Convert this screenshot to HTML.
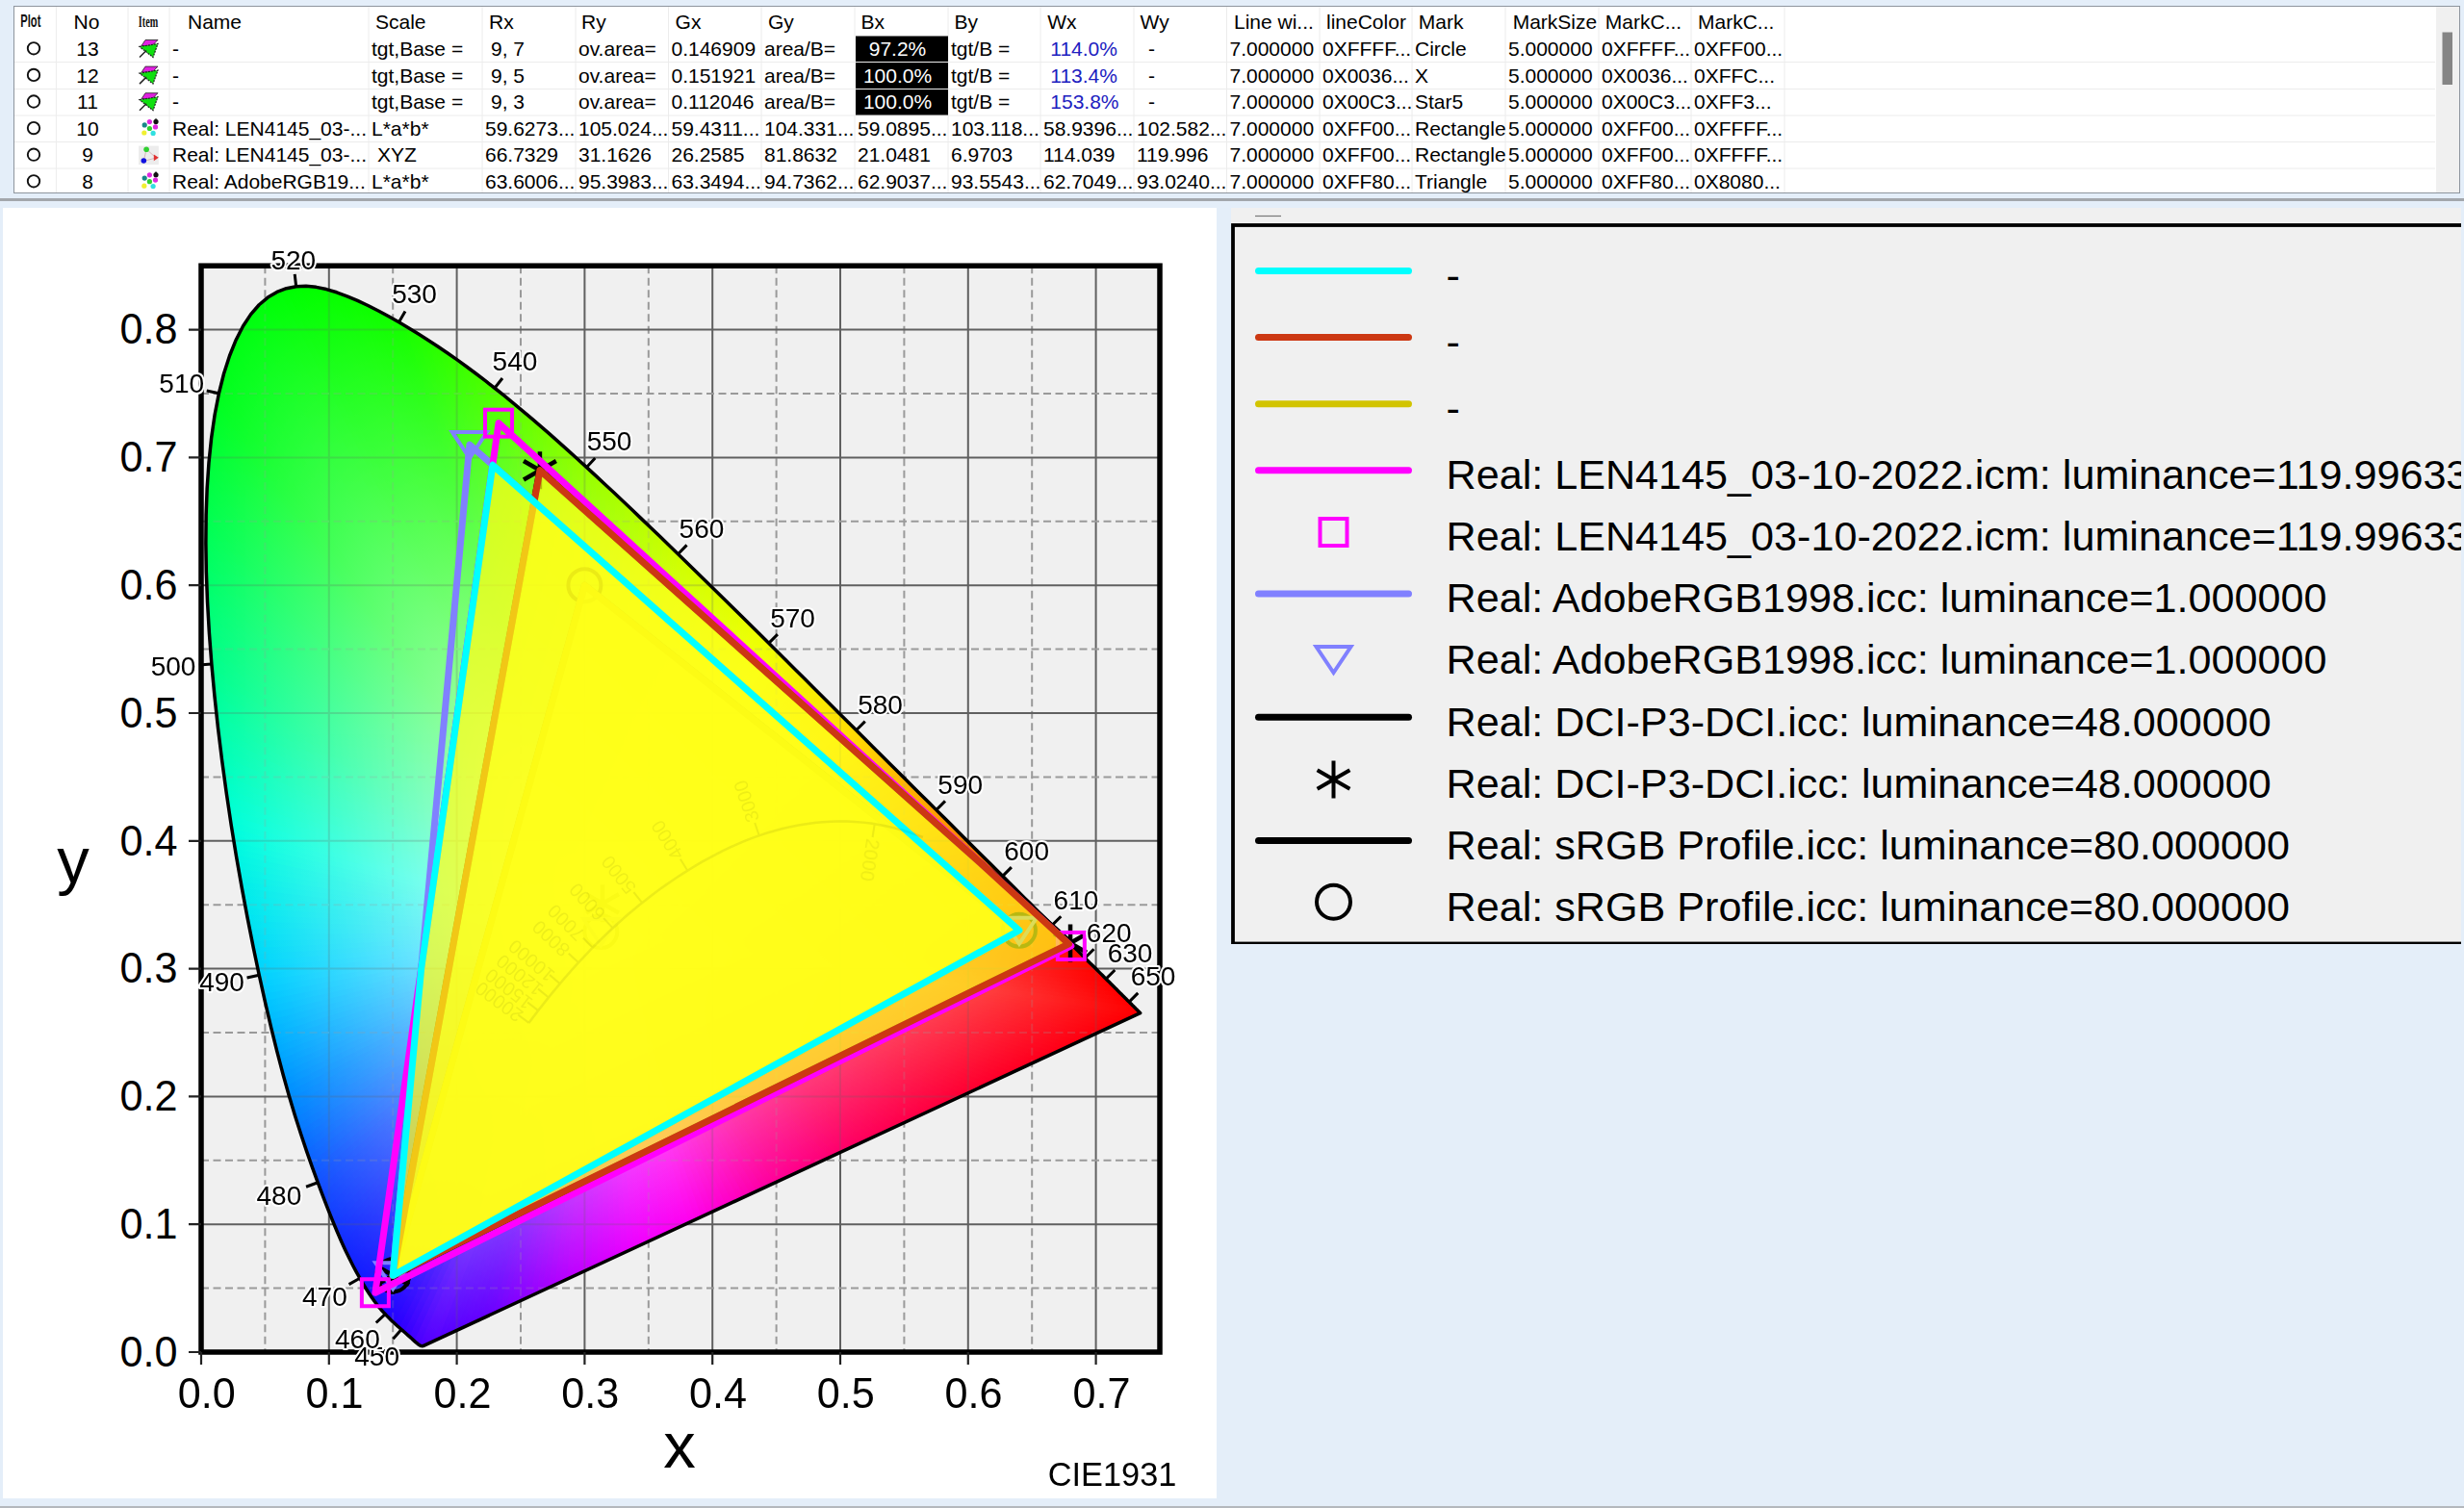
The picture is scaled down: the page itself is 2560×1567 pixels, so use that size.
<!DOCTYPE html>
<html><head><meta charset="utf-8"><style>
html,body{margin:0;padding:0;width:2560px;height:1567px;overflow:hidden;background:#e4eef9;}
svg{display:block;font-family:"Liberation Sans", sans-serif;}
</style></head><body>
<svg width="2560" height="1567" viewBox="0 0 2560 1567">
<rect x="0" y="0" width="2560" height="1567" fill="#e4eef9"/>
<rect x="14.5" y="6.5" width="2541" height="194" fill="#ffffff" stroke="#8e959e" stroke-width="1"/>
<rect x="0" y="206" width="2560" height="3" fill="#a3a7ac"/>
<rect x="3" y="216" width="1261" height="1341" fill="#ffffff"/>
<rect x="1279" y="216" width="1278" height="765" fill="#f0f0f0"/>
<rect x="0" y="1565" width="2560" height="2" fill="#b4b8bd"/>
<line x1="58.4" y1="7" x2="58.4" y2="200" stroke="#ececec" stroke-width="1"/>
<line x1="133" y1="7" x2="133" y2="200" stroke="#ececec" stroke-width="1"/>
<line x1="176" y1="7" x2="176" y2="200" stroke="#ececec" stroke-width="1"/>
<line x1="383" y1="7" x2="383" y2="200" stroke="#ececec" stroke-width="1"/>
<line x1="501" y1="7" x2="501" y2="200" stroke="#ececec" stroke-width="1"/>
<line x1="598" y1="7" x2="598" y2="200" stroke="#ececec" stroke-width="1"/>
<line x1="694.5" y1="7" x2="694.5" y2="200" stroke="#ececec" stroke-width="1"/>
<line x1="791" y1="7" x2="791" y2="200" stroke="#ececec" stroke-width="1"/>
<line x1="888" y1="7" x2="888" y2="200" stroke="#ececec" stroke-width="1"/>
<line x1="985" y1="7" x2="985" y2="200" stroke="#ececec" stroke-width="1"/>
<line x1="1081" y1="7" x2="1081" y2="200" stroke="#ececec" stroke-width="1"/>
<line x1="1178" y1="7" x2="1178" y2="200" stroke="#ececec" stroke-width="1"/>
<line x1="1274.5" y1="7" x2="1274.5" y2="200" stroke="#ececec" stroke-width="1"/>
<line x1="1371" y1="7" x2="1371" y2="200" stroke="#ececec" stroke-width="1"/>
<line x1="1467" y1="7" x2="1467" y2="200" stroke="#ececec" stroke-width="1"/>
<line x1="1564" y1="7" x2="1564" y2="200" stroke="#ececec" stroke-width="1"/>
<line x1="1661" y1="7" x2="1661" y2="200" stroke="#ececec" stroke-width="1"/>
<line x1="1757" y1="7" x2="1757" y2="200" stroke="#ececec" stroke-width="1"/>
<line x1="1854" y1="7" x2="1854" y2="200" stroke="#ececec" stroke-width="1"/>
<line x1="15" y1="64.5" x2="2530" y2="64.5" stroke="#ececec" stroke-width="1"/>
<line x1="15" y1="92.5" x2="2530" y2="92.5" stroke="#ececec" stroke-width="1"/>
<line x1="15" y1="120" x2="2530" y2="120" stroke="#ececec" stroke-width="1"/>
<line x1="15" y1="147.5" x2="2530" y2="147.5" stroke="#ececec" stroke-width="1"/>
<line x1="15" y1="175" x2="2530" y2="175" stroke="#ececec" stroke-width="1"/>
<rect x="2531" y="7" width="24" height="193" fill="#f0f0f0"/>
<rect x="2537.5" y="33.5" width="10.5" height="54.5" fill="#858585"/>
<rect x="889" y="37.5" width="96" height="26.5" fill="#000"/>
<rect x="889" y="65.0" width="96" height="27.0" fill="#000"/>
<rect x="889" y="93.0" width="96" height="26.5" fill="#000"/>
<text x="195" y="29.6" font-size="21" fill="#000">Name</text>
<text x="390" y="29.6" font-size="21" fill="#000">Scale</text>
<text x="508" y="29.6" font-size="21" fill="#000">Rx</text>
<text x="604" y="29.6" font-size="21" fill="#000">Ry</text>
<text x="701.6" y="29.6" font-size="21" fill="#000">Gx</text>
<text x="798" y="29.6" font-size="21" fill="#000">Gy</text>
<text x="894.4" y="29.6" font-size="21" fill="#000">Bx</text>
<text x="991.4" y="29.6" font-size="21" fill="#000">By</text>
<text x="1088.3" y="29.6" font-size="21" fill="#000">Wx</text>
<text x="1184.6" y="29.6" font-size="21" fill="#000">Wy</text>
<text x="1282" y="29.6" font-size="21" fill="#000">Line wi...</text>
<text x="1378" y="29.6" font-size="21" fill="#000">lineColor</text>
<text x="1473.8" y="29.6" font-size="21" fill="#000">Mark</text>
<text x="1571.7" y="29.6" font-size="21" fill="#000">MarkSize</text>
<text x="1667.8" y="29.6" font-size="21" fill="#000">MarkC...</text>
<text x="1764" y="29.6" font-size="21" fill="#000">MarkC...</text>
<text x="90" y="29.6" font-size="21" fill="#000" text-anchor="middle">No</text>
<text x="0" y="28.4" font-size="18" font-weight="bold" transform="translate(21.3 0) scale(0.62 1)" fill="#111">Plot</text>
<text x="0" y="28" font-size="17" font-weight="bold" font-family="Liberation Serif, serif" transform="translate(143.8 0) scale(0.6 1)" fill="#111">Item</text>
<circle cx="35" cy="50.3" r="6.2" fill="none" stroke="#111" stroke-width="1.9"/>
<text x="91" y="58" font-size="21" fill="#000" text-anchor="middle">13</text>
<text x="179" y="58" font-size="21" fill="#000">-</text>
<text x="386" y="58" font-size="21" fill="#000">tgt,Base =</text>
<text x="510" y="58" font-size="21" fill="#000">9, 7</text>
<text x="601" y="58" font-size="21" fill="#000">ov.area=</text>
<text x="697.5" y="58" font-size="21" fill="#000">0.146909</text>
<text x="794" y="58" font-size="21" fill="#000">area/B=</text>
<text x="932.5" y="58" font-size="21" fill="#fff" text-anchor="middle">97.2%</text>
<text x="988" y="58" font-size="21" fill="#000">tgt/B =</text>
<text x="1091.3" y="58" font-size="21" fill="#2020c0">114.0%</text>
<text x="1193" y="58" font-size="21" fill="#000">-</text>
<text x="1277.5" y="58" font-size="21" fill="#000">7.000000</text>
<text x="1374" y="58" font-size="21" fill="#000">0XFFFF...</text>
<text x="1470" y="58" font-size="21" fill="#000">Circle</text>
<text x="1567" y="58" font-size="21" fill="#000">5.000000</text>
<text x="1664" y="58" font-size="21" fill="#000">0XFFFF...</text>
<text x="1760" y="58" font-size="21" fill="#000">0XFF00...</text>
<circle cx="35" cy="77.9" r="6.2" fill="none" stroke="#111" stroke-width="1.9"/>
<text x="91" y="85.6" font-size="21" fill="#000" text-anchor="middle">12</text>
<text x="179" y="85.6" font-size="21" fill="#000">-</text>
<text x="386" y="85.6" font-size="21" fill="#000">tgt,Base =</text>
<text x="510" y="85.6" font-size="21" fill="#000">9, 5</text>
<text x="601" y="85.6" font-size="21" fill="#000">ov.area=</text>
<text x="697.5" y="85.6" font-size="21" fill="#000">0.151921</text>
<text x="794" y="85.6" font-size="21" fill="#000">area/B=</text>
<text x="932.5" y="85.6" font-size="21" fill="#fff" text-anchor="middle">100.0%</text>
<text x="988" y="85.6" font-size="21" fill="#000">tgt/B =</text>
<text x="1091.3" y="85.6" font-size="21" fill="#2020c0">113.4%</text>
<text x="1193" y="85.6" font-size="21" fill="#000">-</text>
<text x="1277.5" y="85.6" font-size="21" fill="#000">7.000000</text>
<text x="1374" y="85.6" font-size="21" fill="#000">0X0036...</text>
<text x="1470" y="85.6" font-size="21" fill="#000">X</text>
<text x="1567" y="85.6" font-size="21" fill="#000">5.000000</text>
<text x="1664" y="85.6" font-size="21" fill="#000">0X0036...</text>
<text x="1760" y="85.6" font-size="21" fill="#000">0XFFC...</text>
<circle cx="35" cy="105.5" r="6.2" fill="none" stroke="#111" stroke-width="1.9"/>
<text x="91" y="113.2" font-size="21" fill="#000" text-anchor="middle">11</text>
<text x="179" y="113.2" font-size="21" fill="#000">-</text>
<text x="386" y="113.2" font-size="21" fill="#000">tgt,Base =</text>
<text x="510" y="113.2" font-size="21" fill="#000">9, 3</text>
<text x="601" y="113.2" font-size="21" fill="#000">ov.area=</text>
<text x="697.5" y="113.2" font-size="21" fill="#000">0.112046</text>
<text x="794" y="113.2" font-size="21" fill="#000">area/B=</text>
<text x="932.5" y="113.2" font-size="21" fill="#fff" text-anchor="middle">100.0%</text>
<text x="988" y="113.2" font-size="21" fill="#000">tgt/B =</text>
<text x="1091.3" y="113.2" font-size="21" fill="#2020c0">153.8%</text>
<text x="1193" y="113.2" font-size="21" fill="#000">-</text>
<text x="1277.5" y="113.2" font-size="21" fill="#000">7.000000</text>
<text x="1374" y="113.2" font-size="21" fill="#000">0X00C3...</text>
<text x="1470" y="113.2" font-size="21" fill="#000">Star5</text>
<text x="1567" y="113.2" font-size="21" fill="#000">5.000000</text>
<text x="1664" y="113.2" font-size="21" fill="#000">0X00C3...</text>
<text x="1760" y="113.2" font-size="21" fill="#000">0XFF3...</text>
<circle cx="35" cy="133.1" r="6.2" fill="none" stroke="#111" stroke-width="1.9"/>
<text x="91" y="140.8" font-size="21" fill="#000" text-anchor="middle">10</text>
<text x="179" y="140.8" font-size="21" fill="#000">Real: LEN4145_03-...</text>
<text x="386" y="140.8" font-size="21" fill="#000">L*a*b*</text>
<text x="504" y="140.8" font-size="21" fill="#000">59.6273...</text>
<text x="601" y="140.8" font-size="21" fill="#000">105.024...</text>
<text x="697.5" y="140.8" font-size="21" fill="#000">59.4311...</text>
<text x="794" y="140.8" font-size="21" fill="#000">104.331...</text>
<text x="891" y="140.8" font-size="21" fill="#000">59.0895...</text>
<text x="988" y="140.8" font-size="21" fill="#000">103.118...</text>
<text x="1084" y="140.8" font-size="21" fill="#000">58.9396...</text>
<text x="1181" y="140.8" font-size="21" fill="#000">102.582...</text>
<text x="1277.5" y="140.8" font-size="21" fill="#000">7.000000</text>
<text x="1374" y="140.8" font-size="21" fill="#000">0XFF00...</text>
<text x="1470" y="140.8" font-size="21" fill="#000">Rectangle</text>
<text x="1567" y="140.8" font-size="21" fill="#000">5.000000</text>
<text x="1664" y="140.8" font-size="21" fill="#000">0XFF00...</text>
<text x="1760" y="140.8" font-size="21" fill="#000">0XFFFF...</text>
<circle cx="35" cy="160.7" r="6.2" fill="none" stroke="#111" stroke-width="1.9"/>
<text x="91" y="168.4" font-size="21" fill="#000" text-anchor="middle">9</text>
<text x="179" y="168.4" font-size="21" fill="#000">Real: LEN4145_03-...</text>
<text x="392" y="168.4" font-size="21" fill="#000">XYZ</text>
<text x="504" y="168.4" font-size="21" fill="#000">66.7329</text>
<text x="601" y="168.4" font-size="21" fill="#000">31.1626</text>
<text x="697.5" y="168.4" font-size="21" fill="#000">26.2585</text>
<text x="794" y="168.4" font-size="21" fill="#000">81.8632</text>
<text x="891" y="168.4" font-size="21" fill="#000">21.0481</text>
<text x="988" y="168.4" font-size="21" fill="#000">6.9703</text>
<text x="1084" y="168.4" font-size="21" fill="#000">114.039</text>
<text x="1181" y="168.4" font-size="21" fill="#000">119.996</text>
<text x="1277.5" y="168.4" font-size="21" fill="#000">7.000000</text>
<text x="1374" y="168.4" font-size="21" fill="#000">0XFF00...</text>
<text x="1470" y="168.4" font-size="21" fill="#000">Rectangle</text>
<text x="1567" y="168.4" font-size="21" fill="#000">5.000000</text>
<text x="1664" y="168.4" font-size="21" fill="#000">0XFF00...</text>
<text x="1760" y="168.4" font-size="21" fill="#000">0XFFFF...</text>
<circle cx="35" cy="188.3" r="6.2" fill="none" stroke="#111" stroke-width="1.9"/>
<text x="91" y="196" font-size="21" fill="#000" text-anchor="middle">8</text>
<text x="179" y="196" font-size="21" fill="#000">Real: AdobeRGB19...</text>
<text x="386" y="196" font-size="21" fill="#000">L*a*b*</text>
<text x="504" y="196" font-size="21" fill="#000">63.6006...</text>
<text x="601" y="196" font-size="21" fill="#000">95.3983...</text>
<text x="697.5" y="196" font-size="21" fill="#000">63.3494...</text>
<text x="794" y="196" font-size="21" fill="#000">94.7362...</text>
<text x="891" y="196" font-size="21" fill="#000">62.9037...</text>
<text x="988" y="196" font-size="21" fill="#000">93.5543...</text>
<text x="1084" y="196" font-size="21" fill="#000">62.7049...</text>
<text x="1181" y="196" font-size="21" fill="#000">93.0240...</text>
<text x="1277.5" y="196" font-size="21" fill="#000">7.000000</text>
<text x="1374" y="196" font-size="21" fill="#000">0XFF80...</text>
<text x="1470" y="196" font-size="21" fill="#000">Triangle</text>
<text x="1567" y="196" font-size="21" fill="#000">5.000000</text>
<text x="1664" y="196" font-size="21" fill="#000">0XFF80...</text>
<text x="1760" y="196" font-size="21" fill="#000">0X8080...</text>
<g transform="translate(154 50.5)"><path d="M-3,-9 L10,-9 L4,-3 L-7,-3 Z" fill="#e020e0" stroke="#222" stroke-width="0.8"/><path d="M-9,-2 L10,-5 L5,9 Z" fill="#10e010" stroke="#222" stroke-width="1.2" stroke-dasharray="2 1"/><path d="M-9,9 L-2,2" stroke="#222" stroke-width="1.5"/></g>
<g transform="translate(154 78.1)"><path d="M-3,-9 L10,-9 L4,-3 L-7,-3 Z" fill="#e020e0" stroke="#222" stroke-width="0.8"/><path d="M-9,-2 L10,-5 L5,9 Z" fill="#10e010" stroke="#222" stroke-width="1.2" stroke-dasharray="2 1"/><path d="M-9,9 L-2,2" stroke="#222" stroke-width="1.5"/></g>
<g transform="translate(154 105.7)"><path d="M-3,-9 L10,-9 L4,-3 L-7,-3 Z" fill="#e020e0" stroke="#222" stroke-width="0.8"/><path d="M-9,-2 L10,-5 L5,9 Z" fill="#10e010" stroke="#222" stroke-width="1.2" stroke-dasharray="2 1"/><path d="M-9,9 L-2,2" stroke="#222" stroke-width="1.5"/></g>
<g transform="translate(154.8 131.2)"><circle cx="-4.6" cy="-1.3" r="2.6" fill="#188888"/><circle cx="0.6" cy="-4.6" r="2.6" fill="#e028e0"/><circle cx="7.2" cy="-4.6" r="2.6" fill="#111"/><circle cx="6.7" cy="0.7" r="2.6" fill="#e028e0"/><circle cx="0.6" cy="2.3" r="2.6" fill="#30d030"/><circle cx="-5" cy="6.8" r="2.6" fill="#f0f030"/><circle cx="4.3" cy="7.2" r="2.6" fill="#30e0e0"/><path d="M7.2,-8.5 L9.5,-5.5 L7.2,-2.5 L4.9,-5.5Z" fill="#111"/></g>
<g transform="translate(154.3 161.2)"><rect x="-10.3" y="-9.6" width="20.8" height="19.5" fill="#ececec"/><path d="M-2.2,-6 L8,2.8 L-5,6.2 Z" fill="none" stroke="#d8b8b8" stroke-width="1"/><circle cx="-2.2" cy="-6" r="2.8" fill="#30d030"/><circle cx="-5" cy="5.8" r="2.8" fill="#1010e0"/><path d="M5.5,-0.8 L10.5,2.6 L5.5,6Z" fill="#e03030"/></g>
<g transform="translate(154.8 186.39999999999998)"><circle cx="-4.6" cy="-1.3" r="2.6" fill="#188888"/><circle cx="0.6" cy="-4.6" r="2.6" fill="#e028e0"/><circle cx="7.2" cy="-4.6" r="2.6" fill="#111"/><circle cx="6.7" cy="0.7" r="2.6" fill="#e028e0"/><circle cx="0.6" cy="2.3" r="2.6" fill="#30d030"/><circle cx="-5" cy="6.8" r="2.6" fill="#f0f030"/><circle cx="4.3" cy="7.2" r="2.6" fill="#30e0e0"/><path d="M7.2,-8.5 L9.5,-5.5 L7.2,-2.5 L4.9,-5.5Z" fill="#111"/></g>
<line x1="1304" y1="224.5" x2="1331" y2="224.5" stroke="#777" stroke-width="1.2"/>
<clipPath id="legclip"><rect x="1279" y="216" width="1278" height="765"/></clipPath>
<g clip-path="url(#legclip)">
<rect x="1281" y="234" width="1290" height="746.5" fill="none" stroke="#000" stroke-width="3.8"/>
<text x="1502.5" y="300.7" font-size="43.15" fill="#000">-</text>
<text x="1502.5" y="369.9" font-size="43.15" fill="#000">-</text>
<text x="1502.5" y="439.1" font-size="43.15" fill="#000">-</text>
<text x="1502.5" y="507.9" font-size="43.15" fill="#000">Real: LEN4145_03-10-2022.icm: luminance=119.996338</text>
<text x="1502.5" y="572.2" font-size="43.15" fill="#000">Real: LEN4145_03-10-2022.icm: luminance=119.996338</text>
<text x="1502.5" y="636.3" font-size="43.15" fill="#000">Real: AdobeRGB1998.icc: luminance=1.000000</text>
<text x="1502.5" y="700.4" font-size="43.15" fill="#000">Real: AdobeRGB1998.icc: luminance=1.000000</text>
<text x="1502.5" y="764.5" font-size="43.15" fill="#000">Real: DCI-P3-DCI.icc: luminance=48.000000</text>
<text x="1502.5" y="828.6" font-size="43.15" fill="#000">Real: DCI-P3-DCI.icc: luminance=48.000000</text>
<text x="1502.5" y="892.7" font-size="43.15" fill="#000">Real: sRGB Profile.icc: luminance=80.000000</text>
<text x="1502.5" y="956.8" font-size="43.15" fill="#000">Real: sRGB Profile.icc: luminance=80.000000</text>
</g>
<line x1="1307.5" y1="281.6" x2="1463.5" y2="281.6" stroke="#00ffff" stroke-width="7" stroke-linecap="round"/>
<line x1="1307.5" y1="350.6" x2="1463.5" y2="350.6" stroke="#cc3812" stroke-width="7" stroke-linecap="round"/>
<line x1="1307.5" y1="419.8" x2="1463.5" y2="419.8" stroke="#d2c400" stroke-width="7" stroke-linecap="round"/>
<line x1="1307.5" y1="488.7" x2="1463.5" y2="488.7" stroke="#ff00ff" stroke-width="7" stroke-linecap="round"/>
<line x1="1307.5" y1="617" x2="1463.5" y2="617" stroke="#8080ff" stroke-width="7" stroke-linecap="round"/>
<line x1="1307.5" y1="745.3" x2="1463.5" y2="745.3" stroke="#000" stroke-width="7" stroke-linecap="round"/>
<line x1="1307.5" y1="873.4" x2="1463.5" y2="873.4" stroke="#000" stroke-width="7" stroke-linecap="round"/>
<rect x="1371.5" y="539" width="28" height="28" fill="none" stroke="#ff00ff" stroke-width="4"/>
<path d="M1367.5,672 L1403.5,672 L1385.5,699 Z" fill="none" stroke="#8080ff" stroke-width="4" stroke-linejoin="miter"/>
<path d="M1385.5,790.5L1385.5,829.5M1402.4,800.2L1368.6,819.8M1402.4,819.8L1368.6,800.2" stroke="#000" stroke-width="4" fill="none"/>
<circle cx="1385.5" cy="937.3" r="17.5" fill="none" stroke="#000" stroke-width="4"/>
<rect x="209.0" y="276.2" width="996" height="1128.8" fill="#f0f0f0"/>
<line x1="275.4" y1="276.2" x2="275.4" y2="1405.0" stroke="#9a9a9a" stroke-width="2" stroke-dasharray="8 4.5"/><line x1="341.8" y1="276.2" x2="341.8" y2="1405.0" stroke="#606060" stroke-width="2"/><line x1="408.2" y1="276.2" x2="408.2" y2="1405.0" stroke="#9a9a9a" stroke-width="2" stroke-dasharray="8 4.5"/><line x1="474.6" y1="276.2" x2="474.6" y2="1405.0" stroke="#606060" stroke-width="2"/><line x1="541" y1="276.2" x2="541" y2="1405.0" stroke="#9a9a9a" stroke-width="2" stroke-dasharray="8 4.5"/><line x1="607.4" y1="276.2" x2="607.4" y2="1405.0" stroke="#606060" stroke-width="2"/><line x1="673.8" y1="276.2" x2="673.8" y2="1405.0" stroke="#9a9a9a" stroke-width="2" stroke-dasharray="8 4.5"/><line x1="740.2" y1="276.2" x2="740.2" y2="1405.0" stroke="#606060" stroke-width="2"/><line x1="806.6" y1="276.2" x2="806.6" y2="1405.0" stroke="#9a9a9a" stroke-width="2" stroke-dasharray="8 4.5"/><line x1="873" y1="276.2" x2="873" y2="1405.0" stroke="#606060" stroke-width="2"/><line x1="939.4" y1="276.2" x2="939.4" y2="1405.0" stroke="#9a9a9a" stroke-width="2" stroke-dasharray="8 4.5"/><line x1="1005.8" y1="276.2" x2="1005.8" y2="1405.0" stroke="#606060" stroke-width="2"/><line x1="1072.2" y1="276.2" x2="1072.2" y2="1405.0" stroke="#9a9a9a" stroke-width="2" stroke-dasharray="8 4.5"/><line x1="1138.6" y1="276.2" x2="1138.6" y2="1405.0" stroke="#606060" stroke-width="2"/><line x1="209.0" y1="1338.6" x2="1205" y2="1338.6" stroke="#9a9a9a" stroke-width="2" stroke-dasharray="8 4.5"/><line x1="209.0" y1="1272.2" x2="1205" y2="1272.2" stroke="#606060" stroke-width="2"/><line x1="209.0" y1="1205.8" x2="1205" y2="1205.8" stroke="#9a9a9a" stroke-width="2" stroke-dasharray="8 4.5"/><line x1="209.0" y1="1139.4" x2="1205" y2="1139.4" stroke="#606060" stroke-width="2"/><line x1="209.0" y1="1073" x2="1205" y2="1073" stroke="#9a9a9a" stroke-width="2" stroke-dasharray="8 4.5"/><line x1="209.0" y1="1006.6" x2="1205" y2="1006.6" stroke="#606060" stroke-width="2"/><line x1="209.0" y1="940.2" x2="1205" y2="940.2" stroke="#9a9a9a" stroke-width="2" stroke-dasharray="8 4.5"/><line x1="209.0" y1="873.8" x2="1205" y2="873.8" stroke="#606060" stroke-width="2"/><line x1="209.0" y1="807.4" x2="1205" y2="807.4" stroke="#9a9a9a" stroke-width="2" stroke-dasharray="8 4.5"/><line x1="209.0" y1="741" x2="1205" y2="741" stroke="#606060" stroke-width="2"/><line x1="209.0" y1="674.6" x2="1205" y2="674.6" stroke="#9a9a9a" stroke-width="2" stroke-dasharray="8 4.5"/><line x1="209.0" y1="608.2" x2="1205" y2="608.2" stroke="#606060" stroke-width="2"/><line x1="209.0" y1="541.8" x2="1205" y2="541.8" stroke="#9a9a9a" stroke-width="2" stroke-dasharray="8 4.5"/><line x1="209.0" y1="475.4" x2="1205" y2="475.4" stroke="#606060" stroke-width="2"/><line x1="209.0" y1="409" x2="1205" y2="409" stroke="#9a9a9a" stroke-width="2" stroke-dasharray="8 4.5"/><line x1="209.0" y1="342.6" x2="1205" y2="342.6" stroke="#606060" stroke-width="2"/>
<clipPath id="lc"><path d="M440.22,1398.41 L440.21,1398.38 L440.19,1398.37 L440.16,1398.37 L440.13,1398.37 L440.09,1398.39 L440.04,1398.41 L439.99,1398.42 L439.93,1398.44 L439.87,1398.46 L439.81,1398.47 L439.74,1398.47 L439.68,1398.46 L439.61,1398.46 L439.55,1398.46 L439.49,1398.47 L439.43,1398.49 L439.37,1398.52 L439.32,1398.56 L439.26,1398.6 L439.2,1398.63 L439.13,1398.65 L439.05,1398.66 L438.96,1398.66 L438.87,1398.66 L438.77,1398.65 L438.66,1398.65 L438.55,1398.64 L438.43,1398.63 L438.31,1398.63 L438.19,1398.63 L438.06,1398.63 L437.94,1398.62 L437.81,1398.62 L437.67,1398.61 L437.54,1398.59 L437.39,1398.55 L437.23,1398.5 L437.05,1398.43 L436.86,1398.34 L436.63,1398.23 L436.38,1398.09 L436.1,1397.93 L435.8,1397.74 L435.49,1397.54 L435.16,1397.31 L434.82,1397.06 L434.47,1396.79 L434.1,1396.5 L433.7,1396.18 L433.27,1395.84 L432.81,1395.46 L432.31,1395.05 L431.78,1394.62 L431.22,1394.14 L430.64,1393.63 L430.04,1393.09 L429.41,1392.51 L428.76,1391.89 L428.07,1391.25 L427.34,1390.58 L426.56,1389.88 L425.74,1389.15 L424.87,1388.38 L423.93,1387.56 L422.94,1386.69 L421.88,1385.76 L420.76,1384.77 L419.57,1383.72 L418.32,1382.62 L417.02,1381.48 L415.65,1380.29 L414.23,1379.04 L412.73,1377.72 L411.16,1376.31 L409.51,1374.8 L407.79,1373.18 L405.98,1371.45 L404.11,1369.6 L402.17,1367.64 L400.18,1365.56 L398.13,1363.35 L396.01,1360.97 L393.79,1358.33 L391.45,1355.38 L388.94,1352.04 L386.27,1348.26 L383.41,1344.01 L380.38,1339.27 L377.19,1334.02 L373.83,1328.24 L370.31,1321.91 L366.63,1314.96 L362.77,1307.32 L358.75,1298.92 L354.54,1289.68 L350.14,1279.53 L345.53,1268.42 L340.69,1256.29 L335.6,1243.09 L330.23,1228.77 L324.58,1213.28 L318.7,1196.55 L312.64,1178.54 L306.47,1159.19 L300.25,1138.44 L294.03,1116.26 L287.82,1092.65 L281.63,1067.6 L275.45,1041.14 L269.28,1013.27 L263.13,984.03 L257.08,953.58 L251.18,922.12 L245.51,889.84 L240.15,856.93 L235.17,823.6 L230.61,790.03 L226.5,756.44 L222.91,723.02 L219.85,689.98 L217.38,657.5 L215.53,625.71 L214.35,594.7 L213.87,564.56 L214.13,535.4 L215.16,507.32 L217,480.47 L219.64,454.99 L223.11,431.03 L227.42,408.75 L232.57,388.27 L238.52,369.72 L245.21,353.2 L252.59,338.8 L260.59,326.64 L269.17,316.76 L278.24,309.08 L287.73,303.44 L297.56,299.7 L307.67,297.71 L317.98,297.33 L328.46,298.35 L339.07,300.57 L349.8,303.79 L360.6,307.79 L371.46,312.4 L382.33,317.5 L393.15,323 L403.88,328.8 L414.47,334.82 L424.88,340.97 L435.13,347.25 L445.23,353.67 L455.23,360.25 L465.14,367 L474.99,373.92 L484.79,381.01 L494.54,388.27 L504.26,395.68 L513.94,403.25 L523.59,410.96 L533.21,418.81 L542.82,426.79 L552.4,434.89 L561.96,443.1 L571.49,451.42 L581.02,459.83 L590.53,468.34 L600.03,476.94 L609.52,485.61 L619.02,494.37 L628.52,503.19 L638.02,512.08 L647.52,521.04 L657.01,530.05 L666.51,539.11 L676.01,548.21 L685.5,557.35 L694.99,566.53 L704.48,575.73 L713.96,584.95 L723.44,594.2 L732.91,603.45 L742.36,612.72 L751.81,622 L761.23,631.28 L770.64,640.56 L780.02,649.83 L789.38,659.1 L798.71,668.35 L808.01,677.57 L817.27,686.78 L826.5,695.95 L835.68,705.08 L844.81,714.17 L853.88,723.22 L862.91,732.21 L871.87,741.14 L880.76,750.01 L889.59,758.81 L898.34,767.53 L907.01,776.17 L915.6,784.72 L924.09,793.17 L932.48,801.52 L940.77,809.76 L948.95,817.89 L957.01,825.91 L964.97,833.82 L972.8,841.62 L980.51,849.31 L988.07,856.86 L995.48,864.26 L1002.69,871.46 L1009.69,878.45 L1016.47,885.21 L1023.04,891.75 L1029.42,898.1 L1035.63,904.29 L1041.71,910.33 L1047.66,916.26 L1053.47,922.05 L1059.12,927.67 L1064.58,933.12 L1069.85,938.35 L1074.9,943.37 L1079.74,948.17 L1084.38,952.77 L1088.84,957.18 L1093.13,961.43 L1097.25,965.53 L1101.22,969.47 L1105.02,973.26 L1108.66,976.9 L1112.15,980.37 L1115.47,983.69 L1118.64,986.86 L1121.66,989.88 L1124.55,992.77 L1127.31,995.52 L1129.95,998.15 L1132.48,1000.66 L1134.9,1003.06 L1137.21,1005.34 L1139.41,1007.53 L1141.52,1009.62 L1143.53,1011.62 L1145.46,1013.54 L1147.32,1015.39 L1149.12,1017.18 L1150.86,1018.92 L1152.54,1020.6 L1154.16,1022.22 L1155.73,1023.78 L1157.23,1025.28 L1158.67,1026.73 L1160.06,1028.11 L1161.38,1029.44 L1162.65,1030.71 L1163.87,1031.92 L1165.04,1033.09 L1166.16,1034.21 L1167.23,1035.27 L1168.24,1036.27 L1169.18,1037.21 L1170.07,1038.09 L1170.9,1038.91 L1171.68,1039.69 L1172.42,1040.42 L1173.11,1041.11 L1173.78,1041.78 L1174.42,1042.41 L1175.02,1043.02 L1175.6,1043.6 L1176.14,1044.14 L1176.66,1044.66 L1177.14,1045.15 L1177.6,1045.6 L1178.02,1046.02 L1178.4,1046.4 L1178.75,1046.75 L1179.06,1047.06 L1179.35,1047.35 L1179.63,1047.63 L1179.89,1047.89 L1180.14,1048.14 L1180.39,1048.39 L1180.63,1048.63 L1180.86,1048.86 L1181.08,1049.08 L1181.29,1049.29 L1181.49,1049.49 L1181.68,1049.68 L1181.87,1049.87 L1182.05,1050.05 L1182.24,1050.24 L1182.42,1050.42 L1182.61,1050.61 L1182.8,1050.8 L1182.98,1050.98 L1183.17,1051.17 L1183.35,1051.35 L1183.52,1051.52 L1183.68,1051.68 L1183.82,1051.82 L1183.94,1051.94 L1184.04,1052.04 L1184.13,1052.13 L1184.2,1052.2 L1184.27,1052.27 L1184.33,1052.33 L1184.39,1052.39 L1184.44,1052.44 L1184.49,1052.49 L1184.54,1052.54 L1184.57,1052.57 L1184.61,1052.61 L1184.63,1052.63 L1184.65,1052.65 L1184.67,1052.67 Z"/></clipPath>
<defs><radialGradient id="w0" gradientUnits="userSpaceOnUse" cx="624.27" cy="968.09" r="468.34"><stop offset="0" stop-color="#fff"/><stop offset="0.35" stop-color="#b896ff"/><stop offset="0.7" stop-color="#7f43ff"/><stop offset="1" stop-color="#5100ff"/></radialGradient><radialGradient id="w1" gradientUnits="userSpaceOnUse" cx="624.27" cy="968.09" r="467.67"><stop offset="0" stop-color="#fff"/><stop offset="0.35" stop-color="#b596ff"/><stop offset="0.7" stop-color="#7a43ff"/><stop offset="1" stop-color="#4b00ff"/></radialGradient><radialGradient id="w2" gradientUnits="userSpaceOnUse" cx="624.27" cy="968.09" r="465.66"><stop offset="0" stop-color="#fff"/><stop offset="0.35" stop-color="#b196ff"/><stop offset="0.7" stop-color="#7343ff"/><stop offset="1" stop-color="#4100ff"/></radialGradient><radialGradient id="w3" gradientUnits="userSpaceOnUse" cx="624.27" cy="968.09" r="463.73"><stop offset="0" stop-color="#fff"/><stop offset="0.35" stop-color="#ae96ff"/><stop offset="0.7" stop-color="#6d43ff"/><stop offset="1" stop-color="#3900ff"/></radialGradient><radialGradient id="w4" gradientUnits="userSpaceOnUse" cx="624.27" cy="968.09" r="461.93"><stop offset="0" stop-color="#fff"/><stop offset="0.35" stop-color="#aa97ff"/><stop offset="0.7" stop-color="#6743ff"/><stop offset="1" stop-color="#3100ff"/></radialGradient><radialGradient id="w5" gradientUnits="userSpaceOnUse" cx="624.27" cy="968.09" r="460.17"><stop offset="0" stop-color="#fff"/><stop offset="0.35" stop-color="#a897ff"/><stop offset="0.7" stop-color="#6244ff"/><stop offset="1" stop-color="#2a01ff"/></radialGradient><radialGradient id="w6" gradientUnits="userSpaceOnUse" cx="624.27" cy="968.09" r="458.3"><stop offset="0" stop-color="#fff"/><stop offset="0.35" stop-color="#a698ff"/><stop offset="0.7" stop-color="#5e45ff"/><stop offset="1" stop-color="#2503ff"/></radialGradient><radialGradient id="w7" gradientUnits="userSpaceOnUse" cx="624.27" cy="968.09" r="456.3"><stop offset="0" stop-color="#fff"/><stop offset="0.35" stop-color="#a498ff"/><stop offset="0.7" stop-color="#5b46ff"/><stop offset="1" stop-color="#2105ff"/></radialGradient><radialGradient id="w8" gradientUnits="userSpaceOnUse" cx="624.27" cy="968.09" r="454.11"><stop offset="0" stop-color="#fff"/><stop offset="0.35" stop-color="#a399ff"/><stop offset="0.7" stop-color="#5948ff"/><stop offset="1" stop-color="#1d07ff"/></radialGradient><radialGradient id="w9" gradientUnits="userSpaceOnUse" cx="624.27" cy="968.09" r="451.67"><stop offset="0" stop-color="#fff"/><stop offset="0.35" stop-color="#a19aff"/><stop offset="0.7" stop-color="#574aff"/><stop offset="1" stop-color="#1b0aff"/></radialGradient><radialGradient id="w10" gradientUnits="userSpaceOnUse" cx="624.27" cy="968.09" r="449.02"><stop offset="0" stop-color="#fff"/><stop offset="0.35" stop-color="#a19cff"/><stop offset="0.7" stop-color="#554cff"/><stop offset="1" stop-color="#190dff"/></radialGradient><radialGradient id="w11" gradientUnits="userSpaceOnUse" cx="624.27" cy="968.09" r="446.2"><stop offset="0" stop-color="#fff"/><stop offset="0.35" stop-color="#a09dff"/><stop offset="0.7" stop-color="#544fff"/><stop offset="1" stop-color="#1710ff"/></radialGradient><radialGradient id="w12" gradientUnits="userSpaceOnUse" cx="624.27" cy="968.09" r="443.29"><stop offset="0" stop-color="#fff"/><stop offset="0.35" stop-color="#9f9fff"/><stop offset="0.7" stop-color="#5351ff"/><stop offset="1" stop-color="#1614ff"/></radialGradient><radialGradient id="w13" gradientUnits="userSpaceOnUse" cx="624.27" cy="968.09" r="440.31"><stop offset="0" stop-color="#fff"/><stop offset="0.35" stop-color="#9fa0ff"/><stop offset="0.7" stop-color="#5254ff"/><stop offset="1" stop-color="#1517ff"/></radialGradient><radialGradient id="w14" gradientUnits="userSpaceOnUse" cx="624.27" cy="968.09" r="437.29"><stop offset="0" stop-color="#fff"/><stop offset="0.35" stop-color="#9fa1ff"/><stop offset="0.7" stop-color="#5257ff"/><stop offset="1" stop-color="#141bff"/></radialGradient><radialGradient id="w15" gradientUnits="userSpaceOnUse" cx="624.27" cy="968.09" r="434.23"><stop offset="0" stop-color="#fff"/><stop offset="0.35" stop-color="#9fa3ff"/><stop offset="0.7" stop-color="#5259ff"/><stop offset="1" stop-color="#141eff"/></radialGradient><radialGradient id="w16" gradientUnits="userSpaceOnUse" cx="624.27" cy="968.09" r="431.16"><stop offset="0" stop-color="#fff"/><stop offset="0.35" stop-color="#9fa4ff"/><stop offset="0.7" stop-color="#525cff"/><stop offset="1" stop-color="#1422ff"/></radialGradient><radialGradient id="w17" gradientUnits="userSpaceOnUse" cx="624.27" cy="968.09" r="428.07"><stop offset="0" stop-color="#fff"/><stop offset="0.35" stop-color="#9fa6ff"/><stop offset="0.7" stop-color="#525eff"/><stop offset="1" stop-color="#1425ff"/></radialGradient><radialGradient id="w18" gradientUnits="userSpaceOnUse" cx="624.27" cy="968.09" r="424.97"><stop offset="0" stop-color="#fff"/><stop offset="0.35" stop-color="#9fa7ff"/><stop offset="0.7" stop-color="#5260ff"/><stop offset="1" stop-color="#1428ff"/></radialGradient><radialGradient id="w19" gradientUnits="userSpaceOnUse" cx="624.27" cy="968.09" r="421.88"><stop offset="0" stop-color="#fff"/><stop offset="0.35" stop-color="#9fa8ff"/><stop offset="0.7" stop-color="#5263ff"/><stop offset="1" stop-color="#142bff"/></radialGradient><radialGradient id="w20" gradientUnits="userSpaceOnUse" cx="624.27" cy="968.09" r="418.8"><stop offset="0" stop-color="#fff"/><stop offset="0.35" stop-color="#9faaff"/><stop offset="0.7" stop-color="#5265ff"/><stop offset="1" stop-color="#142fff"/></radialGradient><radialGradient id="w21" gradientUnits="userSpaceOnUse" cx="624.27" cy="968.09" r="415.74"><stop offset="0" stop-color="#fff"/><stop offset="0.35" stop-color="#9fabff"/><stop offset="0.7" stop-color="#5268ff"/><stop offset="1" stop-color="#1433ff"/></radialGradient><radialGradient id="w22" gradientUnits="userSpaceOnUse" cx="624.27" cy="968.09" r="412.7"><stop offset="0" stop-color="#fff"/><stop offset="0.35" stop-color="#9fadff"/><stop offset="0.7" stop-color="#526bff"/><stop offset="1" stop-color="#1437ff"/></radialGradient><radialGradient id="w23" gradientUnits="userSpaceOnUse" cx="624.27" cy="968.09" r="409.71"><stop offset="0" stop-color="#fff"/><stop offset="0.35" stop-color="#9fafff"/><stop offset="0.7" stop-color="#526eff"/><stop offset="1" stop-color="#143bff"/></radialGradient><radialGradient id="w24" gradientUnits="userSpaceOnUse" cx="624.27" cy="968.09" r="406.78"><stop offset="0" stop-color="#fff"/><stop offset="0.35" stop-color="#9fb0ff"/><stop offset="0.7" stop-color="#5271ff"/><stop offset="1" stop-color="#143fff"/></radialGradient><radialGradient id="w25" gradientUnits="userSpaceOnUse" cx="624.27" cy="968.09" r="403.9"><stop offset="0" stop-color="#fff"/><stop offset="0.35" stop-color="#9fb2ff"/><stop offset="0.7" stop-color="#5274ff"/><stop offset="1" stop-color="#1442ff"/></radialGradient><radialGradient id="w26" gradientUnits="userSpaceOnUse" cx="624.27" cy="968.09" r="401.08"><stop offset="0" stop-color="#fff"/><stop offset="0.35" stop-color="#9fb3ff"/><stop offset="0.7" stop-color="#5276ff"/><stop offset="1" stop-color="#1446ff"/></radialGradient><radialGradient id="w27" gradientUnits="userSpaceOnUse" cx="624.27" cy="968.09" r="398.34"><stop offset="0" stop-color="#fff"/><stop offset="0.35" stop-color="#9fb5ff"/><stop offset="0.7" stop-color="#5279ff"/><stop offset="1" stop-color="#1449ff"/></radialGradient><radialGradient id="w28" gradientUnits="userSpaceOnUse" cx="624.27" cy="968.09" r="395.67"><stop offset="0" stop-color="#fff"/><stop offset="0.35" stop-color="#9fb6ff"/><stop offset="0.7" stop-color="#517bff"/><stop offset="1" stop-color="#144dff"/></radialGradient><radialGradient id="w29" gradientUnits="userSpaceOnUse" cx="624.27" cy="968.09" r="393.08"><stop offset="0" stop-color="#fff"/><stop offset="0.35" stop-color="#9eb8ff"/><stop offset="0.7" stop-color="#517eff"/><stop offset="1" stop-color="#1351ff"/></radialGradient><radialGradient id="w30" gradientUnits="userSpaceOnUse" cx="624.27" cy="968.09" r="390.57"><stop offset="0" stop-color="#fff"/><stop offset="0.35" stop-color="#9eb9ff"/><stop offset="0.7" stop-color="#5082ff"/><stop offset="1" stop-color="#1255ff"/></radialGradient><radialGradient id="w31" gradientUnits="userSpaceOnUse" cx="624.27" cy="968.09" r="388.15"><stop offset="0" stop-color="#fff"/><stop offset="0.35" stop-color="#9dbbff"/><stop offset="0.7" stop-color="#4f85ff"/><stop offset="1" stop-color="#115aff"/></radialGradient><radialGradient id="w32" gradientUnits="userSpaceOnUse" cx="624.27" cy="968.09" r="385.81"><stop offset="0" stop-color="#fff"/><stop offset="0.35" stop-color="#9dbdff"/><stop offset="0.7" stop-color="#4e89ff"/><stop offset="1" stop-color="#0f5fff"/></radialGradient><radialGradient id="w33" gradientUnits="userSpaceOnUse" cx="624.27" cy="968.09" r="383.55"><stop offset="0" stop-color="#fff"/><stop offset="0.35" stop-color="#9cbfff"/><stop offset="0.7" stop-color="#4d8cff"/><stop offset="1" stop-color="#0d64ff"/></radialGradient><radialGradient id="w34" gradientUnits="userSpaceOnUse" cx="624.27" cy="968.09" r="381.37"><stop offset="0" stop-color="#fff"/><stop offset="0.35" stop-color="#9bc1ff"/><stop offset="0.7" stop-color="#4c90ff"/><stop offset="1" stop-color="#0c68ff"/></radialGradient><radialGradient id="w35" gradientUnits="userSpaceOnUse" cx="624.27" cy="968.09" r="379.28"><stop offset="0" stop-color="#fff"/><stop offset="0.35" stop-color="#9bc3ff"/><stop offset="0.7" stop-color="#4a93ff"/><stop offset="1" stop-color="#0a6dff"/></radialGradient><radialGradient id="w36" gradientUnits="userSpaceOnUse" cx="624.27" cy="968.09" r="377.27"><stop offset="0" stop-color="#fff"/><stop offset="0.35" stop-color="#9ac5ff"/><stop offset="0.7" stop-color="#4996ff"/><stop offset="1" stop-color="#0971ff"/></radialGradient><radialGradient id="w37" gradientUnits="userSpaceOnUse" cx="624.27" cy="968.09" r="375.34"><stop offset="0" stop-color="#fff"/><stop offset="0.35" stop-color="#9ac7ff"/><stop offset="0.7" stop-color="#4899ff"/><stop offset="1" stop-color="#0875ff"/></radialGradient><radialGradient id="w38" gradientUnits="userSpaceOnUse" cx="624.27" cy="968.09" r="373.49"><stop offset="0" stop-color="#fff"/><stop offset="0.35" stop-color="#99c8ff"/><stop offset="0.7" stop-color="#479dff"/><stop offset="1" stop-color="#067aff"/></radialGradient><radialGradient id="w39" gradientUnits="userSpaceOnUse" cx="624.27" cy="968.09" r="371.73"><stop offset="0" stop-color="#fff"/><stop offset="0.35" stop-color="#98caff"/><stop offset="0.7" stop-color="#46a0ff"/><stop offset="1" stop-color="#057eff"/></radialGradient><radialGradient id="w40" gradientUnits="userSpaceOnUse" cx="624.27" cy="968.09" r="370.05"><stop offset="0" stop-color="#fff"/><stop offset="0.35" stop-color="#98ccff"/><stop offset="0.7" stop-color="#45a3ff"/><stop offset="1" stop-color="#0382ff"/></radialGradient><radialGradient id="w41" gradientUnits="userSpaceOnUse" cx="624.27" cy="968.09" r="368.46"><stop offset="0" stop-color="#fff"/><stop offset="0.35" stop-color="#97cdff"/><stop offset="0.7" stop-color="#44a6ff"/><stop offset="1" stop-color="#0286ff"/></radialGradient><radialGradient id="w42" gradientUnits="userSpaceOnUse" cx="624.27" cy="968.09" r="366.95"><stop offset="0" stop-color="#fff"/><stop offset="0.35" stop-color="#97cfff"/><stop offset="0.7" stop-color="#44a8ff"/><stop offset="1" stop-color="#018aff"/></radialGradient><radialGradient id="w43" gradientUnits="userSpaceOnUse" cx="624.27" cy="968.09" r="365.54"><stop offset="0" stop-color="#fff"/><stop offset="0.35" stop-color="#97d1ff"/><stop offset="0.7" stop-color="#43abff"/><stop offset="1" stop-color="#008eff"/></radialGradient><radialGradient id="w44" gradientUnits="userSpaceOnUse" cx="624.27" cy="968.09" r="364.21"><stop offset="0" stop-color="#fff"/><stop offset="0.35" stop-color="#96d2ff"/><stop offset="0.7" stop-color="#43aeff"/><stop offset="1" stop-color="#0092ff"/></radialGradient><radialGradient id="w45" gradientUnits="userSpaceOnUse" cx="624.27" cy="968.09" r="362.98"><stop offset="0" stop-color="#fff"/><stop offset="0.35" stop-color="#96d4ff"/><stop offset="0.7" stop-color="#43b2ff"/><stop offset="1" stop-color="#0096ff"/></radialGradient><radialGradient id="w46" gradientUnits="userSpaceOnUse" cx="624.27" cy="968.09" r="361.84"><stop offset="0" stop-color="#fff"/><stop offset="0.35" stop-color="#96d6ff"/><stop offset="0.7" stop-color="#43b5ff"/><stop offset="1" stop-color="#009aff"/></radialGradient><radialGradient id="w47" gradientUnits="userSpaceOnUse" cx="624.27" cy="968.09" r="360.81"><stop offset="0" stop-color="#fff"/><stop offset="0.35" stop-color="#96d7ff"/><stop offset="0.7" stop-color="#43b8ff"/><stop offset="1" stop-color="#009eff"/></radialGradient><radialGradient id="w48" gradientUnits="userSpaceOnUse" cx="624.27" cy="968.09" r="359.87"><stop offset="0" stop-color="#fff"/><stop offset="0.35" stop-color="#96d9ff"/><stop offset="0.7" stop-color="#43bbff"/><stop offset="1" stop-color="#00a2ff"/></radialGradient><radialGradient id="w49" gradientUnits="userSpaceOnUse" cx="624.27" cy="968.09" r="359.04"><stop offset="0" stop-color="#fff"/><stop offset="0.35" stop-color="#96dbff"/><stop offset="0.7" stop-color="#43beff"/><stop offset="1" stop-color="#00a6ff"/></radialGradient><radialGradient id="w50" gradientUnits="userSpaceOnUse" cx="624.27" cy="968.09" r="358.32"><stop offset="0" stop-color="#fff"/><stop offset="0.35" stop-color="#96dcff"/><stop offset="0.7" stop-color="#43c1ff"/><stop offset="1" stop-color="#00aaff"/></radialGradient><radialGradient id="w51" gradientUnits="userSpaceOnUse" cx="624.27" cy="968.09" r="357.7"><stop offset="0" stop-color="#fff"/><stop offset="0.35" stop-color="#96deff"/><stop offset="0.7" stop-color="#43c3ff"/><stop offset="1" stop-color="#00aeff"/></radialGradient><radialGradient id="w52" gradientUnits="userSpaceOnUse" cx="624.27" cy="968.09" r="357.2"><stop offset="0" stop-color="#fff"/><stop offset="0.35" stop-color="#96dfff"/><stop offset="0.7" stop-color="#43c6ff"/><stop offset="1" stop-color="#00b2ff"/></radialGradient><radialGradient id="w53" gradientUnits="userSpaceOnUse" cx="624.27" cy="968.09" r="356.81"><stop offset="0" stop-color="#fff"/><stop offset="0.35" stop-color="#96e1ff"/><stop offset="0.7" stop-color="#43c9ff"/><stop offset="1" stop-color="#00b6ff"/></radialGradient><radialGradient id="w54" gradientUnits="userSpaceOnUse" cx="624.27" cy="968.09" r="356.53"><stop offset="0" stop-color="#fff"/><stop offset="0.35" stop-color="#96e2ff"/><stop offset="0.7" stop-color="#43ccff"/><stop offset="1" stop-color="#00b9ff"/></radialGradient><radialGradient id="w55" gradientUnits="userSpaceOnUse" cx="624.27" cy="968.09" r="356.36"><stop offset="0" stop-color="#fff"/><stop offset="0.35" stop-color="#96e4ff"/><stop offset="0.7" stop-color="#43ceff"/><stop offset="1" stop-color="#00bdff"/></radialGradient><radialGradient id="w56" gradientUnits="userSpaceOnUse" cx="624.27" cy="968.09" r="356.32"><stop offset="0" stop-color="#fff"/><stop offset="0.35" stop-color="#96e5ff"/><stop offset="0.7" stop-color="#43d1ff"/><stop offset="1" stop-color="#00c1ff"/></radialGradient><radialGradient id="w57" gradientUnits="userSpaceOnUse" cx="624.27" cy="968.09" r="356.38"><stop offset="0" stop-color="#fff"/><stop offset="0.35" stop-color="#96e7ff"/><stop offset="0.7" stop-color="#43d4ff"/><stop offset="1" stop-color="#00c4ff"/></radialGradient><radialGradient id="w58" gradientUnits="userSpaceOnUse" cx="624.27" cy="968.09" r="356.57"><stop offset="0" stop-color="#fff"/><stop offset="0.35" stop-color="#96e8ff"/><stop offset="0.7" stop-color="#43d6ff"/><stop offset="1" stop-color="#00c8ff"/></radialGradient><radialGradient id="w59" gradientUnits="userSpaceOnUse" cx="624.27" cy="968.09" r="356.87"><stop offset="0" stop-color="#fff"/><stop offset="0.35" stop-color="#96eaff"/><stop offset="0.7" stop-color="#43d9ff"/><stop offset="1" stop-color="#00cbff"/></radialGradient><radialGradient id="w60" gradientUnits="userSpaceOnUse" cx="624.27" cy="968.09" r="357.29"><stop offset="0" stop-color="#fff"/><stop offset="0.35" stop-color="#96ebff"/><stop offset="0.7" stop-color="#43dbff"/><stop offset="1" stop-color="#00ceff"/></radialGradient><radialGradient id="w61" gradientUnits="userSpaceOnUse" cx="624.27" cy="968.09" r="357.83"><stop offset="0" stop-color="#fff"/><stop offset="0.35" stop-color="#96ecff"/><stop offset="0.7" stop-color="#43ddfe"/><stop offset="1" stop-color="#00d1fe"/></radialGradient><radialGradient id="w62" gradientUnits="userSpaceOnUse" cx="624.27" cy="968.09" r="358.49"><stop offset="0" stop-color="#fff"/><stop offset="0.35" stop-color="#96edfe"/><stop offset="0.7" stop-color="#43dffe"/><stop offset="1" stop-color="#00d4fd"/></radialGradient><radialGradient id="w63" gradientUnits="userSpaceOnUse" cx="624.27" cy="968.09" r="359.27"><stop offset="0" stop-color="#fff"/><stop offset="0.35" stop-color="#96eefe"/><stop offset="0.7" stop-color="#43e1fd"/><stop offset="1" stop-color="#00d6fc"/></radialGradient><radialGradient id="w64" gradientUnits="userSpaceOnUse" cx="624.27" cy="968.09" r="360.17"><stop offset="0" stop-color="#fff"/><stop offset="0.35" stop-color="#96effd"/><stop offset="0.7" stop-color="#43e2fb"/><stop offset="1" stop-color="#00d8fa"/></radialGradient><radialGradient id="w65" gradientUnits="userSpaceOnUse" cx="624.27" cy="968.09" r="361.18"><stop offset="0" stop-color="#fff"/><stop offset="0.35" stop-color="#96f0fc"/><stop offset="0.7" stop-color="#43e4fa"/><stop offset="1" stop-color="#00daf8"/></radialGradient><radialGradient id="w66" gradientUnits="userSpaceOnUse" cx="624.27" cy="968.09" r="362.31"><stop offset="0" stop-color="#fff"/><stop offset="0.35" stop-color="#96f1fc"/><stop offset="0.7" stop-color="#43e6f9"/><stop offset="1" stop-color="#00dcf7"/></radialGradient><radialGradient id="w67" gradientUnits="userSpaceOnUse" cx="624.27" cy="968.09" r="363.55"><stop offset="0" stop-color="#fff"/><stop offset="0.35" stop-color="#96f2fb"/><stop offset="0.7" stop-color="#43e7f8"/><stop offset="1" stop-color="#00dff5"/></radialGradient><radialGradient id="w68" gradientUnits="userSpaceOnUse" cx="624.27" cy="968.09" r="364.91"><stop offset="0" stop-color="#fff"/><stop offset="0.35" stop-color="#96f3fa"/><stop offset="0.7" stop-color="#43e9f7"/><stop offset="1" stop-color="#00e1f4"/></radialGradient><radialGradient id="w69" gradientUnits="userSpaceOnUse" cx="624.27" cy="968.09" r="366.38"><stop offset="0" stop-color="#fff"/><stop offset="0.35" stop-color="#96f3fa"/><stop offset="0.7" stop-color="#43eaf5"/><stop offset="1" stop-color="#00e3f2"/></radialGradient><radialGradient id="w70" gradientUnits="userSpaceOnUse" cx="624.27" cy="968.09" r="367.96"><stop offset="0" stop-color="#fff"/><stop offset="0.35" stop-color="#96f4f9"/><stop offset="0.7" stop-color="#43ecf4"/><stop offset="1" stop-color="#00e5f1"/></radialGradient><radialGradient id="w71" gradientUnits="userSpaceOnUse" cx="624.27" cy="968.09" r="369.64"><stop offset="0" stop-color="#fff"/><stop offset="0.35" stop-color="#96f5f8"/><stop offset="0.7" stop-color="#43edf3"/><stop offset="1" stop-color="#00e7ef"/></radialGradient><radialGradient id="w72" gradientUnits="userSpaceOnUse" cx="624.27" cy="968.09" r="371.44"><stop offset="0" stop-color="#fff"/><stop offset="0.35" stop-color="#96f6f8"/><stop offset="0.7" stop-color="#43eef2"/><stop offset="1" stop-color="#00e9ed"/></radialGradient><radialGradient id="w73" gradientUnits="userSpaceOnUse" cx="624.27" cy="968.09" r="373.35"><stop offset="0" stop-color="#fff"/><stop offset="0.35" stop-color="#96f7f7"/><stop offset="0.7" stop-color="#43f0f1"/><stop offset="1" stop-color="#00ebec"/></radialGradient><radialGradient id="w74" gradientUnits="userSpaceOnUse" cx="624.27" cy="968.09" r="375.36"><stop offset="0" stop-color="#fff"/><stop offset="0.35" stop-color="#96f7f7"/><stop offset="0.7" stop-color="#43f1f0"/><stop offset="1" stop-color="#00ecea"/></radialGradient><radialGradient id="w75" gradientUnits="userSpaceOnUse" cx="624.27" cy="968.09" r="377.47"><stop offset="0" stop-color="#fff"/><stop offset="0.35" stop-color="#96f8f6"/><stop offset="0.7" stop-color="#43f3ef"/><stop offset="1" stop-color="#00eee9"/></radialGradient><radialGradient id="w76" gradientUnits="userSpaceOnUse" cx="624.27" cy="968.09" r="379.68"><stop offset="0" stop-color="#fff"/><stop offset="0.35" stop-color="#96f9f5"/><stop offset="0.7" stop-color="#43f4ee"/><stop offset="1" stop-color="#00f0e7"/></radialGradient><radialGradient id="w77" gradientUnits="userSpaceOnUse" cx="624.27" cy="968.09" r="382"><stop offset="0" stop-color="#fff"/><stop offset="0.35" stop-color="#96faf5"/><stop offset="0.7" stop-color="#43f6ec"/><stop offset="1" stop-color="#00f2e6"/></radialGradient><radialGradient id="w78" gradientUnits="userSpaceOnUse" cx="624.27" cy="968.09" r="384.4"><stop offset="0" stop-color="#fff"/><stop offset="0.35" stop-color="#96fbf4"/><stop offset="0.7" stop-color="#43f7eb"/><stop offset="1" stop-color="#00f4e4"/></radialGradient><radialGradient id="w79" gradientUnits="userSpaceOnUse" cx="624.27" cy="968.09" r="386.91"><stop offset="0" stop-color="#fff"/><stop offset="0.35" stop-color="#96fbf3"/><stop offset="0.7" stop-color="#43f8ea"/><stop offset="1" stop-color="#00f6e3"/></radialGradient><radialGradient id="w80" gradientUnits="userSpaceOnUse" cx="624.27" cy="968.09" r="389.51"><stop offset="0" stop-color="#fff"/><stop offset="0.35" stop-color="#96fcf3"/><stop offset="0.7" stop-color="#43fae9"/><stop offset="1" stop-color="#00f8e1"/></radialGradient><radialGradient id="w81" gradientUnits="userSpaceOnUse" cx="624.27" cy="968.09" r="392.2"><stop offset="0" stop-color="#fff"/><stop offset="0.35" stop-color="#96fdf2"/><stop offset="0.7" stop-color="#43fbe8"/><stop offset="1" stop-color="#00fae0"/></radialGradient><radialGradient id="w82" gradientUnits="userSpaceOnUse" cx="624.27" cy="968.09" r="394.98"><stop offset="0" stop-color="#fff"/><stop offset="0.35" stop-color="#96fef2"/><stop offset="0.7" stop-color="#43fde7"/><stop offset="1" stop-color="#00fcde"/></radialGradient><radialGradient id="w83" gradientUnits="userSpaceOnUse" cx="624.27" cy="968.09" r="397.84"><stop offset="0" stop-color="#fff"/><stop offset="0.35" stop-color="#96fef1"/><stop offset="0.7" stop-color="#43fee6"/><stop offset="1" stop-color="#00fddd"/></radialGradient><radialGradient id="w84" gradientUnits="userSpaceOnUse" cx="624.27" cy="968.09" r="400.79"><stop offset="0" stop-color="#fff"/><stop offset="0.35" stop-color="#96fff0"/><stop offset="0.7" stop-color="#43ffe4"/><stop offset="1" stop-color="#00feda"/></radialGradient><radialGradient id="w85" gradientUnits="userSpaceOnUse" cx="624.27" cy="968.09" r="403.83"><stop offset="0" stop-color="#fff"/><stop offset="0.35" stop-color="#96ffef"/><stop offset="0.7" stop-color="#43ffe2"/><stop offset="1" stop-color="#00ffd8"/></radialGradient><radialGradient id="w86" gradientUnits="userSpaceOnUse" cx="624.27" cy="968.09" r="406.94"><stop offset="0" stop-color="#fff"/><stop offset="0.35" stop-color="#96ffed"/><stop offset="0.7" stop-color="#43ffdf"/><stop offset="1" stop-color="#00ffd4"/></radialGradient><radialGradient id="w87" gradientUnits="userSpaceOnUse" cx="624.27" cy="968.09" r="410.14"><stop offset="0" stop-color="#fff"/><stop offset="0.35" stop-color="#96ffec"/><stop offset="0.7" stop-color="#43ffdd"/><stop offset="1" stop-color="#00ffd1"/></radialGradient><radialGradient id="w88" gradientUnits="userSpaceOnUse" cx="624.27" cy="968.09" r="413.41"><stop offset="0" stop-color="#fff"/><stop offset="0.35" stop-color="#96ffeb"/><stop offset="0.7" stop-color="#43ffdb"/><stop offset="1" stop-color="#00ffce"/></radialGradient><radialGradient id="w89" gradientUnits="userSpaceOnUse" cx="624.27" cy="968.09" r="416.76"><stop offset="0" stop-color="#fff"/><stop offset="0.35" stop-color="#96ffe9"/><stop offset="0.7" stop-color="#43ffd8"/><stop offset="1" stop-color="#00ffca"/></radialGradient><radialGradient id="w90" gradientUnits="userSpaceOnUse" cx="624.27" cy="968.09" r="420.17"><stop offset="0" stop-color="#fff"/><stop offset="0.35" stop-color="#96ffe8"/><stop offset="0.7" stop-color="#43ffd6"/><stop offset="1" stop-color="#00ffc7"/></radialGradient><radialGradient id="w91" gradientUnits="userSpaceOnUse" cx="624.27" cy="968.09" r="423.67"><stop offset="0" stop-color="#fff"/><stop offset="0.35" stop-color="#96ffe7"/><stop offset="0.7" stop-color="#43ffd3"/><stop offset="1" stop-color="#00ffc4"/></radialGradient><radialGradient id="w92" gradientUnits="userSpaceOnUse" cx="624.27" cy="968.09" r="427.23"><stop offset="0" stop-color="#fff"/><stop offset="0.35" stop-color="#96ffe5"/><stop offset="0.7" stop-color="#43ffd1"/><stop offset="1" stop-color="#00ffc0"/></radialGradient><radialGradient id="w93" gradientUnits="userSpaceOnUse" cx="624.27" cy="968.09" r="430.86"><stop offset="0" stop-color="#fff"/><stop offset="0.35" stop-color="#96ffe4"/><stop offset="0.7" stop-color="#43ffce"/><stop offset="1" stop-color="#00ffbd"/></radialGradient><radialGradient id="w94" gradientUnits="userSpaceOnUse" cx="624.27" cy="968.09" r="434.56"><stop offset="0" stop-color="#fff"/><stop offset="0.35" stop-color="#96ffe3"/><stop offset="0.7" stop-color="#43ffcc"/><stop offset="1" stop-color="#00ffba"/></radialGradient><radialGradient id="w95" gradientUnits="userSpaceOnUse" cx="624.27" cy="968.09" r="438.32"><stop offset="0" stop-color="#fff"/><stop offset="0.35" stop-color="#96ffe1"/><stop offset="0.7" stop-color="#43ffc9"/><stop offset="1" stop-color="#00ffb6"/></radialGradient><radialGradient id="w96" gradientUnits="userSpaceOnUse" cx="624.27" cy="968.09" r="442.14"><stop offset="0" stop-color="#fff"/><stop offset="0.35" stop-color="#96ffe0"/><stop offset="0.7" stop-color="#43ffc7"/><stop offset="1" stop-color="#00ffb3"/></radialGradient><radialGradient id="w97" gradientUnits="userSpaceOnUse" cx="624.27" cy="968.09" r="446.03"><stop offset="0" stop-color="#fff"/><stop offset="0.35" stop-color="#96ffdf"/><stop offset="0.7" stop-color="#43ffc5"/><stop offset="1" stop-color="#00ffb0"/></radialGradient><radialGradient id="w98" gradientUnits="userSpaceOnUse" cx="624.27" cy="968.09" r="449.97"><stop offset="0" stop-color="#fff"/><stop offset="0.35" stop-color="#96ffdd"/><stop offset="0.7" stop-color="#43ffc2"/><stop offset="1" stop-color="#00ffac"/></radialGradient><radialGradient id="w99" gradientUnits="userSpaceOnUse" cx="624.27" cy="968.09" r="453.97"><stop offset="0" stop-color="#fff"/><stop offset="0.35" stop-color="#96ffdc"/><stop offset="0.7" stop-color="#43ffc0"/><stop offset="1" stop-color="#00ffa9"/></radialGradient><radialGradient id="w100" gradientUnits="userSpaceOnUse" cx="624.27" cy="968.09" r="458.03"><stop offset="0" stop-color="#fff"/><stop offset="0.35" stop-color="#96ffda"/><stop offset="0.7" stop-color="#43ffbd"/><stop offset="1" stop-color="#00ffa6"/></radialGradient><radialGradient id="w101" gradientUnits="userSpaceOnUse" cx="624.27" cy="968.09" r="462.14"><stop offset="0" stop-color="#fff"/><stop offset="0.35" stop-color="#96ffd9"/><stop offset="0.7" stop-color="#43ffbb"/><stop offset="1" stop-color="#00ffa2"/></radialGradient><radialGradient id="w102" gradientUnits="userSpaceOnUse" cx="624.27" cy="968.09" r="466.3"><stop offset="0" stop-color="#fff"/><stop offset="0.35" stop-color="#96ffd8"/><stop offset="0.7" stop-color="#43ffb8"/><stop offset="1" stop-color="#00ff9f"/></radialGradient><radialGradient id="w103" gradientUnits="userSpaceOnUse" cx="624.27" cy="968.09" r="470.51"><stop offset="0" stop-color="#fff"/><stop offset="0.35" stop-color="#96ffd6"/><stop offset="0.7" stop-color="#43ffb6"/><stop offset="1" stop-color="#00ff9c"/></radialGradient><radialGradient id="w104" gradientUnits="userSpaceOnUse" cx="624.27" cy="968.09" r="474.77"><stop offset="0" stop-color="#fff"/><stop offset="0.35" stop-color="#96ffd5"/><stop offset="0.7" stop-color="#43ffb3"/><stop offset="1" stop-color="#00ff98"/></radialGradient><radialGradient id="w105" gradientUnits="userSpaceOnUse" cx="624.27" cy="968.09" r="479.08"><stop offset="0" stop-color="#fff"/><stop offset="0.35" stop-color="#96ffd4"/><stop offset="0.7" stop-color="#43ffb1"/><stop offset="1" stop-color="#00ff95"/></radialGradient><radialGradient id="w106" gradientUnits="userSpaceOnUse" cx="624.27" cy="968.09" r="483.44"><stop offset="0" stop-color="#fff"/><stop offset="0.35" stop-color="#96ffd2"/><stop offset="0.7" stop-color="#43ffae"/><stop offset="1" stop-color="#00ff92"/></radialGradient><radialGradient id="w107" gradientUnits="userSpaceOnUse" cx="624.27" cy="968.09" r="487.83"><stop offset="0" stop-color="#fff"/><stop offset="0.35" stop-color="#96ffd1"/><stop offset="0.7" stop-color="#43ffac"/><stop offset="1" stop-color="#00ff8e"/></radialGradient><radialGradient id="w108" gradientUnits="userSpaceOnUse" cx="624.27" cy="968.09" r="492.27"><stop offset="0" stop-color="#fff"/><stop offset="0.35" stop-color="#96ffd0"/><stop offset="0.7" stop-color="#43ffaa"/><stop offset="1" stop-color="#00ff8b"/></radialGradient><radialGradient id="w109" gradientUnits="userSpaceOnUse" cx="624.27" cy="968.09" r="496.75"><stop offset="0" stop-color="#fff"/><stop offset="0.35" stop-color="#96ffce"/><stop offset="0.7" stop-color="#43ffa8"/><stop offset="1" stop-color="#00ff89"/></radialGradient><radialGradient id="w110" gradientUnits="userSpaceOnUse" cx="624.27" cy="968.09" r="501.27"><stop offset="0" stop-color="#fff"/><stop offset="0.35" stop-color="#96ffcd"/><stop offset="0.7" stop-color="#43ffa6"/><stop offset="1" stop-color="#00ff86"/></radialGradient><radialGradient id="w111" gradientUnits="userSpaceOnUse" cx="624.27" cy="968.09" r="505.83"><stop offset="0" stop-color="#fff"/><stop offset="0.35" stop-color="#96ffcc"/><stop offset="0.7" stop-color="#43ffa4"/><stop offset="1" stop-color="#00ff83"/></radialGradient><radialGradient id="w112" gradientUnits="userSpaceOnUse" cx="624.27" cy="968.09" r="510.42"><stop offset="0" stop-color="#fff"/><stop offset="0.35" stop-color="#96ffcb"/><stop offset="0.7" stop-color="#43ffa2"/><stop offset="1" stop-color="#00ff81"/></radialGradient><radialGradient id="w113" gradientUnits="userSpaceOnUse" cx="624.27" cy="968.09" r="515.05"><stop offset="0" stop-color="#fff"/><stop offset="0.35" stop-color="#96ffca"/><stop offset="0.7" stop-color="#43ffa0"/><stop offset="1" stop-color="#00ff7e"/></radialGradient><radialGradient id="w114" gradientUnits="userSpaceOnUse" cx="624.27" cy="968.09" r="519.71"><stop offset="0" stop-color="#fff"/><stop offset="0.35" stop-color="#96ffc9"/><stop offset="0.7" stop-color="#43ff9e"/><stop offset="1" stop-color="#00ff7c"/></radialGradient><radialGradient id="w115" gradientUnits="userSpaceOnUse" cx="624.27" cy="968.09" r="524.4"><stop offset="0" stop-color="#fff"/><stop offset="0.35" stop-color="#96ffc8"/><stop offset="0.7" stop-color="#43ff9c"/><stop offset="1" stop-color="#00ff79"/></radialGradient><radialGradient id="w116" gradientUnits="userSpaceOnUse" cx="624.27" cy="968.09" r="529.12"><stop offset="0" stop-color="#fff"/><stop offset="0.35" stop-color="#96ffc7"/><stop offset="0.7" stop-color="#43ff9a"/><stop offset="1" stop-color="#00ff76"/></radialGradient><radialGradient id="w117" gradientUnits="userSpaceOnUse" cx="624.27" cy="968.09" r="533.87"><stop offset="0" stop-color="#fff"/><stop offset="0.35" stop-color="#96ffc6"/><stop offset="0.7" stop-color="#43ff98"/><stop offset="1" stop-color="#00ff74"/></radialGradient><radialGradient id="w118" gradientUnits="userSpaceOnUse" cx="624.27" cy="968.09" r="538.64"><stop offset="0" stop-color="#fff"/><stop offset="0.35" stop-color="#96ffc5"/><stop offset="0.7" stop-color="#43ff96"/><stop offset="1" stop-color="#00ff71"/></radialGradient><radialGradient id="w119" gradientUnits="userSpaceOnUse" cx="624.27" cy="968.09" r="543.45"><stop offset="0" stop-color="#fff"/><stop offset="0.35" stop-color="#96ffc4"/><stop offset="0.7" stop-color="#43ff94"/><stop offset="1" stop-color="#00ff6e"/></radialGradient><radialGradient id="w120" gradientUnits="userSpaceOnUse" cx="624.27" cy="968.09" r="548.27"><stop offset="0" stop-color="#fff"/><stop offset="0.35" stop-color="#96ffc3"/><stop offset="0.7" stop-color="#43ff92"/><stop offset="1" stop-color="#00ff6b"/></radialGradient><radialGradient id="w121" gradientUnits="userSpaceOnUse" cx="624.27" cy="968.09" r="553.12"><stop offset="0" stop-color="#fff"/><stop offset="0.35" stop-color="#96ffc1"/><stop offset="0.7" stop-color="#43ff90"/><stop offset="1" stop-color="#00ff69"/></radialGradient><radialGradient id="w122" gradientUnits="userSpaceOnUse" cx="624.27" cy="968.09" r="557.99"><stop offset="0" stop-color="#fff"/><stop offset="0.35" stop-color="#96ffc0"/><stop offset="0.7" stop-color="#43ff8e"/><stop offset="1" stop-color="#00ff66"/></radialGradient><radialGradient id="w123" gradientUnits="userSpaceOnUse" cx="624.27" cy="968.09" r="562.88"><stop offset="0" stop-color="#fff"/><stop offset="0.35" stop-color="#96ffbf"/><stop offset="0.7" stop-color="#43ff8c"/><stop offset="1" stop-color="#00ff63"/></radialGradient><radialGradient id="w124" gradientUnits="userSpaceOnUse" cx="624.27" cy="968.09" r="567.78"><stop offset="0" stop-color="#fff"/><stop offset="0.35" stop-color="#96ffbe"/><stop offset="0.7" stop-color="#43ff8a"/><stop offset="1" stop-color="#00ff60"/></radialGradient><radialGradient id="w125" gradientUnits="userSpaceOnUse" cx="624.27" cy="968.09" r="572.7"><stop offset="0" stop-color="#fff"/><stop offset="0.35" stop-color="#96ffbd"/><stop offset="0.7" stop-color="#43ff88"/><stop offset="1" stop-color="#00ff5e"/></radialGradient><radialGradient id="w126" gradientUnits="userSpaceOnUse" cx="624.27" cy="968.09" r="577.64"><stop offset="0" stop-color="#fff"/><stop offset="0.35" stop-color="#96ffbc"/><stop offset="0.7" stop-color="#43ff86"/><stop offset="1" stop-color="#00ff5b"/></radialGradient><radialGradient id="w127" gradientUnits="userSpaceOnUse" cx="624.27" cy="968.09" r="582.59"><stop offset="0" stop-color="#fff"/><stop offset="0.35" stop-color="#96ffba"/><stop offset="0.7" stop-color="#43ff84"/><stop offset="1" stop-color="#00ff58"/></radialGradient><radialGradient id="w128" gradientUnits="userSpaceOnUse" cx="624.27" cy="968.09" r="587.55"><stop offset="0" stop-color="#fff"/><stop offset="0.35" stop-color="#96ffb9"/><stop offset="0.7" stop-color="#43ff82"/><stop offset="1" stop-color="#00ff55"/></radialGradient><radialGradient id="w129" gradientUnits="userSpaceOnUse" cx="624.27" cy="968.09" r="592.52"><stop offset="0" stop-color="#fff"/><stop offset="0.35" stop-color="#96ffb8"/><stop offset="0.7" stop-color="#43ff7f"/><stop offset="1" stop-color="#00ff52"/></radialGradient><radialGradient id="w130" gradientUnits="userSpaceOnUse" cx="624.27" cy="968.09" r="597.49"><stop offset="0" stop-color="#fff"/><stop offset="0.35" stop-color="#96ffb7"/><stop offset="0.7" stop-color="#43ff7d"/><stop offset="1" stop-color="#00ff4f"/></radialGradient><radialGradient id="w131" gradientUnits="userSpaceOnUse" cx="624.27" cy="968.09" r="602.48"><stop offset="0" stop-color="#fff"/><stop offset="0.35" stop-color="#96ffb6"/><stop offset="0.7" stop-color="#43ff7c"/><stop offset="1" stop-color="#00ff4d"/></radialGradient><radialGradient id="w132" gradientUnits="userSpaceOnUse" cx="624.27" cy="968.09" r="607.47"><stop offset="0" stop-color="#fff"/><stop offset="0.35" stop-color="#96ffb5"/><stop offset="0.7" stop-color="#43ff7a"/><stop offset="1" stop-color="#00ff4a"/></radialGradient><radialGradient id="w133" gradientUnits="userSpaceOnUse" cx="624.27" cy="968.09" r="612.46"><stop offset="0" stop-color="#fff"/><stop offset="0.35" stop-color="#96ffb4"/><stop offset="0.7" stop-color="#43ff78"/><stop offset="1" stop-color="#00ff48"/></radialGradient><radialGradient id="w134" gradientUnits="userSpaceOnUse" cx="624.27" cy="968.09" r="617.46"><stop offset="0" stop-color="#fff"/><stop offset="0.35" stop-color="#96ffb3"/><stop offset="0.7" stop-color="#43ff76"/><stop offset="1" stop-color="#00ff45"/></radialGradient><radialGradient id="w135" gradientUnits="userSpaceOnUse" cx="624.27" cy="968.09" r="622.45"><stop offset="0" stop-color="#fff"/><stop offset="0.35" stop-color="#96ffb2"/><stop offset="0.7" stop-color="#43ff74"/><stop offset="1" stop-color="#00ff43"/></radialGradient><radialGradient id="w136" gradientUnits="userSpaceOnUse" cx="624.27" cy="968.09" r="627.45"><stop offset="0" stop-color="#fff"/><stop offset="0.35" stop-color="#96ffb1"/><stop offset="0.7" stop-color="#43ff72"/><stop offset="1" stop-color="#00ff40"/></radialGradient><radialGradient id="w137" gradientUnits="userSpaceOnUse" cx="624.27" cy="968.09" r="632.44"><stop offset="0" stop-color="#fff"/><stop offset="0.35" stop-color="#96ffb0"/><stop offset="0.7" stop-color="#43ff70"/><stop offset="1" stop-color="#00ff3e"/></radialGradient><radialGradient id="w138" gradientUnits="userSpaceOnUse" cx="624.27" cy="968.09" r="637.42"><stop offset="0" stop-color="#fff"/><stop offset="0.35" stop-color="#96ffaf"/><stop offset="0.7" stop-color="#43ff6e"/><stop offset="1" stop-color="#00ff3b"/></radialGradient><radialGradient id="w139" gradientUnits="userSpaceOnUse" cx="624.27" cy="968.09" r="642.39"><stop offset="0" stop-color="#fff"/><stop offset="0.35" stop-color="#96ffad"/><stop offset="0.7" stop-color="#43ff6c"/><stop offset="1" stop-color="#00ff38"/></radialGradient><radialGradient id="w140" gradientUnits="userSpaceOnUse" cx="624.27" cy="968.09" r="647.35"><stop offset="0" stop-color="#fff"/><stop offset="0.35" stop-color="#96ffac"/><stop offset="0.7" stop-color="#43ff6a"/><stop offset="1" stop-color="#00ff35"/></radialGradient><radialGradient id="w141" gradientUnits="userSpaceOnUse" cx="624.27" cy="968.09" r="652.29"><stop offset="0" stop-color="#fff"/><stop offset="0.35" stop-color="#96ffab"/><stop offset="0.7" stop-color="#43ff68"/><stop offset="1" stop-color="#00ff33"/></radialGradient><radialGradient id="w142" gradientUnits="userSpaceOnUse" cx="624.27" cy="968.09" r="657.22"><stop offset="0" stop-color="#fff"/><stop offset="0.35" stop-color="#96ffaa"/><stop offset="0.7" stop-color="#43ff66"/><stop offset="1" stop-color="#00ff30"/></radialGradient><radialGradient id="w143" gradientUnits="userSpaceOnUse" cx="624.27" cy="968.09" r="662.12"><stop offset="0" stop-color="#fff"/><stop offset="0.35" stop-color="#96ffa9"/><stop offset="0.7" stop-color="#43ff64"/><stop offset="1" stop-color="#00ff2d"/></radialGradient><radialGradient id="w144" gradientUnits="userSpaceOnUse" cx="624.27" cy="968.09" r="667.01"><stop offset="0" stop-color="#fff"/><stop offset="0.35" stop-color="#96ffa8"/><stop offset="0.7" stop-color="#43ff62"/><stop offset="1" stop-color="#00ff2a"/></radialGradient><radialGradient id="w145" gradientUnits="userSpaceOnUse" cx="624.27" cy="968.09" r="671.86"><stop offset="0" stop-color="#fff"/><stop offset="0.35" stop-color="#96ffa6"/><stop offset="0.7" stop-color="#43ff60"/><stop offset="1" stop-color="#00ff27"/></radialGradient><radialGradient id="w146" gradientUnits="userSpaceOnUse" cx="624.27" cy="968.09" r="676.68"><stop offset="0" stop-color="#fff"/><stop offset="0.35" stop-color="#96ffa5"/><stop offset="0.7" stop-color="#43ff5d"/><stop offset="1" stop-color="#00ff24"/></radialGradient><radialGradient id="w147" gradientUnits="userSpaceOnUse" cx="624.27" cy="968.09" r="681.45"><stop offset="0" stop-color="#fff"/><stop offset="0.35" stop-color="#96ffa4"/><stop offset="0.7" stop-color="#43ff5b"/><stop offset="1" stop-color="#00ff21"/></radialGradient><radialGradient id="w148" gradientUnits="userSpaceOnUse" cx="624.27" cy="968.09" r="686.18"><stop offset="0" stop-color="#fff"/><stop offset="0.35" stop-color="#96ffa3"/><stop offset="0.7" stop-color="#43ff5a"/><stop offset="1" stop-color="#00ff1f"/></radialGradient><radialGradient id="w149" gradientUnits="userSpaceOnUse" cx="624.27" cy="968.09" r="690.86"><stop offset="0" stop-color="#fff"/><stop offset="0.35" stop-color="#96ffa2"/><stop offset="0.7" stop-color="#43ff58"/><stop offset="1" stop-color="#00ff1d"/></radialGradient><radialGradient id="w150" gradientUnits="userSpaceOnUse" cx="624.27" cy="968.09" r="695.48"><stop offset="0" stop-color="#fff"/><stop offset="0.35" stop-color="#96ffa2"/><stop offset="0.7" stop-color="#43ff57"/><stop offset="1" stop-color="#00ff1c"/></radialGradient><radialGradient id="w151" gradientUnits="userSpaceOnUse" cx="624.27" cy="968.09" r="700.01"><stop offset="0" stop-color="#fff"/><stop offset="0.35" stop-color="#96ffa1"/><stop offset="0.7" stop-color="#43ff57"/><stop offset="1" stop-color="#00ff1b"/></radialGradient><radialGradient id="w152" gradientUnits="userSpaceOnUse" cx="624.27" cy="968.09" r="704.48"><stop offset="0" stop-color="#fff"/><stop offset="0.35" stop-color="#96ffa1"/><stop offset="0.7" stop-color="#43ff56"/><stop offset="1" stop-color="#00ff1a"/></radialGradient><radialGradient id="w153" gradientUnits="userSpaceOnUse" cx="624.27" cy="968.09" r="708.87"><stop offset="0" stop-color="#fff"/><stop offset="0.35" stop-color="#96ffa1"/><stop offset="0.7" stop-color="#43ff55"/><stop offset="1" stop-color="#00ff19"/></radialGradient><radialGradient id="w154" gradientUnits="userSpaceOnUse" cx="624.27" cy="968.09" r="713.13"><stop offset="0" stop-color="#fff"/><stop offset="0.35" stop-color="#96ffa0"/><stop offset="0.7" stop-color="#43ff54"/><stop offset="1" stop-color="#00ff18"/></radialGradient><radialGradient id="w155" gradientUnits="userSpaceOnUse" cx="624.27" cy="968.09" r="717.28"><stop offset="0" stop-color="#fff"/><stop offset="0.35" stop-color="#96ffa0"/><stop offset="0.7" stop-color="#43ff53"/><stop offset="1" stop-color="#00ff16"/></radialGradient><radialGradient id="w156" gradientUnits="userSpaceOnUse" cx="624.27" cy="968.09" r="721.31"><stop offset="0" stop-color="#fff"/><stop offset="0.35" stop-color="#96ff9f"/><stop offset="0.7" stop-color="#43ff53"/><stop offset="1" stop-color="#00ff15"/></radialGradient><radialGradient id="w157" gradientUnits="userSpaceOnUse" cx="624.27" cy="968.09" r="725.18"><stop offset="0" stop-color="#fff"/><stop offset="0.35" stop-color="#96ff9f"/><stop offset="0.7" stop-color="#43ff52"/><stop offset="1" stop-color="#00ff14"/></radialGradient><radialGradient id="w158" gradientUnits="userSpaceOnUse" cx="624.27" cy="968.09" r="728.87"><stop offset="0" stop-color="#fff"/><stop offset="0.35" stop-color="#96ff9e"/><stop offset="0.7" stop-color="#43ff51"/><stop offset="1" stop-color="#00ff13"/></radialGradient><radialGradient id="w159" gradientUnits="userSpaceOnUse" cx="624.27" cy="968.09" r="732.31"><stop offset="0" stop-color="#fff"/><stop offset="0.35" stop-color="#96ff9e"/><stop offset="0.7" stop-color="#43ff50"/><stop offset="1" stop-color="#00ff11"/></radialGradient><radialGradient id="w160" gradientUnits="userSpaceOnUse" cx="624.27" cy="968.09" r="735.47"><stop offset="0" stop-color="#fff"/><stop offset="0.35" stop-color="#96ff9d"/><stop offset="0.7" stop-color="#43ff4f"/><stop offset="1" stop-color="#00ff10"/></radialGradient><radialGradient id="w161" gradientUnits="userSpaceOnUse" cx="624.27" cy="968.09" r="738.3"><stop offset="0" stop-color="#fff"/><stop offset="0.35" stop-color="#96ff9c"/><stop offset="0.7" stop-color="#43ff4d"/><stop offset="1" stop-color="#00ff0e"/></radialGradient><radialGradient id="w162" gradientUnits="userSpaceOnUse" cx="624.27" cy="968.09" r="740.73"><stop offset="0" stop-color="#fff"/><stop offset="0.35" stop-color="#96ff9c"/><stop offset="0.7" stop-color="#43ff4c"/><stop offset="1" stop-color="#00ff0d"/></radialGradient><radialGradient id="w163" gradientUnits="userSpaceOnUse" cx="624.27" cy="968.09" r="742.65"><stop offset="0" stop-color="#fff"/><stop offset="0.35" stop-color="#96ff9b"/><stop offset="0.7" stop-color="#43ff4b"/><stop offset="1" stop-color="#00ff0b"/></radialGradient><radialGradient id="w164" gradientUnits="userSpaceOnUse" cx="624.27" cy="968.09" r="744"><stop offset="0" stop-color="#fff"/><stop offset="0.35" stop-color="#96ff9a"/><stop offset="0.7" stop-color="#43ff4a"/><stop offset="1" stop-color="#00ff09"/></radialGradient><radialGradient id="w165" gradientUnits="userSpaceOnUse" cx="624.27" cy="968.09" r="744.74"><stop offset="0" stop-color="#fff"/><stop offset="0.35" stop-color="#96ff9a"/><stop offset="0.7" stop-color="#43ff48"/><stop offset="1" stop-color="#00ff07"/></radialGradient><radialGradient id="w166" gradientUnits="userSpaceOnUse" cx="624.27" cy="968.09" r="744.81"><stop offset="0" stop-color="#fff"/><stop offset="0.35" stop-color="#96ff99"/><stop offset="0.7" stop-color="#43ff47"/><stop offset="1" stop-color="#00ff06"/></radialGradient><radialGradient id="w167" gradientUnits="userSpaceOnUse" cx="624.27" cy="968.09" r="744.14"><stop offset="0" stop-color="#fff"/><stop offset="0.35" stop-color="#96ff98"/><stop offset="0.7" stop-color="#43ff45"/><stop offset="1" stop-color="#00ff04"/></radialGradient><radialGradient id="w168" gradientUnits="userSpaceOnUse" cx="624.27" cy="968.09" r="742.72"><stop offset="0" stop-color="#fff"/><stop offset="0.35" stop-color="#97ff97"/><stop offset="0.7" stop-color="#43ff44"/><stop offset="1" stop-color="#00ff02"/></radialGradient><radialGradient id="w169" gradientUnits="userSpaceOnUse" cx="624.27" cy="968.09" r="740.65"><stop offset="0" stop-color="#fff"/><stop offset="0.35" stop-color="#97ff97"/><stop offset="0.7" stop-color="#43ff43"/><stop offset="1" stop-color="#01ff01"/></radialGradient><radialGradient id="w170" gradientUnits="userSpaceOnUse" cx="624.27" cy="968.09" r="737.93"><stop offset="0" stop-color="#fff"/><stop offset="0.35" stop-color="#97ff96"/><stop offset="0.7" stop-color="#44ff43"/><stop offset="1" stop-color="#02ff00"/></radialGradient><radialGradient id="w171" gradientUnits="userSpaceOnUse" cx="624.27" cy="968.09" r="734.67"><stop offset="0" stop-color="#fff"/><stop offset="0.35" stop-color="#98ff96"/><stop offset="0.7" stop-color="#45ff43"/><stop offset="1" stop-color="#03ff00"/></radialGradient><radialGradient id="w172" gradientUnits="userSpaceOnUse" cx="624.27" cy="968.09" r="730.99"><stop offset="0" stop-color="#fff"/><stop offset="0.35" stop-color="#98ff96"/><stop offset="0.7" stop-color="#46ff43"/><stop offset="1" stop-color="#04ff00"/></radialGradient><radialGradient id="w173" gradientUnits="userSpaceOnUse" cx="624.27" cy="968.09" r="726.94"><stop offset="0" stop-color="#fff"/><stop offset="0.35" stop-color="#99ff96"/><stop offset="0.7" stop-color="#47ff43"/><stop offset="1" stop-color="#06ff00"/></radialGradient><radialGradient id="w174" gradientUnits="userSpaceOnUse" cx="624.27" cy="968.09" r="722.6"><stop offset="0" stop-color="#fff"/><stop offset="0.35" stop-color="#99ff96"/><stop offset="0.7" stop-color="#48ff43"/><stop offset="1" stop-color="#07ff00"/></radialGradient><radialGradient id="w175" gradientUnits="userSpaceOnUse" cx="624.27" cy="968.09" r="718.06"><stop offset="0" stop-color="#fff"/><stop offset="0.35" stop-color="#9aff96"/><stop offset="0.7" stop-color="#49ff43"/><stop offset="1" stop-color="#08ff00"/></radialGradient><radialGradient id="w176" gradientUnits="userSpaceOnUse" cx="624.27" cy="968.09" r="713.37"><stop offset="0" stop-color="#fff"/><stop offset="0.35" stop-color="#9aff96"/><stop offset="0.7" stop-color="#4aff43"/><stop offset="1" stop-color="#09ff00"/></radialGradient><radialGradient id="w177" gradientUnits="userSpaceOnUse" cx="624.27" cy="968.09" r="708.54"><stop offset="0" stop-color="#fff"/><stop offset="0.35" stop-color="#9bff96"/><stop offset="0.7" stop-color="#4bff43"/><stop offset="1" stop-color="#0bff00"/></radialGradient><radialGradient id="w178" gradientUnits="userSpaceOnUse" cx="624.27" cy="968.09" r="703.61"><stop offset="0" stop-color="#fff"/><stop offset="0.35" stop-color="#9bff96"/><stop offset="0.7" stop-color="#4cff43"/><stop offset="1" stop-color="#0cff00"/></radialGradient><radialGradient id="w179" gradientUnits="userSpaceOnUse" cx="624.27" cy="968.09" r="698.61"><stop offset="0" stop-color="#fff"/><stop offset="0.35" stop-color="#9cff96"/><stop offset="0.7" stop-color="#4cff43"/><stop offset="1" stop-color="#0dff00"/></radialGradient><radialGradient id="w180" gradientUnits="userSpaceOnUse" cx="624.27" cy="968.09" r="693.55"><stop offset="0" stop-color="#fff"/><stop offset="0.35" stop-color="#9cff96"/><stop offset="0.7" stop-color="#4dff43"/><stop offset="1" stop-color="#0eff00"/></radialGradient><radialGradient id="w181" gradientUnits="userSpaceOnUse" cx="624.27" cy="968.09" r="688.44"><stop offset="0" stop-color="#fff"/><stop offset="0.35" stop-color="#9dff96"/><stop offset="0.7" stop-color="#4eff43"/><stop offset="1" stop-color="#0fff00"/></radialGradient><radialGradient id="w182" gradientUnits="userSpaceOnUse" cx="624.27" cy="968.09" r="683.28"><stop offset="0" stop-color="#fff"/><stop offset="0.35" stop-color="#9dff96"/><stop offset="0.7" stop-color="#4fff43"/><stop offset="1" stop-color="#10ff00"/></radialGradient><radialGradient id="w183" gradientUnits="userSpaceOnUse" cx="624.27" cy="968.09" r="678.09"><stop offset="0" stop-color="#fff"/><stop offset="0.35" stop-color="#9eff96"/><stop offset="0.7" stop-color="#50ff43"/><stop offset="1" stop-color="#12ff00"/></radialGradient><radialGradient id="w184" gradientUnits="userSpaceOnUse" cx="624.27" cy="968.09" r="672.87"><stop offset="0" stop-color="#fff"/><stop offset="0.35" stop-color="#9eff96"/><stop offset="0.7" stop-color="#51ff43"/><stop offset="1" stop-color="#13ff00"/></radialGradient><radialGradient id="w185" gradientUnits="userSpaceOnUse" cx="624.27" cy="968.09" r="667.63"><stop offset="0" stop-color="#fff"/><stop offset="0.35" stop-color="#9fff96"/><stop offset="0.7" stop-color="#52ff43"/><stop offset="1" stop-color="#15ff00"/></radialGradient><radialGradient id="w186" gradientUnits="userSpaceOnUse" cx="624.27" cy="968.09" r="662.37"><stop offset="0" stop-color="#fff"/><stop offset="0.35" stop-color="#a0ff96"/><stop offset="0.7" stop-color="#54ff43"/><stop offset="1" stop-color="#17ff00"/></radialGradient><radialGradient id="w187" gradientUnits="userSpaceOnUse" cx="624.27" cy="968.09" r="657.11"><stop offset="0" stop-color="#fff"/><stop offset="0.35" stop-color="#a1ff96"/><stop offset="0.7" stop-color="#56ff43"/><stop offset="1" stop-color="#1bff00"/></radialGradient><radialGradient id="w188" gradientUnits="userSpaceOnUse" cx="624.27" cy="968.09" r="651.84"><stop offset="0" stop-color="#fff"/><stop offset="0.35" stop-color="#a3ff96"/><stop offset="0.7" stop-color="#59ff43"/><stop offset="1" stop-color="#1eff00"/></radialGradient><radialGradient id="w189" gradientUnits="userSpaceOnUse" cx="624.27" cy="968.09" r="646.55"><stop offset="0" stop-color="#fff"/><stop offset="0.35" stop-color="#a4ff96"/><stop offset="0.7" stop-color="#5cff43"/><stop offset="1" stop-color="#22ff00"/></radialGradient><radialGradient id="w190" gradientUnits="userSpaceOnUse" cx="624.27" cy="968.09" r="641.25"><stop offset="0" stop-color="#fff"/><stop offset="0.35" stop-color="#a6ff96"/><stop offset="0.7" stop-color="#5eff43"/><stop offset="1" stop-color="#25ff00"/></radialGradient><radialGradient id="w191" gradientUnits="userSpaceOnUse" cx="624.27" cy="968.09" r="635.94"><stop offset="0" stop-color="#fff"/><stop offset="0.35" stop-color="#a7ff96"/><stop offset="0.7" stop-color="#61ff43"/><stop offset="1" stop-color="#29ff00"/></radialGradient><radialGradient id="w192" gradientUnits="userSpaceOnUse" cx="624.27" cy="968.09" r="630.63"><stop offset="0" stop-color="#fff"/><stop offset="0.35" stop-color="#a9ff96"/><stop offset="0.7" stop-color="#63ff43"/><stop offset="1" stop-color="#2cff00"/></radialGradient><radialGradient id="w193" gradientUnits="userSpaceOnUse" cx="624.27" cy="968.09" r="625.3"><stop offset="0" stop-color="#fff"/><stop offset="0.35" stop-color="#aaff96"/><stop offset="0.7" stop-color="#66ff43"/><stop offset="1" stop-color="#30ff00"/></radialGradient><radialGradient id="w194" gradientUnits="userSpaceOnUse" cx="624.27" cy="968.09" r="619.97"><stop offset="0" stop-color="#fff"/><stop offset="0.35" stop-color="#abff96"/><stop offset="0.7" stop-color="#69ff43"/><stop offset="1" stop-color="#33ff00"/></radialGradient><radialGradient id="w195" gradientUnits="userSpaceOnUse" cx="624.27" cy="968.09" r="614.64"><stop offset="0" stop-color="#fff"/><stop offset="0.35" stop-color="#adff96"/><stop offset="0.7" stop-color="#6bff43"/><stop offset="1" stop-color="#37ff00"/></radialGradient><radialGradient id="w196" gradientUnits="userSpaceOnUse" cx="624.27" cy="968.09" r="609.29"><stop offset="0" stop-color="#fff"/><stop offset="0.35" stop-color="#aeff96"/><stop offset="0.7" stop-color="#6eff43"/><stop offset="1" stop-color="#3aff00"/></radialGradient><radialGradient id="w197" gradientUnits="userSpaceOnUse" cx="624.27" cy="968.09" r="603.95"><stop offset="0" stop-color="#fff"/><stop offset="0.35" stop-color="#b0ff96"/><stop offset="0.7" stop-color="#70ff43"/><stop offset="1" stop-color="#3eff00"/></radialGradient><radialGradient id="w198" gradientUnits="userSpaceOnUse" cx="624.27" cy="968.09" r="598.6"><stop offset="0" stop-color="#fff"/><stop offset="0.35" stop-color="#b1ff96"/><stop offset="0.7" stop-color="#73ff43"/><stop offset="1" stop-color="#41ff00"/></radialGradient><radialGradient id="w199" gradientUnits="userSpaceOnUse" cx="624.27" cy="968.09" r="593.26"><stop offset="0" stop-color="#fff"/><stop offset="0.35" stop-color="#b3ff96"/><stop offset="0.7" stop-color="#75ff43"/><stop offset="1" stop-color="#45ff00"/></radialGradient><radialGradient id="w200" gradientUnits="userSpaceOnUse" cx="624.27" cy="968.09" r="587.92"><stop offset="0" stop-color="#fff"/><stop offset="0.35" stop-color="#b4ff96"/><stop offset="0.7" stop-color="#78ff43"/><stop offset="1" stop-color="#48ff00"/></radialGradient><radialGradient id="w201" gradientUnits="userSpaceOnUse" cx="624.27" cy="968.09" r="582.58"><stop offset="0" stop-color="#fff"/><stop offset="0.35" stop-color="#b5ff96"/><stop offset="0.7" stop-color="#7bff43"/><stop offset="1" stop-color="#4bff00"/></radialGradient><radialGradient id="w202" gradientUnits="userSpaceOnUse" cx="624.27" cy="968.09" r="577.25"><stop offset="0" stop-color="#fff"/><stop offset="0.35" stop-color="#b7ff96"/><stop offset="0.7" stop-color="#7dff43"/><stop offset="1" stop-color="#4fff00"/></radialGradient><radialGradient id="w203" gradientUnits="userSpaceOnUse" cx="624.27" cy="968.09" r="571.93"><stop offset="0" stop-color="#fff"/><stop offset="0.35" stop-color="#b8ff96"/><stop offset="0.7" stop-color="#80ff43"/><stop offset="1" stop-color="#53ff00"/></radialGradient><radialGradient id="w204" gradientUnits="userSpaceOnUse" cx="624.27" cy="968.09" r="566.61"><stop offset="0" stop-color="#fff"/><stop offset="0.35" stop-color="#baff96"/><stop offset="0.7" stop-color="#83ff43"/><stop offset="1" stop-color="#57ff00"/></radialGradient><radialGradient id="w205" gradientUnits="userSpaceOnUse" cx="624.27" cy="968.09" r="561.31"><stop offset="0" stop-color="#fff"/><stop offset="0.35" stop-color="#bcff96"/><stop offset="0.7" stop-color="#86ff43"/><stop offset="1" stop-color="#5bff00"/></radialGradient><radialGradient id="w206" gradientUnits="userSpaceOnUse" cx="624.27" cy="968.09" r="556.02"><stop offset="0" stop-color="#fff"/><stop offset="0.35" stop-color="#bdff96"/><stop offset="0.7" stop-color="#89ff43"/><stop offset="1" stop-color="#5fff00"/></radialGradient><radialGradient id="w207" gradientUnits="userSpaceOnUse" cx="624.27" cy="968.09" r="550.75"><stop offset="0" stop-color="#fff"/><stop offset="0.35" stop-color="#bfff96"/><stop offset="0.7" stop-color="#8bff43"/><stop offset="1" stop-color="#62ff00"/></radialGradient><radialGradient id="w208" gradientUnits="userSpaceOnUse" cx="624.27" cy="968.09" r="545.49"><stop offset="0" stop-color="#fff"/><stop offset="0.35" stop-color="#c0ff96"/><stop offset="0.7" stop-color="#8eff43"/><stop offset="1" stop-color="#66ff00"/></radialGradient><radialGradient id="w209" gradientUnits="userSpaceOnUse" cx="624.27" cy="968.09" r="540.25"><stop offset="0" stop-color="#fff"/><stop offset="0.35" stop-color="#c2ff96"/><stop offset="0.7" stop-color="#91ff43"/><stop offset="1" stop-color="#6aff00"/></radialGradient><radialGradient id="w210" gradientUnits="userSpaceOnUse" cx="624.27" cy="968.09" r="535.03"><stop offset="0" stop-color="#fff"/><stop offset="0.35" stop-color="#c4ff96"/><stop offset="0.7" stop-color="#94ff43"/><stop offset="1" stop-color="#6eff00"/></radialGradient><radialGradient id="w211" gradientUnits="userSpaceOnUse" cx="624.27" cy="968.09" r="529.83"><stop offset="0" stop-color="#fff"/><stop offset="0.35" stop-color="#c5ff96"/><stop offset="0.7" stop-color="#97ff43"/><stop offset="1" stop-color="#72ff00"/></radialGradient><radialGradient id="w212" gradientUnits="userSpaceOnUse" cx="624.27" cy="968.09" r="524.65"><stop offset="0" stop-color="#fff"/><stop offset="0.35" stop-color="#c7ff96"/><stop offset="0.7" stop-color="#9aff43"/><stop offset="1" stop-color="#76ff00"/></radialGradient><radialGradient id="w213" gradientUnits="userSpaceOnUse" cx="624.27" cy="968.09" r="519.5"><stop offset="0" stop-color="#fff"/><stop offset="0.35" stop-color="#c8ff96"/><stop offset="0.7" stop-color="#9dff43"/><stop offset="1" stop-color="#7aff00"/></radialGradient><radialGradient id="w214" gradientUnits="userSpaceOnUse" cx="624.27" cy="968.09" r="514.37"><stop offset="0" stop-color="#fff"/><stop offset="0.35" stop-color="#caff96"/><stop offset="0.7" stop-color="#a0ff43"/><stop offset="1" stop-color="#7eff00"/></radialGradient><radialGradient id="w215" gradientUnits="userSpaceOnUse" cx="624.27" cy="968.09" r="509.28"><stop offset="0" stop-color="#fff"/><stop offset="0.35" stop-color="#ccff96"/><stop offset="0.7" stop-color="#a2ff43"/><stop offset="1" stop-color="#82ff00"/></radialGradient><radialGradient id="w216" gradientUnits="userSpaceOnUse" cx="624.27" cy="968.09" r="504.21"><stop offset="0" stop-color="#fff"/><stop offset="0.35" stop-color="#cdff96"/><stop offset="0.7" stop-color="#a5ff43"/><stop offset="1" stop-color="#85ff00"/></radialGradient><radialGradient id="w217" gradientUnits="userSpaceOnUse" cx="624.27" cy="968.09" r="499.17"><stop offset="0" stop-color="#fff"/><stop offset="0.35" stop-color="#cfff96"/><stop offset="0.7" stop-color="#a8ff43"/><stop offset="1" stop-color="#89ff00"/></radialGradient><radialGradient id="w218" gradientUnits="userSpaceOnUse" cx="624.27" cy="968.09" r="494.17"><stop offset="0" stop-color="#fff"/><stop offset="0.35" stop-color="#d0ff96"/><stop offset="0.7" stop-color="#abff43"/><stop offset="1" stop-color="#8dff00"/></radialGradient><radialGradient id="w219" gradientUnits="userSpaceOnUse" cx="624.27" cy="968.09" r="489.2"><stop offset="0" stop-color="#fff"/><stop offset="0.35" stop-color="#d2ff96"/><stop offset="0.7" stop-color="#aeff43"/><stop offset="1" stop-color="#91ff00"/></radialGradient><radialGradient id="w220" gradientUnits="userSpaceOnUse" cx="624.27" cy="968.09" r="484.27"><stop offset="0" stop-color="#fff"/><stop offset="0.35" stop-color="#d3ff96"/><stop offset="0.7" stop-color="#b0ff43"/><stop offset="1" stop-color="#95ff00"/></radialGradient><radialGradient id="w221" gradientUnits="userSpaceOnUse" cx="624.27" cy="968.09" r="479.38"><stop offset="0" stop-color="#fff"/><stop offset="0.35" stop-color="#d5ff96"/><stop offset="0.7" stop-color="#b3ff43"/><stop offset="1" stop-color="#98ff00"/></radialGradient><radialGradient id="w222" gradientUnits="userSpaceOnUse" cx="624.27" cy="968.09" r="474.53"><stop offset="0" stop-color="#fff"/><stop offset="0.35" stop-color="#d6ff96"/><stop offset="0.7" stop-color="#b5ff43"/><stop offset="1" stop-color="#9bff00"/></radialGradient><radialGradient id="w223" gradientUnits="userSpaceOnUse" cx="624.27" cy="968.09" r="469.72"><stop offset="0" stop-color="#fff"/><stop offset="0.35" stop-color="#d7ff96"/><stop offset="0.7" stop-color="#b7ff43"/><stop offset="1" stop-color="#9eff00"/></radialGradient><radialGradient id="w224" gradientUnits="userSpaceOnUse" cx="624.27" cy="968.09" r="464.96"><stop offset="0" stop-color="#fff"/><stop offset="0.35" stop-color="#d8ff96"/><stop offset="0.7" stop-color="#baff43"/><stop offset="1" stop-color="#a1ff00"/></radialGradient><radialGradient id="w225" gradientUnits="userSpaceOnUse" cx="624.27" cy="968.09" r="460.25"><stop offset="0" stop-color="#fff"/><stop offset="0.35" stop-color="#daff96"/><stop offset="0.7" stop-color="#bcff43"/><stop offset="1" stop-color="#a4ff00"/></radialGradient><radialGradient id="w226" gradientUnits="userSpaceOnUse" cx="624.27" cy="968.09" r="455.58"><stop offset="0" stop-color="#fff"/><stop offset="0.35" stop-color="#dbff96"/><stop offset="0.7" stop-color="#beff43"/><stop offset="1" stop-color="#a7ff00"/></radialGradient><radialGradient id="w227" gradientUnits="userSpaceOnUse" cx="624.27" cy="968.09" r="450.97"><stop offset="0" stop-color="#fff"/><stop offset="0.35" stop-color="#dcff96"/><stop offset="0.7" stop-color="#c0ff43"/><stop offset="1" stop-color="#aaff00"/></radialGradient><radialGradient id="w228" gradientUnits="userSpaceOnUse" cx="624.27" cy="968.09" r="446.41"><stop offset="0" stop-color="#fff"/><stop offset="0.35" stop-color="#ddff96"/><stop offset="0.7" stop-color="#c2ff43"/><stop offset="1" stop-color="#adff00"/></radialGradient><radialGradient id="w229" gradientUnits="userSpaceOnUse" cx="624.27" cy="968.09" r="441.9"><stop offset="0" stop-color="#fff"/><stop offset="0.35" stop-color="#dfff96"/><stop offset="0.7" stop-color="#c5ff43"/><stop offset="1" stop-color="#b0ff00"/></radialGradient><radialGradient id="w230" gradientUnits="userSpaceOnUse" cx="624.27" cy="968.09" r="437.46"><stop offset="0" stop-color="#fff"/><stop offset="0.35" stop-color="#e0ff96"/><stop offset="0.7" stop-color="#c7ff43"/><stop offset="1" stop-color="#b3ff00"/></radialGradient><radialGradient id="w231" gradientUnits="userSpaceOnUse" cx="624.27" cy="968.09" r="433.07"><stop offset="0" stop-color="#fff"/><stop offset="0.35" stop-color="#e1ff96"/><stop offset="0.7" stop-color="#c9ff43"/><stop offset="1" stop-color="#b6ff00"/></radialGradient><radialGradient id="w232" gradientUnits="userSpaceOnUse" cx="624.27" cy="968.09" r="428.74"><stop offset="0" stop-color="#fff"/><stop offset="0.35" stop-color="#e2ff96"/><stop offset="0.7" stop-color="#cbff43"/><stop offset="1" stop-color="#b9ff00"/></radialGradient><radialGradient id="w233" gradientUnits="userSpaceOnUse" cx="624.27" cy="968.09" r="424.48"><stop offset="0" stop-color="#fff"/><stop offset="0.35" stop-color="#e3ff96"/><stop offset="0.7" stop-color="#cdff43"/><stop offset="1" stop-color="#bcff00"/></radialGradient><radialGradient id="w234" gradientUnits="userSpaceOnUse" cx="624.27" cy="968.09" r="420.29"><stop offset="0" stop-color="#fff"/><stop offset="0.35" stop-color="#e5ff96"/><stop offset="0.7" stop-color="#cfff43"/><stop offset="1" stop-color="#beff00"/></radialGradient><radialGradient id="w235" gradientUnits="userSpaceOnUse" cx="624.27" cy="968.09" r="416.16"><stop offset="0" stop-color="#fff"/><stop offset="0.35" stop-color="#e6ff96"/><stop offset="0.7" stop-color="#d2ff43"/><stop offset="1" stop-color="#c1ff00"/></radialGradient><radialGradient id="w236" gradientUnits="userSpaceOnUse" cx="624.27" cy="968.09" r="412.11"><stop offset="0" stop-color="#fff"/><stop offset="0.35" stop-color="#e7ff96"/><stop offset="0.7" stop-color="#d4ff43"/><stop offset="1" stop-color="#c4ff00"/></radialGradient><radialGradient id="w237" gradientUnits="userSpaceOnUse" cx="624.27" cy="968.09" r="408.13"><stop offset="0" stop-color="#fff"/><stop offset="0.35" stop-color="#e8ff96"/><stop offset="0.7" stop-color="#d6ff43"/><stop offset="1" stop-color="#c7ff00"/></radialGradient><radialGradient id="w238" gradientUnits="userSpaceOnUse" cx="624.27" cy="968.09" r="404.23"><stop offset="0" stop-color="#fff"/><stop offset="0.35" stop-color="#e9ff96"/><stop offset="0.7" stop-color="#d8ff43"/><stop offset="1" stop-color="#caff00"/></radialGradient><radialGradient id="w239" gradientUnits="userSpaceOnUse" cx="624.27" cy="968.09" r="400.41"><stop offset="0" stop-color="#fff"/><stop offset="0.35" stop-color="#eaff96"/><stop offset="0.7" stop-color="#daff43"/><stop offset="1" stop-color="#cdff00"/></radialGradient><radialGradient id="w240" gradientUnits="userSpaceOnUse" cx="624.27" cy="968.09" r="396.68"><stop offset="0" stop-color="#fff"/><stop offset="0.35" stop-color="#ebff96"/><stop offset="0.7" stop-color="#dbff43"/><stop offset="1" stop-color="#cfff00"/></radialGradient><radialGradient id="w241" gradientUnits="userSpaceOnUse" cx="624.27" cy="968.09" r="393.02"><stop offset="0" stop-color="#fff"/><stop offset="0.35" stop-color="#ecff96"/><stop offset="0.7" stop-color="#ddff43"/><stop offset="1" stop-color="#d1ff00"/></radialGradient><radialGradient id="w242" gradientUnits="userSpaceOnUse" cx="624.27" cy="968.09" r="389.46"><stop offset="0" stop-color="#fff"/><stop offset="0.35" stop-color="#edff96"/><stop offset="0.7" stop-color="#deff43"/><stop offset="1" stop-color="#d3ff00"/></radialGradient><radialGradient id="w243" gradientUnits="userSpaceOnUse" cx="624.27" cy="968.09" r="385.99"><stop offset="0" stop-color="#fff"/><stop offset="0.35" stop-color="#eeff96"/><stop offset="0.7" stop-color="#e0ff43"/><stop offset="1" stop-color="#d4ff00"/></radialGradient><radialGradient id="w244" gradientUnits="userSpaceOnUse" cx="624.27" cy="968.09" r="382.61"><stop offset="0" stop-color="#fff"/><stop offset="0.35" stop-color="#eeff96"/><stop offset="0.7" stop-color="#e1ff43"/><stop offset="1" stop-color="#d6ff00"/></radialGradient><radialGradient id="w245" gradientUnits="userSpaceOnUse" cx="624.27" cy="968.09" r="379.32"><stop offset="0" stop-color="#fff"/><stop offset="0.35" stop-color="#efff96"/><stop offset="0.7" stop-color="#e2ff43"/><stop offset="1" stop-color="#d8ff00"/></radialGradient><radialGradient id="w246" gradientUnits="userSpaceOnUse" cx="624.27" cy="968.09" r="376.14"><stop offset="0" stop-color="#fff"/><stop offset="0.35" stop-color="#f0ff96"/><stop offset="0.7" stop-color="#e4ff43"/><stop offset="1" stop-color="#daff00"/></radialGradient><radialGradient id="w247" gradientUnits="userSpaceOnUse" cx="624.27" cy="968.09" r="373.05"><stop offset="0" stop-color="#fff"/><stop offset="0.35" stop-color="#f1ff96"/><stop offset="0.7" stop-color="#e5ff43"/><stop offset="1" stop-color="#dcff00"/></radialGradient><radialGradient id="w248" gradientUnits="userSpaceOnUse" cx="624.27" cy="968.09" r="370.07"><stop offset="0" stop-color="#fff"/><stop offset="0.35" stop-color="#f1ff96"/><stop offset="0.7" stop-color="#e6ff43"/><stop offset="1" stop-color="#deff00"/></radialGradient><radialGradient id="w249" gradientUnits="userSpaceOnUse" cx="624.27" cy="968.09" r="367.19"><stop offset="0" stop-color="#fff"/><stop offset="0.35" stop-color="#f2ff96"/><stop offset="0.7" stop-color="#e8ff43"/><stop offset="1" stop-color="#e0ff00"/></radialGradient><radialGradient id="w250" gradientUnits="userSpaceOnUse" cx="624.27" cy="968.09" r="364.42"><stop offset="0" stop-color="#fff"/><stop offset="0.35" stop-color="#f3ff96"/><stop offset="0.7" stop-color="#e9ff43"/><stop offset="1" stop-color="#e1ff00"/></radialGradient><radialGradient id="w251" gradientUnits="userSpaceOnUse" cx="624.27" cy="968.09" r="361.76"><stop offset="0" stop-color="#fff"/><stop offset="0.35" stop-color="#f4ff96"/><stop offset="0.7" stop-color="#ebff43"/><stop offset="1" stop-color="#e3ff00"/></radialGradient><radialGradient id="w252" gradientUnits="userSpaceOnUse" cx="624.27" cy="968.09" r="359.22"><stop offset="0" stop-color="#fff"/><stop offset="0.35" stop-color="#f4ff96"/><stop offset="0.7" stop-color="#ecff43"/><stop offset="1" stop-color="#e5ff00"/></radialGradient><radialGradient id="w253" gradientUnits="userSpaceOnUse" cx="624.27" cy="968.09" r="356.79"><stop offset="0" stop-color="#fff"/><stop offset="0.35" stop-color="#f5ff96"/><stop offset="0.7" stop-color="#edff43"/><stop offset="1" stop-color="#e7ff00"/></radialGradient><radialGradient id="w254" gradientUnits="userSpaceOnUse" cx="624.27" cy="968.09" r="354.49"><stop offset="0" stop-color="#fff"/><stop offset="0.35" stop-color="#f6ff96"/><stop offset="0.7" stop-color="#efff43"/><stop offset="1" stop-color="#e9ff00"/></radialGradient><radialGradient id="w255" gradientUnits="userSpaceOnUse" cx="624.27" cy="968.09" r="352.3"><stop offset="0" stop-color="#fff"/><stop offset="0.35" stop-color="#f7ff96"/><stop offset="0.7" stop-color="#f0ff43"/><stop offset="1" stop-color="#ebff00"/></radialGradient><radialGradient id="w256" gradientUnits="userSpaceOnUse" cx="624.27" cy="968.09" r="350.24"><stop offset="0" stop-color="#fff"/><stop offset="0.35" stop-color="#f7ff96"/><stop offset="0.7" stop-color="#f1ff43"/><stop offset="1" stop-color="#edff00"/></radialGradient><radialGradient id="w257" gradientUnits="userSpaceOnUse" cx="624.27" cy="968.09" r="348.3"><stop offset="0" stop-color="#fff"/><stop offset="0.35" stop-color="#f8ff96"/><stop offset="0.7" stop-color="#f3ff43"/><stop offset="1" stop-color="#eeff00"/></radialGradient><radialGradient id="w258" gradientUnits="userSpaceOnUse" cx="624.27" cy="968.09" r="346.5"><stop offset="0" stop-color="#fff"/><stop offset="0.35" stop-color="#f9ff96"/><stop offset="0.7" stop-color="#f4fe43"/><stop offset="1" stop-color="#f0fe00"/></radialGradient><radialGradient id="w259" gradientUnits="userSpaceOnUse" cx="624.27" cy="968.09" r="344.82"><stop offset="0" stop-color="#fff"/><stop offset="0.35" stop-color="#f9fe96"/><stop offset="0.7" stop-color="#f5fd43"/><stop offset="1" stop-color="#f1fd00"/></radialGradient><radialGradient id="w260" gradientUnits="userSpaceOnUse" cx="624.27" cy="968.09" r="343.28"><stop offset="0" stop-color="#fff"/><stop offset="0.35" stop-color="#fafd96"/><stop offset="0.7" stop-color="#f5fc43"/><stop offset="1" stop-color="#f2fb00"/></radialGradient><radialGradient id="w261" gradientUnits="userSpaceOnUse" cx="624.27" cy="968.09" r="341.87"><stop offset="0" stop-color="#fff"/><stop offset="0.35" stop-color="#fafd96"/><stop offset="0.7" stop-color="#f6fb43"/><stop offset="1" stop-color="#f3f900"/></radialGradient><radialGradient id="w262" gradientUnits="userSpaceOnUse" cx="624.27" cy="968.09" r="340.6"><stop offset="0" stop-color="#fff"/><stop offset="0.35" stop-color="#fafc96"/><stop offset="0.7" stop-color="#f6f943"/><stop offset="1" stop-color="#f3f700"/></radialGradient><radialGradient id="w263" gradientUnits="userSpaceOnUse" cx="624.27" cy="968.09" r="339.47"><stop offset="0" stop-color="#fff"/><stop offset="0.35" stop-color="#fbfb96"/><stop offset="0.7" stop-color="#f7f843"/><stop offset="1" stop-color="#f4f500"/></radialGradient><radialGradient id="w264" gradientUnits="userSpaceOnUse" cx="624.27" cy="968.09" r="338.48"><stop offset="0" stop-color="#fff"/><stop offset="0.35" stop-color="#fbfa96"/><stop offset="0.7" stop-color="#f8f643"/><stop offset="1" stop-color="#f5f300"/></radialGradient><radialGradient id="w265" gradientUnits="userSpaceOnUse" cx="624.27" cy="968.09" r="337.63"><stop offset="0" stop-color="#fff"/><stop offset="0.35" stop-color="#fbf996"/><stop offset="0.7" stop-color="#f8f543"/><stop offset="1" stop-color="#f6f100"/></radialGradient><radialGradient id="w266" gradientUnits="userSpaceOnUse" cx="624.27" cy="968.09" r="336.93"><stop offset="0" stop-color="#fff"/><stop offset="0.35" stop-color="#fcf996"/><stop offset="0.7" stop-color="#f9f443"/><stop offset="1" stop-color="#f7f000"/></radialGradient><radialGradient id="w267" gradientUnits="userSpaceOnUse" cx="624.27" cy="968.09" r="336.36"><stop offset="0" stop-color="#fff"/><stop offset="0.35" stop-color="#fcf896"/><stop offset="0.7" stop-color="#f9f243"/><stop offset="1" stop-color="#f7ee00"/></radialGradient><radialGradient id="w268" gradientUnits="userSpaceOnUse" cx="624.27" cy="968.09" r="335.94"><stop offset="0" stop-color="#fff"/><stop offset="0.35" stop-color="#fcf796"/><stop offset="0.7" stop-color="#faf143"/><stop offset="1" stop-color="#f8ec00"/></radialGradient><radialGradient id="w269" gradientUnits="userSpaceOnUse" cx="624.27" cy="968.09" r="335.67"><stop offset="0" stop-color="#fff"/><stop offset="0.35" stop-color="#fdf696"/><stop offset="0.7" stop-color="#fbef43"/><stop offset="1" stop-color="#f9ea00"/></radialGradient><radialGradient id="w270" gradientUnits="userSpaceOnUse" cx="624.27" cy="968.09" r="335.54"><stop offset="0" stop-color="#fff"/><stop offset="0.35" stop-color="#fdf696"/><stop offset="0.7" stop-color="#fbee43"/><stop offset="1" stop-color="#fae800"/></radialGradient><radialGradient id="w271" gradientUnits="userSpaceOnUse" cx="624.27" cy="968.09" r="335.56"><stop offset="0" stop-color="#fff"/><stop offset="0.35" stop-color="#fdf596"/><stop offset="0.7" stop-color="#fced43"/><stop offset="1" stop-color="#fbe600"/></radialGradient><radialGradient id="w272" gradientUnits="userSpaceOnUse" cx="624.27" cy="968.09" r="335.72"><stop offset="0" stop-color="#fff"/><stop offset="0.35" stop-color="#fef496"/><stop offset="0.7" stop-color="#fceb43"/><stop offset="1" stop-color="#fce400"/></radialGradient><radialGradient id="w273" gradientUnits="userSpaceOnUse" cx="624.27" cy="968.09" r="336.03"><stop offset="0" stop-color="#fff"/><stop offset="0.35" stop-color="#fef396"/><stop offset="0.7" stop-color="#fdea43"/><stop offset="1" stop-color="#fce200"/></radialGradient><radialGradient id="w274" gradientUnits="userSpaceOnUse" cx="624.27" cy="968.09" r="336.49"><stop offset="0" stop-color="#fff"/><stop offset="0.35" stop-color="#fef296"/><stop offset="0.7" stop-color="#fee843"/><stop offset="1" stop-color="#fde000"/></radialGradient><radialGradient id="w275" gradientUnits="userSpaceOnUse" cx="624.27" cy="968.09" r="337.09"><stop offset="0" stop-color="#fff"/><stop offset="0.35" stop-color="#fff296"/><stop offset="0.7" stop-color="#fee743"/><stop offset="1" stop-color="#fede00"/></radialGradient><radialGradient id="w276" gradientUnits="userSpaceOnUse" cx="624.27" cy="968.09" r="337.84"><stop offset="0" stop-color="#fff"/><stop offset="0.35" stop-color="#fff196"/><stop offset="0.7" stop-color="#ffe543"/><stop offset="1" stop-color="#ffdc00"/></radialGradient><radialGradient id="w277" gradientUnits="userSpaceOnUse" cx="624.27" cy="968.09" r="338.73"><stop offset="0" stop-color="#fff"/><stop offset="0.35" stop-color="#ffef96"/><stop offset="0.7" stop-color="#ffe343"/><stop offset="1" stop-color="#ffd900"/></radialGradient><radialGradient id="w278" gradientUnits="userSpaceOnUse" cx="624.27" cy="968.09" r="339.77"><stop offset="0" stop-color="#fff"/><stop offset="0.35" stop-color="#ffee96"/><stop offset="0.7" stop-color="#ffe043"/><stop offset="1" stop-color="#ffd600"/></radialGradient><radialGradient id="w279" gradientUnits="userSpaceOnUse" cx="624.27" cy="968.09" r="340.94"><stop offset="0" stop-color="#fff"/><stop offset="0.35" stop-color="#ffed96"/><stop offset="0.7" stop-color="#ffde43"/><stop offset="1" stop-color="#ffd200"/></radialGradient><radialGradient id="w280" gradientUnits="userSpaceOnUse" cx="624.27" cy="968.09" r="342.26"><stop offset="0" stop-color="#fff"/><stop offset="0.35" stop-color="#ffeb96"/><stop offset="0.7" stop-color="#ffdb43"/><stop offset="1" stop-color="#ffcf00"/></radialGradient><radialGradient id="w281" gradientUnits="userSpaceOnUse" cx="624.27" cy="968.09" r="343.71"><stop offset="0" stop-color="#fff"/><stop offset="0.35" stop-color="#ffea96"/><stop offset="0.7" stop-color="#ffd943"/><stop offset="1" stop-color="#ffcb00"/></radialGradient><radialGradient id="w282" gradientUnits="userSpaceOnUse" cx="624.27" cy="968.09" r="345.31"><stop offset="0" stop-color="#fff"/><stop offset="0.35" stop-color="#ffe896"/><stop offset="0.7" stop-color="#ffd643"/><stop offset="1" stop-color="#ffc800"/></radialGradient><radialGradient id="w283" gradientUnits="userSpaceOnUse" cx="624.27" cy="968.09" r="347.04"><stop offset="0" stop-color="#fff"/><stop offset="0.35" stop-color="#ffe796"/><stop offset="0.7" stop-color="#ffd443"/><stop offset="1" stop-color="#ffc400"/></radialGradient><radialGradient id="w284" gradientUnits="userSpaceOnUse" cx="624.27" cy="968.09" r="348.9"><stop offset="0" stop-color="#fff"/><stop offset="0.35" stop-color="#ffe596"/><stop offset="0.7" stop-color="#ffd143"/><stop offset="1" stop-color="#ffc100"/></radialGradient><radialGradient id="w285" gradientUnits="userSpaceOnUse" cx="624.27" cy="968.09" r="350.89"><stop offset="0" stop-color="#fff"/><stop offset="0.35" stop-color="#ffe496"/><stop offset="0.7" stop-color="#ffce43"/><stop offset="1" stop-color="#ffbd00"/></radialGradient><radialGradient id="w286" gradientUnits="userSpaceOnUse" cx="624.27" cy="968.09" r="353.01"><stop offset="0" stop-color="#fff"/><stop offset="0.35" stop-color="#ffe296"/><stop offset="0.7" stop-color="#ffcc43"/><stop offset="1" stop-color="#ffb900"/></radialGradient><radialGradient id="w287" gradientUnits="userSpaceOnUse" cx="624.27" cy="968.09" r="355.26"><stop offset="0" stop-color="#fff"/><stop offset="0.35" stop-color="#ffe196"/><stop offset="0.7" stop-color="#ffc943"/><stop offset="1" stop-color="#ffb600"/></radialGradient><radialGradient id="w288" gradientUnits="userSpaceOnUse" cx="624.27" cy="968.09" r="357.63"><stop offset="0" stop-color="#fff"/><stop offset="0.35" stop-color="#ffdf96"/><stop offset="0.7" stop-color="#ffc643"/><stop offset="1" stop-color="#ffb200"/></radialGradient><radialGradient id="w289" gradientUnits="userSpaceOnUse" cx="624.27" cy="968.09" r="360.13"><stop offset="0" stop-color="#fff"/><stop offset="0.35" stop-color="#ffde96"/><stop offset="0.7" stop-color="#ffc443"/><stop offset="1" stop-color="#ffae00"/></radialGradient><radialGradient id="w290" gradientUnits="userSpaceOnUse" cx="624.27" cy="968.09" r="362.74"><stop offset="0" stop-color="#fff"/><stop offset="0.35" stop-color="#ffdc96"/><stop offset="0.7" stop-color="#ffc143"/><stop offset="1" stop-color="#ffab00"/></radialGradient><radialGradient id="w291" gradientUnits="userSpaceOnUse" cx="624.27" cy="968.09" r="365.46"><stop offset="0" stop-color="#fff"/><stop offset="0.35" stop-color="#ffdb96"/><stop offset="0.7" stop-color="#ffbe43"/><stop offset="1" stop-color="#ffa700"/></radialGradient><radialGradient id="w292" gradientUnits="userSpaceOnUse" cx="624.27" cy="968.09" r="368.3"><stop offset="0" stop-color="#fff"/><stop offset="0.35" stop-color="#ffd996"/><stop offset="0.7" stop-color="#ffbb43"/><stop offset="1" stop-color="#ffa300"/></radialGradient><radialGradient id="w293" gradientUnits="userSpaceOnUse" cx="624.27" cy="968.09" r="371.24"><stop offset="0" stop-color="#fff"/><stop offset="0.35" stop-color="#ffd896"/><stop offset="0.7" stop-color="#ffb843"/><stop offset="1" stop-color="#ff9f00"/></radialGradient><radialGradient id="w294" gradientUnits="userSpaceOnUse" cx="624.27" cy="968.09" r="374.29"><stop offset="0" stop-color="#fff"/><stop offset="0.35" stop-color="#ffd696"/><stop offset="0.7" stop-color="#ffb543"/><stop offset="1" stop-color="#ff9b00"/></radialGradient><radialGradient id="w295" gradientUnits="userSpaceOnUse" cx="624.27" cy="968.09" r="377.45"><stop offset="0" stop-color="#fff"/><stop offset="0.35" stop-color="#ffd496"/><stop offset="0.7" stop-color="#ffb243"/><stop offset="1" stop-color="#ff9600"/></radialGradient><radialGradient id="w296" gradientUnits="userSpaceOnUse" cx="624.27" cy="968.09" r="380.7"><stop offset="0" stop-color="#fff"/><stop offset="0.35" stop-color="#ffd296"/><stop offset="0.7" stop-color="#ffae43"/><stop offset="1" stop-color="#ff9200"/></radialGradient><radialGradient id="w297" gradientUnits="userSpaceOnUse" cx="624.27" cy="968.09" r="384.06"><stop offset="0" stop-color="#fff"/><stop offset="0.35" stop-color="#ffd096"/><stop offset="0.7" stop-color="#ffab43"/><stop offset="1" stop-color="#ff8d00"/></radialGradient><radialGradient id="w298" gradientUnits="userSpaceOnUse" cx="624.27" cy="968.09" r="387.51"><stop offset="0" stop-color="#fff"/><stop offset="0.35" stop-color="#ffce96"/><stop offset="0.7" stop-color="#ffa743"/><stop offset="1" stop-color="#ff8800"/></radialGradient><radialGradient id="w299" gradientUnits="userSpaceOnUse" cx="624.27" cy="968.09" r="391.06"><stop offset="0" stop-color="#fff"/><stop offset="0.35" stop-color="#ffcc96"/><stop offset="0.7" stop-color="#ffa443"/><stop offset="1" stop-color="#ff8300"/></radialGradient><radialGradient id="w300" gradientUnits="userSpaceOnUse" cx="624.27" cy="968.09" r="394.7"><stop offset="0" stop-color="#fff"/><stop offset="0.35" stop-color="#ffca96"/><stop offset="0.7" stop-color="#ffa043"/><stop offset="1" stop-color="#ff7e00"/></radialGradient><radialGradient id="w301" gradientUnits="userSpaceOnUse" cx="624.27" cy="968.09" r="398.44"><stop offset="0" stop-color="#fff"/><stop offset="0.35" stop-color="#ffc896"/><stop offset="0.7" stop-color="#ff9c43"/><stop offset="1" stop-color="#ff7900"/></radialGradient><radialGradient id="w302" gradientUnits="userSpaceOnUse" cx="624.27" cy="968.09" r="402.27"><stop offset="0" stop-color="#fff"/><stop offset="0.35" stop-color="#ffc696"/><stop offset="0.7" stop-color="#ff9843"/><stop offset="1" stop-color="#ff7400"/></radialGradient><radialGradient id="w303" gradientUnits="userSpaceOnUse" cx="624.27" cy="968.09" r="406.18"><stop offset="0" stop-color="#fff"/><stop offset="0.35" stop-color="#ffc496"/><stop offset="0.7" stop-color="#ff9543"/><stop offset="1" stop-color="#ff6f00"/></radialGradient><radialGradient id="w304" gradientUnits="userSpaceOnUse" cx="624.27" cy="968.09" r="410.17"><stop offset="0" stop-color="#fff"/><stop offset="0.35" stop-color="#ffc296"/><stop offset="0.7" stop-color="#ff9143"/><stop offset="1" stop-color="#ff6900"/></radialGradient><radialGradient id="w305" gradientUnits="userSpaceOnUse" cx="624.27" cy="968.09" r="414.25"><stop offset="0" stop-color="#fff"/><stop offset="0.35" stop-color="#ffbf96"/><stop offset="0.7" stop-color="#ff8c43"/><stop offset="1" stop-color="#ff6400"/></radialGradient><radialGradient id="w306" gradientUnits="userSpaceOnUse" cx="624.27" cy="968.09" r="418.41"><stop offset="0" stop-color="#fff"/><stop offset="0.35" stop-color="#ffbd96"/><stop offset="0.7" stop-color="#ff8843"/><stop offset="1" stop-color="#ff5e00"/></radialGradient><radialGradient id="w307" gradientUnits="userSpaceOnUse" cx="624.27" cy="968.09" r="422.63"><stop offset="0" stop-color="#fff"/><stop offset="0.35" stop-color="#ffbb96"/><stop offset="0.7" stop-color="#ff8543"/><stop offset="1" stop-color="#ff5900"/></radialGradient><radialGradient id="w308" gradientUnits="userSpaceOnUse" cx="624.27" cy="968.09" r="426.94"><stop offset="0" stop-color="#fff"/><stop offset="0.35" stop-color="#ffb996"/><stop offset="0.7" stop-color="#ff8143"/><stop offset="1" stop-color="#ff5500"/></radialGradient><radialGradient id="w309" gradientUnits="userSpaceOnUse" cx="624.27" cy="968.09" r="431.31"><stop offset="0" stop-color="#fff"/><stop offset="0.35" stop-color="#ffb796"/><stop offset="0.7" stop-color="#ff7e43"/><stop offset="1" stop-color="#ff5000"/></radialGradient><radialGradient id="w310" gradientUnits="userSpaceOnUse" cx="624.27" cy="968.09" r="435.75"><stop offset="0" stop-color="#fff"/><stop offset="0.35" stop-color="#ffb696"/><stop offset="0.7" stop-color="#ff7b43"/><stop offset="1" stop-color="#ff4c00"/></radialGradient><radialGradient id="w311" gradientUnits="userSpaceOnUse" cx="624.27" cy="968.09" r="440.26"><stop offset="0" stop-color="#fff"/><stop offset="0.35" stop-color="#ffb496"/><stop offset="0.7" stop-color="#ff7743"/><stop offset="1" stop-color="#ff4700"/></radialGradient><radialGradient id="w312" gradientUnits="userSpaceOnUse" cx="624.27" cy="968.09" r="444.84"><stop offset="0" stop-color="#fff"/><stop offset="0.35" stop-color="#ffb296"/><stop offset="0.7" stop-color="#ff7443"/><stop offset="1" stop-color="#ff4300"/></radialGradient><radialGradient id="w313" gradientUnits="userSpaceOnUse" cx="624.27" cy="968.09" r="449.48"><stop offset="0" stop-color="#fff"/><stop offset="0.35" stop-color="#ffb096"/><stop offset="0.7" stop-color="#ff7043"/><stop offset="1" stop-color="#ff3e00"/></radialGradient><radialGradient id="w314" gradientUnits="userSpaceOnUse" cx="624.27" cy="968.09" r="454.19"><stop offset="0" stop-color="#fff"/><stop offset="0.35" stop-color="#ffae96"/><stop offset="0.7" stop-color="#ff6d43"/><stop offset="1" stop-color="#ff3900"/></radialGradient><radialGradient id="w315" gradientUnits="userSpaceOnUse" cx="624.27" cy="968.09" r="458.96"><stop offset="0" stop-color="#fff"/><stop offset="0.35" stop-color="#ffac96"/><stop offset="0.7" stop-color="#ff6943"/><stop offset="1" stop-color="#ff3300"/></radialGradient><radialGradient id="w316" gradientUnits="userSpaceOnUse" cx="624.27" cy="968.09" r="463.78"><stop offset="0" stop-color="#fff"/><stop offset="0.35" stop-color="#ffa996"/><stop offset="0.7" stop-color="#ff6543"/><stop offset="1" stop-color="#ff2e00"/></radialGradient><radialGradient id="w317" gradientUnits="userSpaceOnUse" cx="624.27" cy="968.09" r="468.66"><stop offset="0" stop-color="#fff"/><stop offset="0.35" stop-color="#ffa796"/><stop offset="0.7" stop-color="#ff6143"/><stop offset="1" stop-color="#ff2900"/></radialGradient><radialGradient id="w318" gradientUnits="userSpaceOnUse" cx="624.27" cy="968.09" r="473.59"><stop offset="0" stop-color="#fff"/><stop offset="0.35" stop-color="#ffa596"/><stop offset="0.7" stop-color="#ff5e43"/><stop offset="1" stop-color="#ff2500"/></radialGradient><radialGradient id="w319" gradientUnits="userSpaceOnUse" cx="624.27" cy="968.09" r="478.57"><stop offset="0" stop-color="#fff"/><stop offset="0.35" stop-color="#ffa496"/><stop offset="0.7" stop-color="#ff5b43"/><stop offset="1" stop-color="#ff2100"/></radialGradient><radialGradient id="w320" gradientUnits="userSpaceOnUse" cx="624.27" cy="968.09" r="483.6"><stop offset="0" stop-color="#fff"/><stop offset="0.35" stop-color="#ffa296"/><stop offset="0.7" stop-color="#ff5843"/><stop offset="1" stop-color="#ff1d00"/></radialGradient><radialGradient id="w321" gradientUnits="userSpaceOnUse" cx="624.27" cy="968.09" r="488.66"><stop offset="0" stop-color="#fff"/><stop offset="0.35" stop-color="#ffa096"/><stop offset="0.7" stop-color="#ff5543"/><stop offset="1" stop-color="#ff1800"/></radialGradient><radialGradient id="w322" gradientUnits="userSpaceOnUse" cx="624.27" cy="968.09" r="493.78"><stop offset="0" stop-color="#fff"/><stop offset="0.35" stop-color="#ff9f96"/><stop offset="0.7" stop-color="#ff5143"/><stop offset="1" stop-color="#ff1400"/></radialGradient><radialGradient id="w323" gradientUnits="userSpaceOnUse" cx="624.27" cy="968.09" r="498.94"><stop offset="0" stop-color="#fff"/><stop offset="0.35" stop-color="#ff9d96"/><stop offset="0.7" stop-color="#ff4e43"/><stop offset="1" stop-color="#ff0f00"/></radialGradient><radialGradient id="w324" gradientUnits="userSpaceOnUse" cx="624.27" cy="968.09" r="504.15"><stop offset="0" stop-color="#fff"/><stop offset="0.35" stop-color="#ff9b96"/><stop offset="0.7" stop-color="#ff4b43"/><stop offset="1" stop-color="#ff0b00"/></radialGradient><radialGradient id="w325" gradientUnits="userSpaceOnUse" cx="624.27" cy="968.09" r="509.41"><stop offset="0" stop-color="#fff"/><stop offset="0.35" stop-color="#ff9a96"/><stop offset="0.7" stop-color="#ff4943"/><stop offset="1" stop-color="#ff0800"/></radialGradient><radialGradient id="w326" gradientUnits="userSpaceOnUse" cx="624.27" cy="968.09" r="514.72"><stop offset="0" stop-color="#fff"/><stop offset="0.35" stop-color="#ff9996"/><stop offset="0.7" stop-color="#ff4743"/><stop offset="1" stop-color="#ff0600"/></radialGradient><radialGradient id="w327" gradientUnits="userSpaceOnUse" cx="624.27" cy="968.09" r="520.06"><stop offset="0" stop-color="#fff"/><stop offset="0.35" stop-color="#ff9896"/><stop offset="0.7" stop-color="#ff4543"/><stop offset="1" stop-color="#ff0300"/></radialGradient><radialGradient id="w328" gradientUnits="userSpaceOnUse" cx="624.27" cy="968.09" r="525.44"><stop offset="0" stop-color="#fff"/><stop offset="0.35" stop-color="#ff9796"/><stop offset="0.7" stop-color="#ff4443"/><stop offset="1" stop-color="#ff0200"/></radialGradient><radialGradient id="w329" gradientUnits="userSpaceOnUse" cx="624.27" cy="968.09" r="530.86"><stop offset="0" stop-color="#fff"/><stop offset="0.35" stop-color="#ff9796"/><stop offset="0.7" stop-color="#ff4343"/><stop offset="1" stop-color="#ff0000"/></radialGradient><radialGradient id="w330" gradientUnits="userSpaceOnUse" cx="624.27" cy="968.09" r="536.3"><stop offset="0" stop-color="#fff"/><stop offset="0.35" stop-color="#ff9696"/><stop offset="0.7" stop-color="#ff4343"/><stop offset="1" stop-color="#ff0000"/></radialGradient><radialGradient id="w331" gradientUnits="userSpaceOnUse" cx="624.27" cy="968.09" r="541.78"><stop offset="0" stop-color="#fff"/><stop offset="0.35" stop-color="#ff9696"/><stop offset="0.7" stop-color="#ff4343"/><stop offset="1" stop-color="#ff0000"/></radialGradient><radialGradient id="w332" gradientUnits="userSpaceOnUse" cx="624.27" cy="968.09" r="547.31"><stop offset="0" stop-color="#fff"/><stop offset="0.35" stop-color="#ff9696"/><stop offset="0.7" stop-color="#ff4343"/><stop offset="1" stop-color="#ff0000"/></radialGradient><radialGradient id="w333" gradientUnits="userSpaceOnUse" cx="624.27" cy="968.09" r="552.87"><stop offset="0" stop-color="#fff"/><stop offset="0.35" stop-color="#ff9696"/><stop offset="0.7" stop-color="#ff4343"/><stop offset="1" stop-color="#ff0000"/></radialGradient><radialGradient id="w334" gradientUnits="userSpaceOnUse" cx="624.27" cy="968.09" r="558.45"><stop offset="0" stop-color="#fff"/><stop offset="0.35" stop-color="#ff9696"/><stop offset="0.7" stop-color="#ff4343"/><stop offset="1" stop-color="#ff0000"/></radialGradient><radialGradient id="w335" gradientUnits="userSpaceOnUse" cx="624.27" cy="968.09" r="563.93"><stop offset="0" stop-color="#fff"/><stop offset="0.35" stop-color="#ff9697"/><stop offset="0.7" stop-color="#ff4343"/><stop offset="1" stop-color="#ff0000"/></radialGradient><radialGradient id="w336" gradientUnits="userSpaceOnUse" cx="624.27" cy="968.09" r="563.69"><stop offset="0" stop-color="#fff"/><stop offset="0.35" stop-color="#ff9697"/><stop offset="0.7" stop-color="#ff4344"/><stop offset="1" stop-color="#ff0001"/></radialGradient><radialGradient id="w337" gradientUnits="userSpaceOnUse" cx="624.27" cy="968.09" r="557.86"><stop offset="0" stop-color="#fff"/><stop offset="0.35" stop-color="#ff9698"/><stop offset="0.7" stop-color="#ff4345"/><stop offset="1" stop-color="#ff0003"/></radialGradient><radialGradient id="w338" gradientUnits="userSpaceOnUse" cx="624.27" cy="968.09" r="552.07"><stop offset="0" stop-color="#fff"/><stop offset="0.35" stop-color="#ff9698"/><stop offset="0.7" stop-color="#ff4346"/><stop offset="1" stop-color="#ff0004"/></radialGradient><radialGradient id="w339" gradientUnits="userSpaceOnUse" cx="624.27" cy="968.09" r="546.31"><stop offset="0" stop-color="#fff"/><stop offset="0.35" stop-color="#ff9699"/><stop offset="0.7" stop-color="#ff4347"/><stop offset="1" stop-color="#ff0006"/></radialGradient><radialGradient id="w340" gradientUnits="userSpaceOnUse" cx="624.27" cy="968.09" r="540.57"><stop offset="0" stop-color="#fff"/><stop offset="0.35" stop-color="#ff969a"/><stop offset="0.7" stop-color="#ff4349"/><stop offset="1" stop-color="#ff0008"/></radialGradient><radialGradient id="w341" gradientUnits="userSpaceOnUse" cx="624.27" cy="968.09" r="534.86"><stop offset="0" stop-color="#fff"/><stop offset="0.35" stop-color="#ff969a"/><stop offset="0.7" stop-color="#ff434a"/><stop offset="1" stop-color="#ff000a"/></radialGradient><radialGradient id="w342" gradientUnits="userSpaceOnUse" cx="624.27" cy="968.09" r="529.19"><stop offset="0" stop-color="#fff"/><stop offset="0.35" stop-color="#ff969b"/><stop offset="0.7" stop-color="#ff434b"/><stop offset="1" stop-color="#ff000b"/></radialGradient><radialGradient id="w343" gradientUnits="userSpaceOnUse" cx="624.27" cy="968.09" r="523.55"><stop offset="0" stop-color="#fff"/><stop offset="0.35" stop-color="#ff969c"/><stop offset="0.7" stop-color="#ff434d"/><stop offset="1" stop-color="#ff000d"/></radialGradient><radialGradient id="w344" gradientUnits="userSpaceOnUse" cx="624.27" cy="968.09" r="517.94"><stop offset="0" stop-color="#fff"/><stop offset="0.35" stop-color="#ff969d"/><stop offset="0.7" stop-color="#ff434e"/><stop offset="1" stop-color="#ff000f"/></radialGradient><radialGradient id="w345" gradientUnits="userSpaceOnUse" cx="624.27" cy="968.09" r="512.37"><stop offset="0" stop-color="#fff"/><stop offset="0.35" stop-color="#ff969d"/><stop offset="0.7" stop-color="#ff434f"/><stop offset="1" stop-color="#ff0011"/></radialGradient><radialGradient id="w346" gradientUnits="userSpaceOnUse" cx="624.27" cy="968.09" r="506.83"><stop offset="0" stop-color="#fff"/><stop offset="0.35" stop-color="#ff969e"/><stop offset="0.7" stop-color="#ff4350"/><stop offset="1" stop-color="#ff0012"/></radialGradient><radialGradient id="w347" gradientUnits="userSpaceOnUse" cx="624.27" cy="968.09" r="501.33"><stop offset="0" stop-color="#fff"/><stop offset="0.35" stop-color="#ff969f"/><stop offset="0.7" stop-color="#ff4352"/><stop offset="1" stop-color="#ff0014"/></radialGradient><radialGradient id="w348" gradientUnits="userSpaceOnUse" cx="624.27" cy="968.09" r="495.87"><stop offset="0" stop-color="#fff"/><stop offset="0.35" stop-color="#ff969f"/><stop offset="0.7" stop-color="#ff4353"/><stop offset="1" stop-color="#ff0016"/></radialGradient><radialGradient id="w349" gradientUnits="userSpaceOnUse" cx="624.27" cy="968.09" r="490.44"><stop offset="0" stop-color="#fff"/><stop offset="0.35" stop-color="#ff96a0"/><stop offset="0.7" stop-color="#ff4354"/><stop offset="1" stop-color="#ff0018"/></radialGradient><radialGradient id="w350" gradientUnits="userSpaceOnUse" cx="624.27" cy="968.09" r="485.06"><stop offset="0" stop-color="#fff"/><stop offset="0.35" stop-color="#ff96a1"/><stop offset="0.7" stop-color="#ff4356"/><stop offset="1" stop-color="#ff001a"/></radialGradient><radialGradient id="w351" gradientUnits="userSpaceOnUse" cx="624.27" cy="968.09" r="479.72"><stop offset="0" stop-color="#fff"/><stop offset="0.35" stop-color="#ff96a2"/><stop offset="0.7" stop-color="#ff4357"/><stop offset="1" stop-color="#ff001b"/></radialGradient><radialGradient id="w352" gradientUnits="userSpaceOnUse" cx="624.27" cy="968.09" r="474.42"><stop offset="0" stop-color="#fff"/><stop offset="0.35" stop-color="#ff96a2"/><stop offset="0.7" stop-color="#ff4358"/><stop offset="1" stop-color="#ff001d"/></radialGradient><radialGradient id="w353" gradientUnits="userSpaceOnUse" cx="624.27" cy="968.09" r="469.17"><stop offset="0" stop-color="#fff"/><stop offset="0.35" stop-color="#ff96a3"/><stop offset="0.7" stop-color="#ff435a"/><stop offset="1" stop-color="#ff001f"/></radialGradient><radialGradient id="w354" gradientUnits="userSpaceOnUse" cx="624.27" cy="968.09" r="463.97"><stop offset="0" stop-color="#fff"/><stop offset="0.35" stop-color="#ff96a4"/><stop offset="0.7" stop-color="#ff435b"/><stop offset="1" stop-color="#ff0021"/></radialGradient><radialGradient id="w355" gradientUnits="userSpaceOnUse" cx="624.27" cy="968.09" r="458.81"><stop offset="0" stop-color="#fff"/><stop offset="0.35" stop-color="#ff96a5"/><stop offset="0.7" stop-color="#ff435c"/><stop offset="1" stop-color="#ff0023"/></radialGradient><radialGradient id="w356" gradientUnits="userSpaceOnUse" cx="624.27" cy="968.09" r="453.71"><stop offset="0" stop-color="#fff"/><stop offset="0.35" stop-color="#ff96a5"/><stop offset="0.7" stop-color="#ff435e"/><stop offset="1" stop-color="#ff0024"/></radialGradient><radialGradient id="w357" gradientUnits="userSpaceOnUse" cx="624.27" cy="968.09" r="448.65"><stop offset="0" stop-color="#fff"/><stop offset="0.35" stop-color="#ff96a6"/><stop offset="0.7" stop-color="#ff435f"/><stop offset="1" stop-color="#ff0026"/></radialGradient><radialGradient id="w358" gradientUnits="userSpaceOnUse" cx="624.27" cy="968.09" r="443.65"><stop offset="0" stop-color="#fff"/><stop offset="0.35" stop-color="#ff96a7"/><stop offset="0.7" stop-color="#ff4360"/><stop offset="1" stop-color="#ff0028"/></radialGradient><radialGradient id="w359" gradientUnits="userSpaceOnUse" cx="624.27" cy="968.09" r="438.7"><stop offset="0" stop-color="#fff"/><stop offset="0.35" stop-color="#ff96a8"/><stop offset="0.7" stop-color="#ff4362"/><stop offset="1" stop-color="#ff002a"/></radialGradient><radialGradient id="w360" gradientUnits="userSpaceOnUse" cx="624.27" cy="968.09" r="433.81"><stop offset="0" stop-color="#fff"/><stop offset="0.35" stop-color="#ff96a8"/><stop offset="0.7" stop-color="#ff4363"/><stop offset="1" stop-color="#ff002c"/></radialGradient><radialGradient id="w361" gradientUnits="userSpaceOnUse" cx="624.27" cy="968.09" r="428.98"><stop offset="0" stop-color="#fff"/><stop offset="0.35" stop-color="#ff96a9"/><stop offset="0.7" stop-color="#ff4364"/><stop offset="1" stop-color="#ff002d"/></radialGradient><radialGradient id="w362" gradientUnits="userSpaceOnUse" cx="624.27" cy="968.09" r="424.21"><stop offset="0" stop-color="#fff"/><stop offset="0.35" stop-color="#ff96aa"/><stop offset="0.7" stop-color="#ff4366"/><stop offset="1" stop-color="#ff002f"/></radialGradient><radialGradient id="w363" gradientUnits="userSpaceOnUse" cx="624.27" cy="968.09" r="419.5"><stop offset="0" stop-color="#fff"/><stop offset="0.35" stop-color="#ff96ab"/><stop offset="0.7" stop-color="#ff4367"/><stop offset="1" stop-color="#ff0031"/></radialGradient><radialGradient id="w364" gradientUnits="userSpaceOnUse" cx="624.27" cy="968.09" r="414.86"><stop offset="0" stop-color="#fff"/><stop offset="0.35" stop-color="#ff96ab"/><stop offset="0.7" stop-color="#ff4369"/><stop offset="1" stop-color="#ff0033"/></radialGradient><radialGradient id="w365" gradientUnits="userSpaceOnUse" cx="624.27" cy="968.09" r="410.29"><stop offset="0" stop-color="#fff"/><stop offset="0.35" stop-color="#ff96ac"/><stop offset="0.7" stop-color="#ff436a"/><stop offset="1" stop-color="#ff0035"/></radialGradient><radialGradient id="w366" gradientUnits="userSpaceOnUse" cx="624.27" cy="968.09" r="405.78"><stop offset="0" stop-color="#fff"/><stop offset="0.35" stop-color="#ff96ad"/><stop offset="0.7" stop-color="#ff436c"/><stop offset="1" stop-color="#ff0038"/></radialGradient><radialGradient id="w367" gradientUnits="userSpaceOnUse" cx="624.27" cy="968.09" r="401.35"><stop offset="0" stop-color="#fff"/><stop offset="0.35" stop-color="#ff96ae"/><stop offset="0.7" stop-color="#ff436e"/><stop offset="1" stop-color="#ff003a"/></radialGradient><radialGradient id="w368" gradientUnits="userSpaceOnUse" cx="624.27" cy="968.09" r="396.99"><stop offset="0" stop-color="#fff"/><stop offset="0.35" stop-color="#ff96af"/><stop offset="0.7" stop-color="#ff436f"/><stop offset="1" stop-color="#ff003d"/></radialGradient><radialGradient id="w369" gradientUnits="userSpaceOnUse" cx="624.27" cy="968.09" r="392.71"><stop offset="0" stop-color="#fff"/><stop offset="0.35" stop-color="#ff96b0"/><stop offset="0.7" stop-color="#ff4371"/><stop offset="1" stop-color="#ff003f"/></radialGradient><radialGradient id="w370" gradientUnits="userSpaceOnUse" cx="624.27" cy="968.09" r="388.51"><stop offset="0" stop-color="#fff"/><stop offset="0.35" stop-color="#ff96b1"/><stop offset="0.7" stop-color="#ff4373"/><stop offset="1" stop-color="#ff0041"/></radialGradient><radialGradient id="w371" gradientUnits="userSpaceOnUse" cx="624.27" cy="968.09" r="384.39"><stop offset="0" stop-color="#fff"/><stop offset="0.35" stop-color="#ff96b2"/><stop offset="0.7" stop-color="#ff4375"/><stop offset="1" stop-color="#ff0044"/></radialGradient><radialGradient id="w372" gradientUnits="userSpaceOnUse" cx="624.27" cy="968.09" r="380.36"><stop offset="0" stop-color="#fff"/><stop offset="0.35" stop-color="#ff96b3"/><stop offset="0.7" stop-color="#ff4377"/><stop offset="1" stop-color="#ff0046"/></radialGradient><radialGradient id="w373" gradientUnits="userSpaceOnUse" cx="624.27" cy="968.09" r="376.41"><stop offset="0" stop-color="#fff"/><stop offset="0.35" stop-color="#ff96b4"/><stop offset="0.7" stop-color="#ff4378"/><stop offset="1" stop-color="#ff0049"/></radialGradient><radialGradient id="w374" gradientUnits="userSpaceOnUse" cx="624.27" cy="968.09" r="372.55"><stop offset="0" stop-color="#fff"/><stop offset="0.35" stop-color="#ff96b5"/><stop offset="0.7" stop-color="#ff437a"/><stop offset="1" stop-color="#ff004b"/></radialGradient><radialGradient id="w375" gradientUnits="userSpaceOnUse" cx="624.27" cy="968.09" r="368.79"><stop offset="0" stop-color="#fff"/><stop offset="0.35" stop-color="#ff96b6"/><stop offset="0.7" stop-color="#ff437c"/><stop offset="1" stop-color="#ff004d"/></radialGradient><radialGradient id="w376" gradientUnits="userSpaceOnUse" cx="624.27" cy="968.09" r="365.12"><stop offset="0" stop-color="#fff"/><stop offset="0.35" stop-color="#ff96b7"/><stop offset="0.7" stop-color="#ff437e"/><stop offset="1" stop-color="#ff0050"/></radialGradient><radialGradient id="w377" gradientUnits="userSpaceOnUse" cx="624.27" cy="968.09" r="361.55"><stop offset="0" stop-color="#fff"/><stop offset="0.35" stop-color="#ff96b8"/><stop offset="0.7" stop-color="#ff437f"/><stop offset="1" stop-color="#ff0052"/></radialGradient><radialGradient id="w378" gradientUnits="userSpaceOnUse" cx="624.27" cy="968.09" r="358.08"><stop offset="0" stop-color="#fff"/><stop offset="0.35" stop-color="#ff96b9"/><stop offset="0.7" stop-color="#ff4381"/><stop offset="1" stop-color="#ff0055"/></radialGradient><radialGradient id="w379" gradientUnits="userSpaceOnUse" cx="624.27" cy="968.09" r="354.72"><stop offset="0" stop-color="#fff"/><stop offset="0.35" stop-color="#ff96ba"/><stop offset="0.7" stop-color="#ff4383"/><stop offset="1" stop-color="#ff0057"/></radialGradient><radialGradient id="w380" gradientUnits="userSpaceOnUse" cx="624.27" cy="968.09" r="351.47"><stop offset="0" stop-color="#fff"/><stop offset="0.35" stop-color="#ff96bb"/><stop offset="0.7" stop-color="#ff4385"/><stop offset="1" stop-color="#ff005a"/></radialGradient><radialGradient id="w381" gradientUnits="userSpaceOnUse" cx="624.27" cy="968.09" r="348.32"><stop offset="0" stop-color="#fff"/><stop offset="0.35" stop-color="#ff96bd"/><stop offset="0.7" stop-color="#ff4388"/><stop offset="1" stop-color="#ff005d"/></radialGradient><radialGradient id="w382" gradientUnits="userSpaceOnUse" cx="624.27" cy="968.09" r="345.29"><stop offset="0" stop-color="#fff"/><stop offset="0.35" stop-color="#ff96be"/><stop offset="0.7" stop-color="#ff438a"/><stop offset="1" stop-color="#ff0061"/></radialGradient><radialGradient id="w383" gradientUnits="userSpaceOnUse" cx="624.27" cy="968.09" r="342.38"><stop offset="0" stop-color="#fff"/><stop offset="0.35" stop-color="#ff96c0"/><stop offset="0.7" stop-color="#ff438d"/><stop offset="1" stop-color="#ff0065"/></radialGradient><radialGradient id="w384" gradientUnits="userSpaceOnUse" cx="624.27" cy="968.09" r="339.59"><stop offset="0" stop-color="#fff"/><stop offset="0.35" stop-color="#ff96c2"/><stop offset="0.7" stop-color="#ff4390"/><stop offset="1" stop-color="#ff0069"/></radialGradient><radialGradient id="w385" gradientUnits="userSpaceOnUse" cx="624.27" cy="968.09" r="336.92"><stop offset="0" stop-color="#fff"/><stop offset="0.35" stop-color="#ff96c3"/><stop offset="0.7" stop-color="#ff4393"/><stop offset="1" stop-color="#ff006d"/></radialGradient><radialGradient id="w386" gradientUnits="userSpaceOnUse" cx="624.27" cy="968.09" r="334.37"><stop offset="0" stop-color="#fff"/><stop offset="0.35" stop-color="#ff96c5"/><stop offset="0.7" stop-color="#ff4397"/><stop offset="1" stop-color="#ff0071"/></radialGradient><radialGradient id="w387" gradientUnits="userSpaceOnUse" cx="624.27" cy="968.09" r="331.96"><stop offset="0" stop-color="#fff"/><stop offset="0.35" stop-color="#ff96c7"/><stop offset="0.7" stop-color="#ff439a"/><stop offset="1" stop-color="#ff0076"/></radialGradient><radialGradient id="w388" gradientUnits="userSpaceOnUse" cx="624.27" cy="968.09" r="329.67"><stop offset="0" stop-color="#fff"/><stop offset="0.35" stop-color="#ff96c8"/><stop offset="0.7" stop-color="#ff439d"/><stop offset="1" stop-color="#ff007a"/></radialGradient><radialGradient id="w389" gradientUnits="userSpaceOnUse" cx="624.27" cy="968.09" r="327.52"><stop offset="0" stop-color="#fff"/><stop offset="0.35" stop-color="#ff96ca"/><stop offset="0.7" stop-color="#ff43a0"/><stop offset="1" stop-color="#ff007e"/></radialGradient><radialGradient id="w390" gradientUnits="userSpaceOnUse" cx="624.27" cy="968.09" r="325.51"><stop offset="0" stop-color="#fff"/><stop offset="0.35" stop-color="#ff96cc"/><stop offset="0.7" stop-color="#ff43a3"/><stop offset="1" stop-color="#ff0082"/></radialGradient><radialGradient id="w391" gradientUnits="userSpaceOnUse" cx="624.27" cy="968.09" r="323.64"><stop offset="0" stop-color="#fff"/><stop offset="0.35" stop-color="#ff96cd"/><stop offset="0.7" stop-color="#ff43a6"/><stop offset="1" stop-color="#ff0086"/></radialGradient><radialGradient id="w392" gradientUnits="userSpaceOnUse" cx="624.27" cy="968.09" r="321.9"><stop offset="0" stop-color="#fff"/><stop offset="0.35" stop-color="#ff96cf"/><stop offset="0.7" stop-color="#ff43a9"/><stop offset="1" stop-color="#ff008a"/></radialGradient><radialGradient id="w393" gradientUnits="userSpaceOnUse" cx="624.27" cy="968.09" r="320.32"><stop offset="0" stop-color="#fff"/><stop offset="0.35" stop-color="#ff96d1"/><stop offset="0.7" stop-color="#ff43ac"/><stop offset="1" stop-color="#ff008e"/></radialGradient><radialGradient id="w394" gradientUnits="userSpaceOnUse" cx="624.27" cy="968.09" r="318.88"><stop offset="0" stop-color="#fff"/><stop offset="0.35" stop-color="#ff96d3"/><stop offset="0.7" stop-color="#ff43af"/><stop offset="1" stop-color="#ff0093"/></radialGradient><radialGradient id="w395" gradientUnits="userSpaceOnUse" cx="624.27" cy="968.09" r="317.58"><stop offset="0" stop-color="#fff"/><stop offset="0.35" stop-color="#ff96d5"/><stop offset="0.7" stop-color="#ff43b3"/><stop offset="1" stop-color="#ff0097"/></radialGradient><radialGradient id="w396" gradientUnits="userSpaceOnUse" cx="624.27" cy="968.09" r="316.44"><stop offset="0" stop-color="#fff"/><stop offset="0.35" stop-color="#ff96d7"/><stop offset="0.7" stop-color="#ff43b7"/><stop offset="1" stop-color="#ff009d"/></radialGradient><radialGradient id="w397" gradientUnits="userSpaceOnUse" cx="624.27" cy="968.09" r="315.45"><stop offset="0" stop-color="#fff"/><stop offset="0.35" stop-color="#ff96d9"/><stop offset="0.7" stop-color="#ff43bb"/><stop offset="1" stop-color="#ff00a3"/></radialGradient><radialGradient id="w398" gradientUnits="userSpaceOnUse" cx="624.27" cy="968.09" r="314.61"><stop offset="0" stop-color="#fff"/><stop offset="0.35" stop-color="#ff96dc"/><stop offset="0.7" stop-color="#ff43c0"/><stop offset="1" stop-color="#ff00a9"/></radialGradient><radialGradient id="w399" gradientUnits="userSpaceOnUse" cx="624.27" cy="968.09" r="313.93"><stop offset="0" stop-color="#fff"/><stop offset="0.35" stop-color="#ff96de"/><stop offset="0.7" stop-color="#ff43c4"/><stop offset="1" stop-color="#ff00af"/></radialGradient><radialGradient id="w400" gradientUnits="userSpaceOnUse" cx="624.27" cy="968.09" r="313.41"><stop offset="0" stop-color="#fff"/><stop offset="0.35" stop-color="#ff96e1"/><stop offset="0.7" stop-color="#ff43c9"/><stop offset="1" stop-color="#ff00b5"/></radialGradient><radialGradient id="w401" gradientUnits="userSpaceOnUse" cx="624.27" cy="968.09" r="313.03"><stop offset="0" stop-color="#fff"/><stop offset="0.35" stop-color="#ff96e3"/><stop offset="0.7" stop-color="#ff43cd"/><stop offset="1" stop-color="#ff00bc"/></radialGradient><radialGradient id="w402" gradientUnits="userSpaceOnUse" cx="624.27" cy="968.09" r="312.82"><stop offset="0" stop-color="#fff"/><stop offset="0.35" stop-color="#ff96e6"/><stop offset="0.7" stop-color="#ff43d2"/><stop offset="1" stop-color="#ff00c2"/></radialGradient><radialGradient id="w403" gradientUnits="userSpaceOnUse" cx="624.27" cy="968.09" r="312.76"><stop offset="0" stop-color="#fff"/><stop offset="0.35" stop-color="#ff96e8"/><stop offset="0.7" stop-color="#ff43d6"/><stop offset="1" stop-color="#ff00c8"/></radialGradient><radialGradient id="w404" gradientUnits="userSpaceOnUse" cx="624.27" cy="968.09" r="312.87"><stop offset="0" stop-color="#fff"/><stop offset="0.35" stop-color="#ff96eb"/><stop offset="0.7" stop-color="#ff43db"/><stop offset="1" stop-color="#ff00ce"/></radialGradient><radialGradient id="w405" gradientUnits="userSpaceOnUse" cx="624.27" cy="968.09" r="313.12"><stop offset="0" stop-color="#fff"/><stop offset="0.35" stop-color="#ff96ed"/><stop offset="0.7" stop-color="#ff43df"/><stop offset="1" stop-color="#ff00d4"/></radialGradient><radialGradient id="w406" gradientUnits="userSpaceOnUse" cx="624.27" cy="968.09" r="313.54"><stop offset="0" stop-color="#fff"/><stop offset="0.35" stop-color="#ff96f0"/><stop offset="0.7" stop-color="#ff43e4"/><stop offset="1" stop-color="#ff00da"/></radialGradient><radialGradient id="w407" gradientUnits="userSpaceOnUse" cx="624.27" cy="968.09" r="314.11"><stop offset="0" stop-color="#fff"/><stop offset="0.35" stop-color="#ff96f2"/><stop offset="0.7" stop-color="#ff43e8"/><stop offset="1" stop-color="#ff00e0"/></radialGradient><radialGradient id="w408" gradientUnits="userSpaceOnUse" cx="624.27" cy="968.09" r="314.83"><stop offset="0" stop-color="#fff"/><stop offset="0.35" stop-color="#ff96f5"/><stop offset="0.7" stop-color="#ff43ed"/><stop offset="1" stop-color="#ff00e7"/></radialGradient><radialGradient id="w409" gradientUnits="userSpaceOnUse" cx="624.27" cy="968.09" r="315.71"><stop offset="0" stop-color="#fff"/><stop offset="0.35" stop-color="#ff96f7"/><stop offset="0.7" stop-color="#ff43f1"/><stop offset="1" stop-color="#ff00ec"/></radialGradient><radialGradient id="w410" gradientUnits="userSpaceOnUse" cx="624.27" cy="968.09" r="316.75"><stop offset="0" stop-color="#fff"/><stop offset="0.35" stop-color="#fe96f9"/><stop offset="0.7" stop-color="#fe43f4"/><stop offset="1" stop-color="#fe00f0"/></radialGradient><radialGradient id="w411" gradientUnits="userSpaceOnUse" cx="624.27" cy="968.09" r="317.93"><stop offset="0" stop-color="#fff"/><stop offset="0.35" stop-color="#fe96fa"/><stop offset="0.7" stop-color="#fd43f6"/><stop offset="1" stop-color="#fc00f2"/></radialGradient><radialGradient id="w412" gradientUnits="userSpaceOnUse" cx="624.27" cy="968.09" r="319.27"><stop offset="0" stop-color="#fff"/><stop offset="0.35" stop-color="#fd96fb"/><stop offset="0.7" stop-color="#fc43f7"/><stop offset="1" stop-color="#fb00f4"/></radialGradient><radialGradient id="w413" gradientUnits="userSpaceOnUse" cx="624.27" cy="968.09" r="320.75"><stop offset="0" stop-color="#fff"/><stop offset="0.35" stop-color="#fc96fb"/><stop offset="0.7" stop-color="#fa43f9"/><stop offset="1" stop-color="#f900f6"/></radialGradient><radialGradient id="w414" gradientUnits="userSpaceOnUse" cx="624.27" cy="968.09" r="322.38"><stop offset="0" stop-color="#fff"/><stop offset="0.35" stop-color="#fc96fc"/><stop offset="0.7" stop-color="#f943fa"/><stop offset="1" stop-color="#f700f8"/></radialGradient><radialGradient id="w415" gradientUnits="userSpaceOnUse" cx="624.27" cy="968.09" r="324.15"><stop offset="0" stop-color="#fff"/><stop offset="0.35" stop-color="#fb96fd"/><stop offset="0.7" stop-color="#f843fb"/><stop offset="1" stop-color="#f500fa"/></radialGradient><radialGradient id="w416" gradientUnits="userSpaceOnUse" cx="624.27" cy="968.09" r="326.06"><stop offset="0" stop-color="#fff"/><stop offset="0.35" stop-color="#fa96fe"/><stop offset="0.7" stop-color="#f643fd"/><stop offset="1" stop-color="#f300fc"/></radialGradient><radialGradient id="w417" gradientUnits="userSpaceOnUse" cx="624.27" cy="968.09" r="328.11"><stop offset="0" stop-color="#fff"/><stop offset="0.35" stop-color="#f996fe"/><stop offset="0.7" stop-color="#f543fe"/><stop offset="1" stop-color="#f100fd"/></radialGradient><radialGradient id="w418" gradientUnits="userSpaceOnUse" cx="624.27" cy="968.09" r="330.3"><stop offset="0" stop-color="#fff"/><stop offset="0.35" stop-color="#f896ff"/><stop offset="0.7" stop-color="#f343fe"/><stop offset="1" stop-color="#ee00fe"/></radialGradient><radialGradient id="w419" gradientUnits="userSpaceOnUse" cx="624.27" cy="968.09" r="332.62"><stop offset="0" stop-color="#fff"/><stop offset="0.35" stop-color="#f796ff"/><stop offset="0.7" stop-color="#f043ff"/><stop offset="1" stop-color="#ea00ff"/></radialGradient><radialGradient id="w420" gradientUnits="userSpaceOnUse" cx="624.27" cy="968.09" r="335.07"><stop offset="0" stop-color="#fff"/><stop offset="0.35" stop-color="#f596ff"/><stop offset="0.7" stop-color="#ec43ff"/><stop offset="1" stop-color="#e600ff"/></radialGradient><radialGradient id="w421" gradientUnits="userSpaceOnUse" cx="624.27" cy="968.09" r="337.65"><stop offset="0" stop-color="#fff"/><stop offset="0.35" stop-color="#f396ff"/><stop offset="0.7" stop-color="#e943ff"/><stop offset="1" stop-color="#e100ff"/></radialGradient><radialGradient id="w422" gradientUnits="userSpaceOnUse" cx="624.27" cy="968.09" r="340.36"><stop offset="0" stop-color="#fff"/><stop offset="0.35" stop-color="#f196ff"/><stop offset="0.7" stop-color="#e543ff"/><stop offset="1" stop-color="#dc00ff"/></radialGradient><radialGradient id="w423" gradientUnits="userSpaceOnUse" cx="624.27" cy="968.09" r="343.19"><stop offset="0" stop-color="#fff"/><stop offset="0.35" stop-color="#ef96ff"/><stop offset="0.7" stop-color="#e243ff"/><stop offset="1" stop-color="#d700ff"/></radialGradient><radialGradient id="w424" gradientUnits="userSpaceOnUse" cx="624.27" cy="968.09" r="346.13"><stop offset="0" stop-color="#fff"/><stop offset="0.35" stop-color="#ed96ff"/><stop offset="0.7" stop-color="#de43ff"/><stop offset="1" stop-color="#d300ff"/></radialGradient><radialGradient id="w425" gradientUnits="userSpaceOnUse" cx="624.27" cy="968.09" r="349.2"><stop offset="0" stop-color="#fff"/><stop offset="0.35" stop-color="#eb96ff"/><stop offset="0.7" stop-color="#db43ff"/><stop offset="1" stop-color="#ce00ff"/></radialGradient><radialGradient id="w426" gradientUnits="userSpaceOnUse" cx="624.27" cy="968.09" r="352.37"><stop offset="0" stop-color="#fff"/><stop offset="0.35" stop-color="#e996ff"/><stop offset="0.7" stop-color="#d743ff"/><stop offset="1" stop-color="#c900ff"/></radialGradient><radialGradient id="w427" gradientUnits="userSpaceOnUse" cx="624.27" cy="968.09" r="355.66"><stop offset="0" stop-color="#fff"/><stop offset="0.35" stop-color="#e796ff"/><stop offset="0.7" stop-color="#d443ff"/><stop offset="1" stop-color="#c400ff"/></radialGradient><radialGradient id="w428" gradientUnits="userSpaceOnUse" cx="624.27" cy="968.09" r="359.05"><stop offset="0" stop-color="#fff"/><stop offset="0.35" stop-color="#e596ff"/><stop offset="0.7" stop-color="#d043ff"/><stop offset="1" stop-color="#bf00ff"/></radialGradient><radialGradient id="w429" gradientUnits="userSpaceOnUse" cx="624.27" cy="968.09" r="362.55"><stop offset="0" stop-color="#fff"/><stop offset="0.35" stop-color="#e396ff"/><stop offset="0.7" stop-color="#cd43ff"/><stop offset="1" stop-color="#bb00ff"/></radialGradient><radialGradient id="w430" gradientUnits="userSpaceOnUse" cx="624.27" cy="968.09" r="366.14"><stop offset="0" stop-color="#fff"/><stop offset="0.35" stop-color="#e196ff"/><stop offset="0.7" stop-color="#c943ff"/><stop offset="1" stop-color="#b500ff"/></radialGradient><radialGradient id="w431" gradientUnits="userSpaceOnUse" cx="624.27" cy="968.09" r="369.84"><stop offset="0" stop-color="#fff"/><stop offset="0.35" stop-color="#df96ff"/><stop offset="0.7" stop-color="#c543ff"/><stop offset="1" stop-color="#b000ff"/></radialGradient><radialGradient id="w432" gradientUnits="userSpaceOnUse" cx="624.27" cy="968.09" r="373.63"><stop offset="0" stop-color="#fff"/><stop offset="0.35" stop-color="#dc96ff"/><stop offset="0.7" stop-color="#c043ff"/><stop offset="1" stop-color="#aa00ff"/></radialGradient><radialGradient id="w433" gradientUnits="userSpaceOnUse" cx="624.27" cy="968.09" r="377.51"><stop offset="0" stop-color="#fff"/><stop offset="0.35" stop-color="#d996ff"/><stop offset="0.7" stop-color="#bb43ff"/><stop offset="1" stop-color="#a300ff"/></radialGradient><radialGradient id="w434" gradientUnits="userSpaceOnUse" cx="624.27" cy="968.09" r="381.48"><stop offset="0" stop-color="#fff"/><stop offset="0.35" stop-color="#d796ff"/><stop offset="0.7" stop-color="#b743ff"/><stop offset="1" stop-color="#9d00ff"/></radialGradient><radialGradient id="w435" gradientUnits="userSpaceOnUse" cx="624.27" cy="968.09" r="385.54"><stop offset="0" stop-color="#fff"/><stop offset="0.35" stop-color="#d496ff"/><stop offset="0.7" stop-color="#b243ff"/><stop offset="1" stop-color="#9700ff"/></radialGradient><radialGradient id="w436" gradientUnits="userSpaceOnUse" cx="624.27" cy="968.09" r="389.69"><stop offset="0" stop-color="#fff"/><stop offset="0.35" stop-color="#d296ff"/><stop offset="0.7" stop-color="#ad43ff"/><stop offset="1" stop-color="#9000ff"/></radialGradient><radialGradient id="w437" gradientUnits="userSpaceOnUse" cx="624.27" cy="968.09" r="393.91"><stop offset="0" stop-color="#fff"/><stop offset="0.35" stop-color="#cf96ff"/><stop offset="0.7" stop-color="#a943ff"/><stop offset="1" stop-color="#8a00ff"/></radialGradient><radialGradient id="w438" gradientUnits="userSpaceOnUse" cx="624.27" cy="968.09" r="398.21"><stop offset="0" stop-color="#fff"/><stop offset="0.35" stop-color="#cc96ff"/><stop offset="0.7" stop-color="#a443ff"/><stop offset="1" stop-color="#8300ff"/></radialGradient><radialGradient id="w439" gradientUnits="userSpaceOnUse" cx="624.27" cy="968.09" r="402.59"><stop offset="0" stop-color="#fff"/><stop offset="0.35" stop-color="#ca96ff"/><stop offset="0.7" stop-color="#9f43ff"/><stop offset="1" stop-color="#7d00ff"/></radialGradient><radialGradient id="w440" gradientUnits="userSpaceOnUse" cx="624.27" cy="968.09" r="407.04"><stop offset="0" stop-color="#fff"/><stop offset="0.35" stop-color="#c796ff"/><stop offset="0.7" stop-color="#9a43ff"/><stop offset="1" stop-color="#7700ff"/></radialGradient><radialGradient id="w441" gradientUnits="userSpaceOnUse" cx="624.27" cy="968.09" r="411.57"><stop offset="0" stop-color="#fff"/><stop offset="0.35" stop-color="#c496ff"/><stop offset="0.7" stop-color="#9643ff"/><stop offset="1" stop-color="#7000ff"/></radialGradient><radialGradient id="w442" gradientUnits="userSpaceOnUse" cx="624.27" cy="968.09" r="416.16"><stop offset="0" stop-color="#fff"/><stop offset="0.35" stop-color="#c296ff"/><stop offset="0.7" stop-color="#9143ff"/><stop offset="1" stop-color="#6a00ff"/></radialGradient><radialGradient id="w443" gradientUnits="userSpaceOnUse" cx="624.27" cy="968.09" r="420.82"><stop offset="0" stop-color="#fff"/><stop offset="0.35" stop-color="#c096ff"/><stop offset="0.7" stop-color="#8e43ff"/><stop offset="1" stop-color="#6600ff"/></radialGradient><radialGradient id="w444" gradientUnits="userSpaceOnUse" cx="624.27" cy="968.09" r="425.55"><stop offset="0" stop-color="#fff"/><stop offset="0.35" stop-color="#bf96ff"/><stop offset="0.7" stop-color="#8b43ff"/><stop offset="1" stop-color="#6200ff"/></radialGradient><radialGradient id="w445" gradientUnits="userSpaceOnUse" cx="624.27" cy="968.09" r="430.33"><stop offset="0" stop-color="#fff"/><stop offset="0.35" stop-color="#be96ff"/><stop offset="0.7" stop-color="#8943ff"/><stop offset="1" stop-color="#6000ff"/></radialGradient><radialGradient id="w446" gradientUnits="userSpaceOnUse" cx="624.27" cy="968.09" r="435.18"><stop offset="0" stop-color="#fff"/><stop offset="0.35" stop-color="#bd96ff"/><stop offset="0.7" stop-color="#8843ff"/><stop offset="1" stop-color="#5e00ff"/></radialGradient><radialGradient id="w447" gradientUnits="userSpaceOnUse" cx="624.27" cy="968.09" r="440.09"><stop offset="0" stop-color="#fff"/><stop offset="0.35" stop-color="#bc96ff"/><stop offset="0.7" stop-color="#8643ff"/><stop offset="1" stop-color="#5b00ff"/></radialGradient><radialGradient id="w448" gradientUnits="userSpaceOnUse" cx="624.27" cy="968.09" r="445.05"><stop offset="0" stop-color="#fff"/><stop offset="0.35" stop-color="#bb96ff"/><stop offset="0.7" stop-color="#8543ff"/><stop offset="1" stop-color="#5900ff"/></radialGradient><radialGradient id="w449" gradientUnits="userSpaceOnUse" cx="624.27" cy="968.09" r="450.07"><stop offset="0" stop-color="#fff"/><stop offset="0.35" stop-color="#ba96ff"/><stop offset="0.7" stop-color="#8343ff"/><stop offset="1" stop-color="#5700ff"/></radialGradient><radialGradient id="w450" gradientUnits="userSpaceOnUse" cx="624.27" cy="968.09" r="455.14"><stop offset="0" stop-color="#fff"/><stop offset="0.35" stop-color="#b996ff"/><stop offset="0.7" stop-color="#8243ff"/><stop offset="1" stop-color="#5500ff"/></radialGradient><radialGradient id="w451" gradientUnits="userSpaceOnUse" cx="624.27" cy="968.09" r="460.26"><stop offset="0" stop-color="#fff"/><stop offset="0.35" stop-color="#ba96ff"/><stop offset="0.7" stop-color="#8343ff"/><stop offset="1" stop-color="#5800ff"/></radialGradient><radialGradient id="w452" gradientUnits="userSpaceOnUse" cx="624.27" cy="968.09" r="465.43"><stop offset="0" stop-color="#fff"/><stop offset="0.35" stop-color="#b996ff"/><stop offset="0.7" stop-color="#8143ff"/><stop offset="1" stop-color="#5400ff"/></radialGradient></defs>
<g clip-path="url(#lc)"><path d="M624.27,968.09L389.18,1525.31L375.41,1520.8Z" fill="url(#w0)"/><path d="M624.27,968.09L380.66,1523.78L368.95,1513.82Z" fill="url(#w1)"/><path d="M624.27,968.09L373.74,1517.96L362.19,1507.81Z" fill="url(#w2)"/><path d="M624.27,968.09L366.97,1511.97L355.33,1501.91Z" fill="url(#w3)"/><path d="M624.27,968.09L360.12,1506.05L348.47,1496Z" fill="url(#w4)"/><path d="M624.27,968.09L353.22,1500.19L341.79,1489.88Z" fill="url(#w5)"/><path d="M624.27,968.09L346.42,1494.21L335.36,1483.51Z" fill="url(#w6)"/><path d="M624.27,968.09L339.84,1488L329.17,1476.92Z" fill="url(#w7)"/><path d="M624.27,968.09L333.45,1481.58L323.33,1470.01Z" fill="url(#w8)"/><path d="M624.27,968.09L327.37,1474.88L317.87,1462.8Z" fill="url(#w9)"/><path d="M624.27,968.09L321.67,1467.86L312.7,1455.39Z" fill="url(#w10)"/><path d="M624.27,968.09L316.31,1460.58L307.76,1447.83Z" fill="url(#w11)"/><path d="M624.27,968.09L311.21,1453.13L303.01,1440.16Z" fill="url(#w12)"/><path d="M624.27,968.09L306.33,1445.53L298.41,1432.39Z" fill="url(#w13)"/><path d="M624.27,968.09L301.61,1437.83L293.96,1424.53Z" fill="url(#w14)"/><path d="M624.27,968.09L297.06,1430.04L289.65,1416.59Z" fill="url(#w15)"/><path d="M624.27,968.09L292.65,1422.15L285.47,1408.58Z" fill="url(#w16)"/><path d="M624.27,968.09L288.38,1414.19L281.42,1400.51Z" fill="url(#w17)"/><path d="M624.27,968.09L284.24,1406.17L277.49,1392.37Z" fill="url(#w18)"/><path d="M624.27,968.09L280.24,1398.07L273.67,1384.18Z" fill="url(#w19)"/><path d="M624.27,968.09L276.34,1389.92L269.94,1375.95Z" fill="url(#w20)"/><path d="M624.27,968.09L272.54,1381.72L266.3,1367.67Z" fill="url(#w21)"/><path d="M624.27,968.09L268.85,1373.47L262.74,1359.35Z" fill="url(#w22)"/><path d="M624.27,968.09L265.23,1365.18L259.23,1351.01Z" fill="url(#w23)"/><path d="M624.27,968.09L261.68,1356.85L255.78,1342.64Z" fill="url(#w24)"/><path d="M624.27,968.09L258.19,1348.5L252.38,1334.24Z" fill="url(#w25)"/><path d="M624.27,968.09L254.75,1340.12L249.02,1325.82Z" fill="url(#w26)"/><path d="M624.27,968.09L251.37,1331.72L245.7,1317.38Z" fill="url(#w27)"/><path d="M624.27,968.09L248.02,1323.29L242.41,1308.92Z" fill="url(#w28)"/><path d="M624.27,968.09L244.71,1314.84L239.16,1300.44Z" fill="url(#w29)"/><path d="M624.27,968.09L241.44,1306.38L235.94,1291.95Z" fill="url(#w30)"/><path d="M624.27,968.09L238.19,1297.9L232.76,1283.43Z" fill="url(#w31)"/><path d="M624.27,968.09L234.98,1289.4L229.62,1274.9Z" fill="url(#w32)"/><path d="M624.27,968.09L231.81,1280.87L226.54,1266.34Z" fill="url(#w33)"/><path d="M624.27,968.09L228.69,1272.33L223.49,1257.76Z" fill="url(#w34)"/><path d="M624.27,968.09L225.62,1263.77L220.49,1249.16Z" fill="url(#w35)"/><path d="M624.27,968.09L222.58,1255.18L217.54,1240.54Z" fill="url(#w36)"/><path d="M624.27,968.09L219.59,1246.58L214.65,1231.89Z" fill="url(#w37)"/><path d="M624.27,968.09L216.67,1237.94L211.8,1223.23Z" fill="url(#w38)"/><path d="M624.27,968.09L213.79,1229.29L208.99,1214.55Z" fill="url(#w39)"/><path d="M624.27,968.09L210.94,1220.63L206.27,1205.83Z" fill="url(#w40)"/><path d="M624.27,968.09L208.18,1211.93L203.58,1197.11Z" fill="url(#w41)"/><path d="M624.27,968.09L205.46,1203.22L200.94,1188.36Z" fill="url(#w42)"/><path d="M624.27,968.09L202.78,1194.49L198.38,1179.59Z" fill="url(#w43)"/><path d="M624.27,968.09L200.18,1185.73L195.84,1170.81Z" fill="url(#w44)"/><path d="M624.27,968.09L197.6,1176.96L193.37,1162.01Z" fill="url(#w45)"/><path d="M624.27,968.09L195.09,1168.17L190.94,1153.19Z" fill="url(#w46)"/><path d="M624.27,968.09L192.64,1159.36L188.54,1144.36Z" fill="url(#w47)"/><path d="M624.27,968.09L190.2,1150.54L186.21,1135.51Z" fill="url(#w48)"/><path d="M624.27,968.09L187.85,1141.7L183.89,1126.65Z" fill="url(#w49)"/><path d="M624.27,968.09L185.5,1132.85L181.65,1117.77Z" fill="url(#w50)"/><path d="M624.27,968.09L183.22,1123.99L179.41,1108.89Z" fill="url(#w51)"/><path d="M624.27,968.09L180.97,1115.11L177.24,1099.99Z" fill="url(#w52)"/><path d="M624.27,968.09L178.76,1106.22L175.09,1091.09Z" fill="url(#w53)"/><path d="M624.27,968.09L176.59,1097.32L172.98,1082.18Z" fill="url(#w54)"/><path d="M624.27,968.09L174.45,1088.42L170.9,1073.25Z" fill="url(#w55)"/><path d="M624.27,968.09L172.35,1079.5L168.86,1064.32Z" fill="url(#w56)"/><path d="M624.27,968.09L170.28,1070.58L166.85,1055.38Z" fill="url(#w57)"/><path d="M624.27,968.09L168.25,1061.64L164.87,1046.44Z" fill="url(#w58)"/><path d="M624.27,968.09L166.25,1052.7L162.92,1037.49Z" fill="url(#w59)"/><path d="M624.27,968.09L164.28,1043.76L161,1028.54Z" fill="url(#w60)"/><path d="M624.27,968.09L162.34,1034.81L159.11,1019.58Z" fill="url(#w61)"/><path d="M624.27,968.09L160.43,1025.85L157.26,1010.61Z" fill="url(#w62)"/><path d="M624.27,968.09L158.56,1016.89L155.42,1001.65Z" fill="url(#w63)"/><path d="M624.27,968.09L156.7,1007.92L153.63,992.68Z" fill="url(#w64)"/><path d="M624.27,968.09L154.89,998.95L151.85,983.7Z" fill="url(#w65)"/><path d="M624.27,968.09L153.08,989.99L150.12,974.73Z" fill="url(#w66)"/><path d="M624.27,968.09L151.34,981.01L148.38,965.75Z" fill="url(#w67)"/><path d="M624.27,968.09L149.58,972.04L146.72,956.77Z" fill="url(#w68)"/><path d="M624.27,968.09L147.89,963.06L145.04,947.8Z" fill="url(#w69)"/><path d="M624.27,968.09L146.2,954.08L143.42,938.81Z" fill="url(#w70)"/><path d="M624.27,968.09L144.56,945.1L141.81,929.83Z" fill="url(#w71)"/><path d="M624.27,968.09L142.93,936.12L140.24,920.85Z" fill="url(#w72)"/><path d="M624.27,968.09L141.34,927.14L138.69,911.87Z" fill="url(#w73)"/><path d="M624.27,968.09L139.78,918.16L137.16,902.89Z" fill="url(#w74)"/><path d="M624.27,968.09L138.22,909.18L135.68,893.91Z" fill="url(#w75)"/><path d="M624.27,968.09L136.73,900.2L134.2,884.94Z" fill="url(#w76)"/><path d="M624.27,968.09L135.22,891.22L132.78,875.96Z" fill="url(#w77)"/><path d="M624.27,968.09L133.78,882.24L131.36,866.98Z" fill="url(#w78)"/><path d="M624.27,968.09L132.34,873.26L129.98,858.01Z" fill="url(#w79)"/><path d="M624.27,968.09L130.94,864.29L128.63,849.03Z" fill="url(#w80)"/><path d="M624.27,968.09L129.57,855.31L127.28,840.06Z" fill="url(#w81)"/><path d="M624.27,968.09L128.21,846.34L126,831.09Z" fill="url(#w82)"/><path d="M624.27,968.09L126.91,837.37L124.7,822.12Z" fill="url(#w83)"/><path d="M624.27,968.09L125.59,828.4L123.48,813.15Z" fill="url(#w84)"/><path d="M624.27,968.09L124.34,819.43L122.25,804.19Z" fill="url(#w85)"/><path d="M624.27,968.09L123.1,810.46L121.05,795.23Z" fill="url(#w86)"/><path d="M624.27,968.09L121.88,801.5L119.9,786.27Z" fill="url(#w87)"/><path d="M624.27,968.09L120.71,792.54L118.73,777.31Z" fill="url(#w88)"/><path d="M624.27,968.09L119.53,783.58L117.65,768.35Z" fill="url(#w89)"/><path d="M624.27,968.09L118.42,774.62L116.55,759.4Z" fill="url(#w90)"/><path d="M624.27,968.09L117.3,765.67L115.49,750.45Z" fill="url(#w91)"/><path d="M624.27,968.09L116.23,756.71L114.46,741.5Z" fill="url(#w92)"/><path d="M624.27,968.09L115.18,747.76L113.44,732.55Z" fill="url(#w93)"/><path d="M624.27,968.09L114.14,738.81L112.48,723.6Z" fill="url(#w94)"/><path d="M624.27,968.09L113.16,729.86L111.5,714.66Z" fill="url(#w95)"/><path d="M624.27,968.09L112.17,720.92L110.59,705.72Z" fill="url(#w96)"/><path d="M624.27,968.09L111.23,711.98L109.68,696.78Z" fill="url(#w97)"/><path d="M624.27,968.09L110.31,703.04L108.8,687.85Z" fill="url(#w98)"/><path d="M624.27,968.09L109.41,694.1L107.96,678.91Z" fill="url(#w99)"/><path d="M624.27,968.09L108.56,685.17L107.11,669.98Z" fill="url(#w100)"/><path d="M624.27,968.09L107.69,676.24L106.35,661.05Z" fill="url(#w101)"/><path d="M624.27,968.09L106.9,667.3L105.57,652.12Z" fill="url(#w102)"/><path d="M624.27,968.09L106.1,658.37L104.83,643.2Z" fill="url(#w103)"/><path d="M624.27,968.09L105.34,649.45L104.13,634.27Z" fill="url(#w104)"/><path d="M624.27,968.09L104.62,640.52L103.43,625.35Z" fill="url(#w105)"/><path d="M624.27,968.09L103.9,631.6L102.8,616.43Z" fill="url(#w106)"/><path d="M624.27,968.09L103.25,622.67L102.15,607.51Z" fill="url(#w107)"/><path d="M624.27,968.09L102.58,613.76L101.58,598.59Z" fill="url(#w108)"/><path d="M624.27,968.09L101.99,604.83L101.01,589.68Z" fill="url(#w109)"/><path d="M624.27,968.09L101.4,595.92L100.48,580.76Z" fill="url(#w110)"/><path d="M624.27,968.09L100.85,587L99.99,571.85Z" fill="url(#w111)"/><path d="M624.27,968.09L100.34,578.09L99.51,562.94Z" fill="url(#w112)"/><path d="M624.27,968.09L99.83,569.18L99.11,554.03Z" fill="url(#w113)"/><path d="M624.27,968.09L99.4,560.26L98.68,545.12Z" fill="url(#w114)"/><path d="M624.27,968.09L98.95,551.36L98.36,536.21Z" fill="url(#w115)"/><path d="M624.27,968.09L98.6,542.45L98.02,527.31Z" fill="url(#w116)"/><path d="M624.27,968.09L98.24,533.54L97.75,518.4Z" fill="url(#w117)"/><path d="M624.27,968.09L97.94,524.63L97.5,509.5Z" fill="url(#w118)"/><path d="M624.27,968.09L97.67,515.73L97.3,500.6Z" fill="url(#w119)"/><path d="M624.27,968.09L97.43,506.83L97.15,491.69Z" fill="url(#w120)"/><path d="M624.27,968.09L97.26,497.92L97.02,482.8Z" fill="url(#w121)"/><path d="M624.27,968.09L97.09,489.03L96.97,473.9Z" fill="url(#w122)"/><path d="M624.27,968.09L97.02,480.13L96.91,465Z" fill="url(#w123)"/><path d="M624.27,968.09L96.92,471.23L96.98,456.11Z" fill="url(#w124)"/><path d="M624.27,968.09L96.96,462.33L97.01,447.22Z" fill="url(#w125)"/><path d="M624.27,968.09L96.95,453.44L97.18,438.33Z" fill="url(#w126)"/><path d="M624.27,968.09L97.09,444.55L97.33,429.44Z" fill="url(#w127)"/><path d="M624.27,968.09L97.19,435.66L97.6,420.56Z" fill="url(#w128)"/><path d="M624.27,968.09L97.43,426.78L97.86,411.68Z" fill="url(#w129)"/><path d="M624.27,968.09L97.65,417.89L98.25,402.8Z" fill="url(#w130)"/><path d="M624.27,968.09L97.99,409.01L98.64,393.93Z" fill="url(#w131)"/><path d="M624.27,968.09L98.34,400.14L99.15,385.06Z" fill="url(#w132)"/><path d="M624.27,968.09L98.8,391.27L99.67,376.19Z" fill="url(#w133)"/><path d="M624.27,968.09L99.27,382.4L100.31,367.34Z" fill="url(#w134)"/><path d="M624.27,968.09L99.87,373.54L100.97,358.48Z" fill="url(#w135)"/><path d="M624.27,968.09L100.48,364.68L101.78,349.64Z" fill="url(#w136)"/><path d="M624.27,968.09L101.23,355.83L102.57,340.8Z" fill="url(#w137)"/><path d="M624.27,968.09L101.97,346.98L103.56,331.97Z" fill="url(#w138)"/><path d="M624.27,968.09L102.9,338.15L104.52,323.15Z" fill="url(#w139)"/><path d="M624.27,968.09L103.8,329.32L105.68,314.35Z" fill="url(#w140)"/><path d="M624.27,968.09L104.89,320.51L106.85,305.55Z" fill="url(#w141)"/><path d="M624.27,968.09L106,311.7L108.18,296.77Z" fill="url(#w142)"/><path d="M624.27,968.09L107.25,302.92L109.6,288.01Z" fill="url(#w143)"/><path d="M624.27,968.09L108.6,294.14L111.1,279.26Z" fill="url(#w144)"/><path d="M624.27,968.09L110.01,285.38L112.8,270.55Z" fill="url(#w145)"/><path d="M624.27,968.09L111.63,276.65L114.54,261.84Z" fill="url(#w146)"/><path d="M624.27,968.09L113.28,267.93L116.51,253.18Z" fill="url(#w147)"/><path d="M624.27,968.09L115.13,259.24L118.6,244.55Z" fill="url(#w148)"/><path d="M624.27,968.09L117.13,250.59L120.79,235.94Z" fill="url(#w149)"/><path d="M624.27,968.09L119.2,241.95L123.27,227.41Z" fill="url(#w150)"/><path d="M624.27,968.09L121.54,233.38L125.87,218.91Z" fill="url(#w151)"/><path d="M624.27,968.09L124.03,224.85L128.64,210.46Z" fill="url(#w152)"/><path d="M624.27,968.09L126.66,216.36L131.68,202.11Z" fill="url(#w153)"/><path d="M624.27,968.09L129.52,207.94L134.96,193.84Z" fill="url(#w154)"/><path d="M624.27,968.09L132.64,199.62L138.47,185.66Z" fill="url(#w155)"/><path d="M624.27,968.09L135.98,191.37L142.24,177.6Z" fill="url(#w156)"/><path d="M624.27,968.09L139.56,183.22L146.32,169.68Z" fill="url(#w157)"/><path d="M624.27,968.09L143.41,175.19L150.78,161.96Z" fill="url(#w158)"/><path d="M624.27,968.09L147.61,167.33L155.64,154.47Z" fill="url(#w159)"/><path d="M624.27,968.09L152.19,159.67L160.93,147.28Z" fill="url(#w160)"/><path d="M624.27,968.09L157.17,152.26L166.7,140.44Z" fill="url(#w161)"/><path d="M624.27,968.09L162.6,145.16L172.98,134.07Z" fill="url(#w162)"/><path d="M624.27,968.09L168.5,138.43L179.87,128.33Z" fill="url(#w163)"/><path d="M624.27,968.09L175,132.27L187.26,123.27Z" fill="url(#w164)"/><path d="M624.27,968.09L182.04,126.71L195.14,118.98Z" fill="url(#w165)"/><path d="M624.27,968.09L189.59,121.88L203.42,115.53Z" fill="url(#w166)"/><path d="M624.27,968.09L197.59,117.78L212.09,113.2Z" fill="url(#w167)"/><path d="M624.27,968.09L206.04,114.76L220.93,111.75Z" fill="url(#w168)"/><path d="M624.27,968.09L214.76,112.68L229.86,111.2Z" fill="url(#w169)"/><path d="M624.27,968.09L223.63,111.47L238.79,111.63Z" fill="url(#w170)"/><path d="M624.27,968.09L232.56,111.31L247.65,112.68Z" fill="url(#w171)"/><path d="M624.27,968.09L241.47,111.9L256.4,114.33Z" fill="url(#w172)"/><path d="M624.27,968.09L250.3,113.12L265.01,116.56Z" fill="url(#w173)"/><path d="M624.27,968.09L258.99,115L273.51,119.15Z" fill="url(#w174)"/><path d="M624.27,968.09L267.57,117.32L281.9,122.06Z" fill="url(#w175)"/><path d="M624.27,968.09L276.03,120.01L290.19,125.22Z" fill="url(#w176)"/><path d="M624.27,968.09L284.4,122.99L298.38,128.62Z" fill="url(#w177)"/><path d="M624.27,968.09L292.65,126.24L306.5,132.19Z" fill="url(#w178)"/><path d="M624.27,968.09L300.82,129.68L314.54,135.92Z" fill="url(#w179)"/><path d="M624.27,968.09L308.92,133.3L322.52,139.8Z" fill="url(#w180)"/><path d="M624.27,968.09L316.94,137.08L330.43,143.79Z" fill="url(#w181)"/><path d="M624.27,968.09L324.89,140.99L338.28,147.9Z" fill="url(#w182)"/><path d="M624.27,968.09L332.79,145.01L346.07,152.12Z" fill="url(#w183)"/><path d="M624.27,968.09L340.62,149.16L353.82,156.42Z" fill="url(#w184)"/><path d="M624.27,968.09L348.4,153.41L361.52,160.8Z" fill="url(#w185)"/><path d="M624.27,968.09L356.13,157.73L369.19,165.24Z" fill="url(#w186)"/><path d="M624.27,968.09L363.83,162.12L376.81,169.75Z" fill="url(#w187)"/><path d="M624.27,968.09L371.48,166.59L384.4,174.34Z" fill="url(#w188)"/><path d="M624.27,968.09L379.1,171.12L391.93,179Z" fill="url(#w189)"/><path d="M624.27,968.09L386.66,175.73L399.43,183.73Z" fill="url(#w190)"/><path d="M624.27,968.09L394.19,180.41L406.88,188.53Z" fill="url(#w191)"/><path d="M624.27,968.09L401.67,185.17L414.29,193.39Z" fill="url(#w192)"/><path d="M624.27,968.09L409.11,189.98L421.66,198.32Z" fill="url(#w193)"/><path d="M624.27,968.09L416.5,194.87L428.98,203.31Z" fill="url(#w194)"/><path d="M624.27,968.09L423.86,199.81L436.26,208.37Z" fill="url(#w195)"/><path d="M624.27,968.09L431.17,204.83L443.5,213.48Z" fill="url(#w196)"/><path d="M624.27,968.09L438.44,209.9L450.71,218.65Z" fill="url(#w197)"/><path d="M624.27,968.09L445.67,215.03L457.87,223.87Z" fill="url(#w198)"/><path d="M624.27,968.09L452.86,220.21L465.01,229.14Z" fill="url(#w199)"/><path d="M624.27,968.09L460.02,225.45L472.1,234.46Z" fill="url(#w200)"/><path d="M624.27,968.09L467.14,230.73L479.17,239.83Z" fill="url(#w201)"/><path d="M624.27,968.09L474.23,236.07L486.2,245.24Z" fill="url(#w202)"/><path d="M624.27,968.09L481.28,241.45L493.2,250.69Z" fill="url(#w203)"/><path d="M624.27,968.09L488.3,246.87L500.17,256.18Z" fill="url(#w204)"/><path d="M624.27,968.09L495.3,252.33L507.12,261.71Z" fill="url(#w205)"/><path d="M624.27,968.09L502.26,257.83L514.04,267.27Z" fill="url(#w206)"/><path d="M624.27,968.09L509.2,263.37L520.93,272.87Z" fill="url(#w207)"/><path d="M624.27,968.09L516.11,268.94L527.81,278.5Z" fill="url(#w208)"/><path d="M624.27,968.09L523,274.55L534.65,284.16Z" fill="url(#w209)"/><path d="M624.27,968.09L529.86,280.19L541.47,289.85Z" fill="url(#w210)"/><path d="M624.27,968.09L536.7,285.86L548.28,295.57Z" fill="url(#w211)"/><path d="M624.27,968.09L543.52,291.57L555.06,301.32Z" fill="url(#w212)"/><path d="M624.27,968.09L550.31,297.3L561.83,307.1Z" fill="url(#w213)"/><path d="M624.27,968.09L557.09,303.05L568.58,312.89Z" fill="url(#w214)"/><path d="M624.27,968.09L563.85,308.83L575.31,318.72Z" fill="url(#w215)"/><path d="M624.27,968.09L570.6,314.64L582.03,324.56Z" fill="url(#w216)"/><path d="M624.27,968.09L577.32,320.47L588.73,330.43Z" fill="url(#w217)"/><path d="M624.27,968.09L584.04,326.32L595.42,336.31Z" fill="url(#w218)"/><path d="M624.27,968.09L590.74,332.19L602.1,342.22Z" fill="url(#w219)"/><path d="M624.27,968.09L597.42,338.08L608.76,348.14Z" fill="url(#w220)"/><path d="M624.27,968.09L604.1,343.99L615.42,354.08Z" fill="url(#w221)"/><path d="M624.27,968.09L610.76,349.92L622.07,360.04Z" fill="url(#w222)"/><path d="M624.27,968.09L617.41,355.87L628.71,366.01Z" fill="url(#w223)"/><path d="M624.27,968.09L624.06,361.83L635.34,372Z" fill="url(#w224)"/><path d="M624.27,968.09L630.7,367.8L641.96,378Z" fill="url(#w225)"/><path d="M624.27,968.09L637.32,373.8L648.58,384.02Z" fill="url(#w226)"/><path d="M624.27,968.09L643.95,379.8L655.19,390.05Z" fill="url(#w227)"/><path d="M624.27,968.09L650.56,385.83L661.79,396.09Z" fill="url(#w228)"/><path d="M624.27,968.09L657.17,391.86L668.39,402.15Z" fill="url(#w229)"/><path d="M624.27,968.09L663.77,397.91L674.99,408.22Z" fill="url(#w230)"/><path d="M624.27,968.09L670.37,403.97L681.58,414.31Z" fill="url(#w231)"/><path d="M624.27,968.09L676.97,410.05L688.17,420.4Z" fill="url(#w232)"/><path d="M624.27,968.09L683.56,416.14L694.75,426.51Z" fill="url(#w233)"/><path d="M624.27,968.09L690.14,422.24L701.33,432.63Z" fill="url(#w234)"/><path d="M624.27,968.09L696.73,428.35L707.92,438.76Z" fill="url(#w235)"/><path d="M624.27,968.09L703.31,434.47L714.49,444.9Z" fill="url(#w236)"/><path d="M624.27,968.09L709.89,440.6L721.07,451.05Z" fill="url(#w237)"/><path d="M624.27,968.09L716.47,446.75L727.65,457.22Z" fill="url(#w238)"/><path d="M624.27,968.09L723.05,452.9L734.23,463.39Z" fill="url(#w239)"/><path d="M624.27,968.09L729.62,459.07L740.81,469.57Z" fill="url(#w240)"/><path d="M624.27,968.09L736.2,465.24L747.39,475.76Z" fill="url(#w241)"/><path d="M624.27,968.09L742.78,471.43L753.96,481.96Z" fill="url(#w242)"/><path d="M624.27,968.09L749.36,477.62L760.54,488.18Z" fill="url(#w243)"/><path d="M624.27,968.09L755.94,483.83L767.12,494.4Z" fill="url(#w244)"/><path d="M624.27,968.09L762.52,490.04L773.7,500.63Z" fill="url(#w245)"/><path d="M624.27,968.09L769.09,496.27L780.28,506.88Z" fill="url(#w246)"/><path d="M624.27,968.09L775.67,502.5L786.85,513.13Z" fill="url(#w247)"/><path d="M624.27,968.09L782.25,508.75L793.43,519.4Z" fill="url(#w248)"/><path d="M624.27,968.09L788.83,515.01L800.01,525.68Z" fill="url(#w249)"/><path d="M624.27,968.09L795.4,521.28L806.58,531.97Z" fill="url(#w250)"/><path d="M624.27,968.09L801.98,527.56L813.15,538.27Z" fill="url(#w251)"/><path d="M624.27,968.09L808.55,533.86L819.73,544.58Z" fill="url(#w252)"/><path d="M624.27,968.09L815.13,540.16L826.3,550.9Z" fill="url(#w253)"/><path d="M624.27,968.09L821.7,546.47L832.87,557.24Z" fill="url(#w254)"/><path d="M624.27,968.09L828.27,552.8L839.44,563.58Z" fill="url(#w255)"/><path d="M624.27,968.09L834.84,559.14L846,569.94Z" fill="url(#w256)"/><path d="M624.27,968.09L841.41,565.49L852.57,576.3Z" fill="url(#w257)"/><path d="M624.27,968.09L847.97,571.84L859.13,582.68Z" fill="url(#w258)"/><path d="M624.27,968.09L854.54,578.21L865.69,589.07Z" fill="url(#w259)"/><path d="M624.27,968.09L861.1,584.59L872.24,595.46Z" fill="url(#w260)"/><path d="M624.27,968.09L867.66,590.98L878.8,601.87Z" fill="url(#w261)"/><path d="M624.27,968.09L874.21,597.38L885.35,608.29Z" fill="url(#w262)"/><path d="M624.27,968.09L880.76,603.8L891.89,614.72Z" fill="url(#w263)"/><path d="M624.27,968.09L887.31,610.22L898.43,621.15Z" fill="url(#w264)"/><path d="M624.27,968.09L893.85,616.65L904.97,627.6Z" fill="url(#w265)"/><path d="M624.27,968.09L900.39,623.08L911.5,634.05Z" fill="url(#w266)"/><path d="M624.27,968.09L906.93,629.53L918.02,640.51Z" fill="url(#w267)"/><path d="M624.27,968.09L913.45,635.99L924.54,646.98Z" fill="url(#w268)"/><path d="M624.27,968.09L919.98,642.45L931.05,653.46Z" fill="url(#w269)"/><path d="M624.27,968.09L926.49,648.93L937.56,659.95Z" fill="url(#w270)"/><path d="M624.27,968.09L933,655.41L944.06,666.44Z" fill="url(#w271)"/><path d="M624.27,968.09L939.51,661.89L950.55,672.94Z" fill="url(#w272)"/><path d="M624.27,968.09L946,668.39L957.03,679.44Z" fill="url(#w273)"/><path d="M624.27,968.09L952.5,674.89L963.51,685.94Z" fill="url(#w274)"/><path d="M624.27,968.09L958.98,681.39L969.98,692.45Z" fill="url(#w275)"/><path d="M624.27,968.09L965.45,687.9L976.45,698.97Z" fill="url(#w276)"/><path d="M624.27,968.09L971.92,694.41L982.9,705.48Z" fill="url(#w277)"/><path d="M624.27,968.09L978.38,700.92L989.35,712Z" fill="url(#w278)"/><path d="M624.27,968.09L984.84,707.44L995.79,718.52Z" fill="url(#w279)"/><path d="M624.27,968.09L991.28,713.96L1002.22,725.04Z" fill="url(#w280)"/><path d="M624.27,968.09L997.72,720.48L1008.65,731.57Z" fill="url(#w281)"/><path d="M624.27,968.09L1004.15,727L1015.07,738.09Z" fill="url(#w282)"/><path d="M624.27,968.09L1010.58,733.52L1021.48,744.61Z" fill="url(#w283)"/><path d="M624.27,968.09L1016.99,740.04L1027.88,751.13Z" fill="url(#w284)"/><path d="M624.27,968.09L1023.4,746.56L1034.27,757.65Z" fill="url(#w285)"/><path d="M624.27,968.09L1029.8,753.08L1040.66,764.16Z" fill="url(#w286)"/><path d="M624.27,968.09L1036.19,759.6L1047.04,770.68Z" fill="url(#w287)"/><path d="M624.27,968.09L1042.57,766.12L1053.41,777.2Z" fill="url(#w288)"/><path d="M624.27,968.09L1048.95,772.64L1059.77,783.71Z" fill="url(#w289)"/><path d="M624.27,968.09L1055.32,779.15L1066.12,790.22Z" fill="url(#w290)"/><path d="M624.27,968.09L1061.67,785.66L1072.46,796.73Z" fill="url(#w291)"/><path d="M624.27,968.09L1068.02,792.18L1078.79,803.24Z" fill="url(#w292)"/><path d="M624.27,968.09L1074.36,798.69L1085.11,809.76Z" fill="url(#w293)"/><path d="M624.27,968.09L1080.69,805.2L1091.43,816.27Z" fill="url(#w294)"/><path d="M624.27,968.09L1087.01,811.71L1097.73,822.77Z" fill="url(#w295)"/><path d="M624.27,968.09L1093.32,818.22L1104.03,829.28Z" fill="url(#w296)"/><path d="M624.27,968.09L1099.62,824.73L1110.32,835.78Z" fill="url(#w297)"/><path d="M624.27,968.09L1105.91,831.23L1116.6,842.28Z" fill="url(#w298)"/><path d="M624.27,968.09L1112.2,837.73L1122.88,848.77Z" fill="url(#w299)"/><path d="M624.27,968.09L1118.48,844.23L1129.15,855.25Z" fill="url(#w300)"/><path d="M624.27,968.09L1124.76,850.71L1135.42,861.73Z" fill="url(#w301)"/><path d="M624.27,968.09L1131.03,857.2L1141.69,868.2Z" fill="url(#w302)"/><path d="M624.27,968.09L1137.31,863.67L1147.96,874.66Z" fill="url(#w303)"/><path d="M624.27,968.09L1143.57,870.14L1154.22,881.12Z" fill="url(#w304)"/><path d="M624.27,968.09L1149.84,876.6L1160.48,887.58Z" fill="url(#w305)"/><path d="M624.27,968.09L1156.1,883.06L1166.73,894.03Z" fill="url(#w306)"/><path d="M624.27,968.09L1162.35,889.51L1172.97,900.47Z" fill="url(#w307)"/><path d="M624.27,968.09L1168.6,895.96L1179.21,906.92Z" fill="url(#w308)"/><path d="M624.27,968.09L1174.85,902.41L1185.45,913.36Z" fill="url(#w309)"/><path d="M624.27,968.09L1181.08,908.85L1191.69,919.79Z" fill="url(#w310)"/><path d="M624.27,968.09L1187.32,915.29L1197.92,926.21Z" fill="url(#w311)"/><path d="M624.27,968.09L1193.55,921.72L1204.15,932.63Z" fill="url(#w312)"/><path d="M624.27,968.09L1199.79,928.14L1210.39,939.03Z" fill="url(#w313)"/><path d="M624.27,968.09L1206.03,934.55L1216.63,945.43Z" fill="url(#w314)"/><path d="M624.27,968.09L1212.26,940.95L1222.87,951.82Z" fill="url(#w315)"/><path d="M624.27,968.09L1218.5,947.35L1229.1,958.21Z" fill="url(#w316)"/><path d="M624.27,968.09L1224.74,953.74L1235.32,964.6Z" fill="url(#w317)"/><path d="M624.27,968.09L1230.97,960.12L1241.54,970.99Z" fill="url(#w318)"/><path d="M624.27,968.09L1237.19,966.52L1247.75,977.38Z" fill="url(#w319)"/><path d="M624.27,968.09L1243.4,972.91L1253.95,983.78Z" fill="url(#w320)"/><path d="M624.27,968.09L1249.61,979.3L1260.14,990.17Z" fill="url(#w321)"/><path d="M624.27,968.09L1255.81,985.7L1266.33,996.56Z" fill="url(#w322)"/><path d="M624.27,968.09L1262,992.09L1272.53,1002.95Z" fill="url(#w323)"/><path d="M624.27,968.09L1268.19,998.48L1278.73,1009.31Z" fill="url(#w324)"/><path d="M624.27,968.09L1274.39,1004.86L1284.95,1015.66Z" fill="url(#w325)"/><path d="M624.27,968.09L1280.6,1011.22L1291.17,1022.01Z" fill="url(#w326)"/><path d="M624.27,968.09L1286.82,1017.56L1297.37,1028.36Z" fill="url(#w327)"/><path d="M624.27,968.09L1293.03,1023.92L1303.56,1034.72Z" fill="url(#w328)"/><path d="M624.27,968.09L1299.23,1030.27L1309.75,1041.09Z" fill="url(#w329)"/><path d="M624.27,968.09L1305.42,1036.63L1315.93,1047.45Z" fill="url(#w330)"/><path d="M624.27,968.09L1311.6,1043L1322.11,1053.8Z" fill="url(#w331)"/><path d="M624.27,968.09L1317.78,1049.36L1328.31,1060.13Z" fill="url(#w332)"/><path d="M624.27,968.09L1323.98,1055.7L1334.51,1066.47Z" fill="url(#w333)"/><path d="M624.27,968.09L1330.18,1062.03L1340.68,1072.83Z" fill="url(#w334)"/><path d="M624.27,968.09L1336.47,1068.4L1346.39,1079.09Z" fill="url(#w335)"/><path d="M624.27,968.09L1347.14,1075.55L1333.59,1082.06Z" fill="url(#w336)"/><path d="M624.27,968.09L1339.17,1079.38L1325.61,1085.89Z" fill="url(#w337)"/><path d="M624.27,968.09L1331.2,1083.21L1317.64,1089.73Z" fill="url(#w338)"/><path d="M624.27,968.09L1323.22,1087.05L1309.66,1093.57Z" fill="url(#w339)"/><path d="M624.27,968.09L1315.24,1090.88L1301.68,1097.41Z" fill="url(#w340)"/><path d="M624.27,968.09L1307.26,1094.72L1293.7,1101.26Z" fill="url(#w341)"/><path d="M624.27,968.09L1299.28,1098.56L1285.71,1105.1Z" fill="url(#w342)"/><path d="M624.27,968.09L1291.3,1102.41L1277.73,1108.95Z" fill="url(#w343)"/><path d="M624.27,968.09L1283.32,1106.26L1269.74,1112.81Z" fill="url(#w344)"/><path d="M624.27,968.09L1275.33,1110.11L1261.75,1116.67Z" fill="url(#w345)"/><path d="M624.27,968.09L1267.35,1113.97L1253.76,1120.53Z" fill="url(#w346)"/><path d="M624.27,968.09L1259.36,1117.82L1245.77,1124.39Z" fill="url(#w347)"/><path d="M624.27,968.09L1251.36,1121.69L1237.77,1128.26Z" fill="url(#w348)"/><path d="M624.27,968.09L1243.37,1125.55L1229.77,1132.13Z" fill="url(#w349)"/><path d="M624.27,968.09L1235.37,1129.42L1221.77,1136Z" fill="url(#w350)"/><path d="M624.27,968.09L1227.37,1133.29L1213.76,1139.88Z" fill="url(#w351)"/><path d="M624.27,968.09L1219.37,1137.17L1205.76,1143.76Z" fill="url(#w352)"/><path d="M624.27,968.09L1211.36,1141.04L1197.75,1147.65Z" fill="url(#w353)"/><path d="M624.27,968.09L1203.35,1144.93L1189.73,1151.54Z" fill="url(#w354)"/><path d="M624.27,968.09L1195.34,1148.81L1181.71,1155.43Z" fill="url(#w355)"/><path d="M624.27,968.09L1187.33,1152.7L1173.69,1159.32Z" fill="url(#w356)"/><path d="M624.27,968.09L1179.31,1156.6L1165.67,1163.22Z" fill="url(#w357)"/><path d="M624.27,968.09L1171.29,1160.49L1157.64,1167.13Z" fill="url(#w358)"/><path d="M624.27,968.09L1163.26,1164.4L1149.6,1171.04Z" fill="url(#w359)"/><path d="M624.27,968.09L1155.23,1168.3L1141.57,1174.95Z" fill="url(#w360)"/><path d="M624.27,968.09L1147.19,1172.21L1133.52,1178.86Z" fill="url(#w361)"/><path d="M624.27,968.09L1139.15,1176.12L1125.48,1182.78Z" fill="url(#w362)"/><path d="M624.27,968.09L1131.11,1180.04L1117.42,1186.71Z" fill="url(#w363)"/><path d="M624.27,968.09L1123.06,1183.96L1109.37,1190.63Z" fill="url(#w364)"/><path d="M624.27,968.09L1115.01,1187.89L1101.3,1194.57Z" fill="url(#w365)"/><path d="M624.27,968.09L1106.95,1191.81L1093.24,1198.5Z" fill="url(#w366)"/><path d="M624.27,968.09L1098.88,1195.75L1085.16,1202.44Z" fill="url(#w367)"/><path d="M624.27,968.09L1090.81,1199.68L1077.08,1206.38Z" fill="url(#w368)"/><path d="M624.27,968.09L1082.74,1203.62L1068.99,1210.33Z" fill="url(#w369)"/><path d="M624.27,968.09L1074.65,1207.56L1060.9,1214.28Z" fill="url(#w370)"/><path d="M624.27,968.09L1066.57,1211.51L1052.8,1218.23Z" fill="url(#w371)"/><path d="M624.27,968.09L1058.47,1215.46L1044.69,1222.18Z" fill="url(#w372)"/><path d="M624.27,968.09L1050.37,1219.42L1036.57,1226.14Z" fill="url(#w373)"/><path d="M624.27,968.09L1042.26,1223.37L1028.45,1230.11Z" fill="url(#w374)"/><path d="M624.27,968.09L1034.14,1227.33L1020.32,1234.07Z" fill="url(#w375)"/><path d="M624.27,968.09L1026.01,1231.29L1012.18,1238.04Z" fill="url(#w376)"/><path d="M624.27,968.09L1017.88,1235.26L1004.04,1242Z" fill="url(#w377)"/><path d="M624.27,968.09L1009.74,1239.23L995.88,1245.98Z" fill="url(#w378)"/><path d="M624.27,968.09L1001.59,1243.2L987.71,1249.95Z" fill="url(#w379)"/><path d="M624.27,968.09L993.43,1247.17L979.54,1253.92Z" fill="url(#w380)"/><path d="M624.27,968.09L985.26,1251.14L971.36,1257.9Z" fill="url(#w381)"/><path d="M624.27,968.09L977.09,1255.11L963.17,1261.87Z" fill="url(#w382)"/><path d="M624.27,968.09L968.9,1259.09L954.97,1265.85Z" fill="url(#w383)"/><path d="M624.27,968.09L960.71,1263.06L946.76,1269.82Z" fill="url(#w384)"/><path d="M624.27,968.09L952.5,1267.04L938.54,1273.8Z" fill="url(#w385)"/><path d="M624.27,968.09L944.29,1271.01L930.31,1277.77Z" fill="url(#w386)"/><path d="M624.27,968.09L936.07,1274.99L922.07,1281.74Z" fill="url(#w387)"/><path d="M624.27,968.09L927.83,1278.96L913.82,1285.71Z" fill="url(#w388)"/><path d="M624.27,968.09L919.59,1282.93L905.56,1289.68Z" fill="url(#w389)"/><path d="M624.27,968.09L911.34,1286.9L897.29,1293.64Z" fill="url(#w390)"/><path d="M624.27,968.09L903.08,1290.87L889.01,1297.6Z" fill="url(#w391)"/><path d="M624.27,968.09L894.81,1294.83L880.73,1301.56Z" fill="url(#w392)"/><path d="M624.27,968.09L886.53,1298.79L872.43,1305.51Z" fill="url(#w393)"/><path d="M624.27,968.09L878.24,1302.74L864.13,1309.45Z" fill="url(#w394)"/><path d="M624.27,968.09L869.94,1306.69L855.82,1313.39Z" fill="url(#w395)"/><path d="M624.27,968.09L861.64,1310.63L847.5,1317.33Z" fill="url(#w396)"/><path d="M624.27,968.09L853.32,1314.57L839.17,1321.25Z" fill="url(#w397)"/><path d="M624.27,968.09L845,1318.5L830.84,1325.17Z" fill="url(#w398)"/><path d="M624.27,968.09L836.67,1322.43L822.5,1329.08Z" fill="url(#w399)"/><path d="M624.27,968.09L828.34,1326.35L814.15,1332.99Z" fill="url(#w400)"/><path d="M624.27,968.09L820,1330.26L805.8,1336.88Z" fill="url(#w401)"/><path d="M624.27,968.09L811.65,1334.16L797.45,1340.77Z" fill="url(#w402)"/><path d="M624.27,968.09L803.3,1338.05L789.08,1344.65Z" fill="url(#w403)"/><path d="M624.27,968.09L794.94,1341.93L780.72,1348.52Z" fill="url(#w404)"/><path d="M624.27,968.09L786.58,1345.81L772.35,1352.37Z" fill="url(#w405)"/><path d="M624.27,968.09L778.21,1349.67L763.98,1356.22Z" fill="url(#w406)"/><path d="M624.27,968.09L769.84,1353.53L755.61,1360.06Z" fill="url(#w407)"/><path d="M624.27,968.09L761.47,1357.38L747.24,1363.89Z" fill="url(#w408)"/><path d="M624.27,968.09L753.1,1361.21L738.87,1367.71Z" fill="url(#w409)"/><path d="M624.27,968.09L744.73,1365.04L730.49,1371.52Z" fill="url(#w410)"/><path d="M624.27,968.09L736.36,1368.85L722.12,1375.32Z" fill="url(#w411)"/><path d="M624.27,968.09L727.98,1372.66L713.75,1379.11Z" fill="url(#w412)"/><path d="M624.27,968.09L719.61,1376.45L705.38,1382.88Z" fill="url(#w413)"/><path d="M624.27,968.09L711.24,1380.24L697.02,1386.65Z" fill="url(#w414)"/><path d="M624.27,968.09L702.88,1384.02L688.66,1390.41Z" fill="url(#w415)"/><path d="M624.27,968.09L694.51,1387.78L680.3,1394.17Z" fill="url(#w416)"/><path d="M624.27,968.09L686.15,1391.54L671.94,1397.91Z" fill="url(#w417)"/><path d="M624.27,968.09L677.79,1395.29L663.59,1401.64Z" fill="url(#w418)"/><path d="M624.27,968.09L669.44,1399.03L655.25,1405.37Z" fill="url(#w419)"/><path d="M624.27,968.09L661.09,1402.76L646.91,1409.08Z" fill="url(#w420)"/><path d="M624.27,968.09L652.75,1406.48L638.57,1412.79Z" fill="url(#w421)"/><path d="M624.27,968.09L644.41,1410.2L630.25,1416.49Z" fill="url(#w422)"/><path d="M624.27,968.09L636.08,1413.9L621.92,1420.19Z" fill="url(#w423)"/><path d="M624.27,968.09L627.75,1417.6L613.61,1423.87Z" fill="url(#w424)"/><path d="M624.27,968.09L619.43,1421.29L605.3,1427.56Z" fill="url(#w425)"/><path d="M624.27,968.09L611.11,1424.98L597,1431.23Z" fill="url(#w426)"/><path d="M624.27,968.09L602.81,1428.66L588.7,1434.9Z" fill="url(#w427)"/><path d="M624.27,968.09L594.51,1432.33L580.41,1438.57Z" fill="url(#w428)"/><path d="M624.27,968.09L586.21,1436L572.13,1442.23Z" fill="url(#w429)"/><path d="M624.27,968.09L577.93,1439.66L563.86,1445.88Z" fill="url(#w430)"/><path d="M624.27,968.09L569.65,1443.32L555.59,1449.53Z" fill="url(#w431)"/><path d="M624.27,968.09L561.37,1446.98L547.33,1453.18Z" fill="url(#w432)"/><path d="M624.27,968.09L553.11,1450.63L539.07,1456.82Z" fill="url(#w433)"/><path d="M624.27,968.09L544.85,1454.27L530.83,1460.46Z" fill="url(#w434)"/><path d="M624.27,968.09L536.6,1457.91L522.59,1464.1Z" fill="url(#w435)"/><path d="M624.27,968.09L528.36,1461.55L514.36,1467.73Z" fill="url(#w436)"/><path d="M624.27,968.09L520.12,1465.19L506.13,1471.36Z" fill="url(#w437)"/><path d="M624.27,968.09L511.89,1468.82L497.91,1474.99Z" fill="url(#w438)"/><path d="M624.27,968.09L503.66,1472.45L489.7,1478.62Z" fill="url(#w439)"/><path d="M624.27,968.09L495.45,1476.08L481.49,1482.24Z" fill="url(#w440)"/><path d="M624.27,968.09L487.24,1479.7L473.3,1485.86Z" fill="url(#w441)"/><path d="M624.27,968.09L479.03,1483.33L465.1,1489.48Z" fill="url(#w442)"/><path d="M624.27,968.09L470.84,1486.95L456.92,1493.1Z" fill="url(#w443)"/><path d="M624.27,968.09L462.65,1490.57L448.74,1496.72Z" fill="url(#w444)"/><path d="M624.27,968.09L454.46,1494.19L440.56,1500.34Z" fill="url(#w445)"/><path d="M624.27,968.09L446.28,1497.81L432.39,1503.96Z" fill="url(#w446)"/><path d="M624.27,968.09L438.11,1501.43L424.23,1507.57Z" fill="url(#w447)"/><path d="M624.27,968.09L429.94,1505.04L416.07,1511.19Z" fill="url(#w448)"/><path d="M624.27,968.09L421.78,1508.66L407.92,1514.8Z" fill="url(#w449)"/><path d="M624.27,968.09L413.63,1512.27L399.77,1518.42Z" fill="url(#w450)"/><path d="M624.27,968.09L405.47,1515.89L391.63,1522.03Z" fill="url(#w451)"/><path d="M624.27,968.09L397.33,1519.5L383.49,1525.65Z" fill="url(#w452)"/></g>
<g clip-path="url(#lc)" opacity="0.22"><line x1="275.4" y1="276.2" x2="275.4" y2="1405.0" stroke="#9a9a9a" stroke-width="2" stroke-dasharray="8 4.5"/><line x1="341.8" y1="276.2" x2="341.8" y2="1405.0" stroke="#606060" stroke-width="2"/><line x1="408.2" y1="276.2" x2="408.2" y2="1405.0" stroke="#9a9a9a" stroke-width="2" stroke-dasharray="8 4.5"/><line x1="474.6" y1="276.2" x2="474.6" y2="1405.0" stroke="#606060" stroke-width="2"/><line x1="541" y1="276.2" x2="541" y2="1405.0" stroke="#9a9a9a" stroke-width="2" stroke-dasharray="8 4.5"/><line x1="607.4" y1="276.2" x2="607.4" y2="1405.0" stroke="#606060" stroke-width="2"/><line x1="673.8" y1="276.2" x2="673.8" y2="1405.0" stroke="#9a9a9a" stroke-width="2" stroke-dasharray="8 4.5"/><line x1="740.2" y1="276.2" x2="740.2" y2="1405.0" stroke="#606060" stroke-width="2"/><line x1="806.6" y1="276.2" x2="806.6" y2="1405.0" stroke="#9a9a9a" stroke-width="2" stroke-dasharray="8 4.5"/><line x1="873" y1="276.2" x2="873" y2="1405.0" stroke="#606060" stroke-width="2"/><line x1="939.4" y1="276.2" x2="939.4" y2="1405.0" stroke="#9a9a9a" stroke-width="2" stroke-dasharray="8 4.5"/><line x1="1005.8" y1="276.2" x2="1005.8" y2="1405.0" stroke="#606060" stroke-width="2"/><line x1="1072.2" y1="276.2" x2="1072.2" y2="1405.0" stroke="#9a9a9a" stroke-width="2" stroke-dasharray="8 4.5"/><line x1="1138.6" y1="276.2" x2="1138.6" y2="1405.0" stroke="#606060" stroke-width="2"/><line x1="209.0" y1="1338.6" x2="1205" y2="1338.6" stroke="#9a9a9a" stroke-width="2" stroke-dasharray="8 4.5"/><line x1="209.0" y1="1272.2" x2="1205" y2="1272.2" stroke="#606060" stroke-width="2"/><line x1="209.0" y1="1205.8" x2="1205" y2="1205.8" stroke="#9a9a9a" stroke-width="2" stroke-dasharray="8 4.5"/><line x1="209.0" y1="1139.4" x2="1205" y2="1139.4" stroke="#606060" stroke-width="2"/><line x1="209.0" y1="1073" x2="1205" y2="1073" stroke="#9a9a9a" stroke-width="2" stroke-dasharray="8 4.5"/><line x1="209.0" y1="1006.6" x2="1205" y2="1006.6" stroke="#606060" stroke-width="2"/><line x1="209.0" y1="940.2" x2="1205" y2="940.2" stroke="#9a9a9a" stroke-width="2" stroke-dasharray="8 4.5"/><line x1="209.0" y1="873.8" x2="1205" y2="873.8" stroke="#606060" stroke-width="2"/><line x1="209.0" y1="807.4" x2="1205" y2="807.4" stroke="#9a9a9a" stroke-width="2" stroke-dasharray="8 4.5"/><line x1="209.0" y1="741" x2="1205" y2="741" stroke="#606060" stroke-width="2"/><line x1="209.0" y1="674.6" x2="1205" y2="674.6" stroke="#9a9a9a" stroke-width="2" stroke-dasharray="8 4.5"/><line x1="209.0" y1="608.2" x2="1205" y2="608.2" stroke="#606060" stroke-width="2"/><line x1="209.0" y1="541.8" x2="1205" y2="541.8" stroke="#9a9a9a" stroke-width="2" stroke-dasharray="8 4.5"/><line x1="209.0" y1="475.4" x2="1205" y2="475.4" stroke="#606060" stroke-width="2"/><line x1="209.0" y1="409" x2="1205" y2="409" stroke="#9a9a9a" stroke-width="2" stroke-dasharray="8 4.5"/><line x1="209.0" y1="342.6" x2="1205" y2="342.6" stroke="#606060" stroke-width="2"/></g>
<path d="M440.22,1398.41 L440.21,1398.38 L440.19,1398.37 L440.16,1398.37 L440.13,1398.37 L440.09,1398.39 L440.04,1398.41 L439.99,1398.42 L439.93,1398.44 L439.87,1398.46 L439.81,1398.47 L439.74,1398.47 L439.68,1398.46 L439.61,1398.46 L439.55,1398.46 L439.49,1398.47 L439.43,1398.49 L439.37,1398.52 L439.32,1398.56 L439.26,1398.6 L439.2,1398.63 L439.13,1398.65 L439.05,1398.66 L438.96,1398.66 L438.87,1398.66 L438.77,1398.65 L438.66,1398.65 L438.55,1398.64 L438.43,1398.63 L438.31,1398.63 L438.19,1398.63 L438.06,1398.63 L437.94,1398.62 L437.81,1398.62 L437.67,1398.61 L437.54,1398.59 L437.39,1398.55 L437.23,1398.5 L437.05,1398.43 L436.86,1398.34 L436.63,1398.23 L436.38,1398.09 L436.1,1397.93 L435.8,1397.74 L435.49,1397.54 L435.16,1397.31 L434.82,1397.06 L434.47,1396.79 L434.1,1396.5 L433.7,1396.18 L433.27,1395.84 L432.81,1395.46 L432.31,1395.05 L431.78,1394.62 L431.22,1394.14 L430.64,1393.63 L430.04,1393.09 L429.41,1392.51 L428.76,1391.89 L428.07,1391.25 L427.34,1390.58 L426.56,1389.88 L425.74,1389.15 L424.87,1388.38 L423.93,1387.56 L422.94,1386.69 L421.88,1385.76 L420.76,1384.77 L419.57,1383.72 L418.32,1382.62 L417.02,1381.48 L415.65,1380.29 L414.23,1379.04 L412.73,1377.72 L411.16,1376.31 L409.51,1374.8 L407.79,1373.18 L405.98,1371.45 L404.11,1369.6 L402.17,1367.64 L400.18,1365.56 L398.13,1363.35 L396.01,1360.97 L393.79,1358.33 L391.45,1355.38 L388.94,1352.04 L386.27,1348.26 L383.41,1344.01 L380.38,1339.27 L377.19,1334.02 L373.83,1328.24 L370.31,1321.91 L366.63,1314.96 L362.77,1307.32 L358.75,1298.92 L354.54,1289.68 L350.14,1279.53 L345.53,1268.42 L340.69,1256.29 L335.6,1243.09 L330.23,1228.77 L324.58,1213.28 L318.7,1196.55 L312.64,1178.54 L306.47,1159.19 L300.25,1138.44 L294.03,1116.26 L287.82,1092.65 L281.63,1067.6 L275.45,1041.14 L269.28,1013.27 L263.13,984.03 L257.08,953.58 L251.18,922.12 L245.51,889.84 L240.15,856.93 L235.17,823.6 L230.61,790.03 L226.5,756.44 L222.91,723.02 L219.85,689.98 L217.38,657.5 L215.53,625.71 L214.35,594.7 L213.87,564.56 L214.13,535.4 L215.16,507.32 L217,480.47 L219.64,454.99 L223.11,431.03 L227.42,408.75 L232.57,388.27 L238.52,369.72 L245.21,353.2 L252.59,338.8 L260.59,326.64 L269.17,316.76 L278.24,309.08 L287.73,303.44 L297.56,299.7 L307.67,297.71 L317.98,297.33 L328.46,298.35 L339.07,300.57 L349.8,303.79 L360.6,307.79 L371.46,312.4 L382.33,317.5 L393.15,323 L403.88,328.8 L414.47,334.82 L424.88,340.97 L435.13,347.25 L445.23,353.67 L455.23,360.25 L465.14,367 L474.99,373.92 L484.79,381.01 L494.54,388.27 L504.26,395.68 L513.94,403.25 L523.59,410.96 L533.21,418.81 L542.82,426.79 L552.4,434.89 L561.96,443.1 L571.49,451.42 L581.02,459.83 L590.53,468.34 L600.03,476.94 L609.52,485.61 L619.02,494.37 L628.52,503.19 L638.02,512.08 L647.52,521.04 L657.01,530.05 L666.51,539.11 L676.01,548.21 L685.5,557.35 L694.99,566.53 L704.48,575.73 L713.96,584.95 L723.44,594.2 L732.91,603.45 L742.36,612.72 L751.81,622 L761.23,631.28 L770.64,640.56 L780.02,649.83 L789.38,659.1 L798.71,668.35 L808.01,677.57 L817.27,686.78 L826.5,695.95 L835.68,705.08 L844.81,714.17 L853.88,723.22 L862.91,732.21 L871.87,741.14 L880.76,750.01 L889.59,758.81 L898.34,767.53 L907.01,776.17 L915.6,784.72 L924.09,793.17 L932.48,801.52 L940.77,809.76 L948.95,817.89 L957.01,825.91 L964.97,833.82 L972.8,841.62 L980.51,849.31 L988.07,856.86 L995.48,864.26 L1002.69,871.46 L1009.69,878.45 L1016.47,885.21 L1023.04,891.75 L1029.42,898.1 L1035.63,904.29 L1041.71,910.33 L1047.66,916.26 L1053.47,922.05 L1059.12,927.67 L1064.58,933.12 L1069.85,938.35 L1074.9,943.37 L1079.74,948.17 L1084.38,952.77 L1088.84,957.18 L1093.13,961.43 L1097.25,965.53 L1101.22,969.47 L1105.02,973.26 L1108.66,976.9 L1112.15,980.37 L1115.47,983.69 L1118.64,986.86 L1121.66,989.88 L1124.55,992.77 L1127.31,995.52 L1129.95,998.15 L1132.48,1000.66 L1134.9,1003.06 L1137.21,1005.34 L1139.41,1007.53 L1141.52,1009.62 L1143.53,1011.62 L1145.46,1013.54 L1147.32,1015.39 L1149.12,1017.18 L1150.86,1018.92 L1152.54,1020.6 L1154.16,1022.22 L1155.73,1023.78 L1157.23,1025.28 L1158.67,1026.73 L1160.06,1028.11 L1161.38,1029.44 L1162.65,1030.71 L1163.87,1031.92 L1165.04,1033.09 L1166.16,1034.21 L1167.23,1035.27 L1168.24,1036.27 L1169.18,1037.21 L1170.07,1038.09 L1170.9,1038.91 L1171.68,1039.69 L1172.42,1040.42 L1173.11,1041.11 L1173.78,1041.78 L1174.42,1042.41 L1175.02,1043.02 L1175.6,1043.6 L1176.14,1044.14 L1176.66,1044.66 L1177.14,1045.15 L1177.6,1045.6 L1178.02,1046.02 L1178.4,1046.4 L1178.75,1046.75 L1179.06,1047.06 L1179.35,1047.35 L1179.63,1047.63 L1179.89,1047.89 L1180.14,1048.14 L1180.39,1048.39 L1180.63,1048.63 L1180.86,1048.86 L1181.08,1049.08 L1181.29,1049.29 L1181.49,1049.49 L1181.68,1049.68 L1181.87,1049.87 L1182.05,1050.05 L1182.24,1050.24 L1182.42,1050.42 L1182.61,1050.61 L1182.8,1050.8 L1182.98,1050.98 L1183.17,1051.17 L1183.35,1051.35 L1183.52,1051.52 L1183.68,1051.68 L1183.82,1051.82 L1183.94,1051.94 L1184.04,1052.04 L1184.13,1052.13 L1184.2,1052.2 L1184.27,1052.27 L1184.33,1052.33 L1184.39,1052.39 L1184.44,1052.44 L1184.49,1052.49 L1184.54,1052.54 L1184.57,1052.57 L1184.61,1052.61 L1184.63,1052.63 L1184.65,1052.65 L1184.67,1052.67 Z" fill="none" stroke="#000" stroke-width="3.5" stroke-linejoin="round"/>
<path d="M417.02,1381.48L408.46,1391.27M400.18,1365.56L390.73,1374.48M373.83,1328.24L362.53,1334.67M330.23,1228.77L318.04,1233.28M269.28,1013.27L256.57,1016.01M219.85,689.98L206.9,691.07M227.42,408.75L214.73,405.94M307.67,297.71L306.21,284.8M414.47,334.82L420.99,323.57M513.94,403.25L522,393.05M609.52,485.61L618.32,476.03M704.48,575.73L713.53,566.41M798.71,668.35L807.87,659.12M889.59,758.81L898.76,749.6M972.8,841.62L981.98,832.41M1041.71,910.33L1050.88,901.12M1093.13,961.43L1102.29,952.21M1127.31,995.52L1136.49,986.31M1149.12,1017.18L1158.3,1007.98M1173.11,1041.11L1182.29,1031.91" stroke="#000" stroke-width="3" fill="none"/>
<path d="M1058.92,966.76 L607.4,608.2 L408.2,1325.32 Z" fill="none" stroke="#000" stroke-width="7" stroke-linejoin="round"/>
<circle cx="1058.92" cy="966.76" r="17" fill="none" stroke="#000" stroke-width="4"/><circle cx="607.4" cy="608.2" r="17" fill="none" stroke="#000" stroke-width="4"/><circle cx="408.2" cy="1325.32" r="17" fill="none" stroke="#000" stroke-width="4"/><circle cx="624.27" cy="968.09" r="17" fill="none" stroke="#000" stroke-width="4"/>
<path d="M1112.04,980.04 L560.92,488.68 L408.2,1325.32 Z" fill="none" stroke="#000" stroke-width="7" stroke-linejoin="round"/>
<path d="M1112.04,960.54L1112.04,999.54M1128.93,970.29L1095.15,989.79M1128.93,989.79L1095.15,970.29" stroke="#000" stroke-width="4.5" fill="none"/><path d="M560.92,469.18L560.92,508.18M577.81,478.93L544.03,498.43M577.81,498.43L544.03,478.93" stroke="#000" stroke-width="4.5" fill="none"/><path d="M408.2,1305.82L408.2,1344.82M425.09,1315.57L391.31,1335.07M425.09,1335.07L391.31,1315.57" stroke="#000" stroke-width="4.5" fill="none"/><path d="M625.99,919.37L625.99,958.37M642.88,929.12L609.1,948.62M642.88,948.62L609.1,929.12" stroke="#000" stroke-width="4.5" fill="none"/>
<path d="M1058.92,966.76 L487.88,462.12 L408.2,1325.32 Z" fill="none" stroke="#8080ff" stroke-width="7" stroke-linejoin="round"/>
<path d="M1040.92,953.76 L1076.92,953.76 L1058.92,980.76 Z" fill="none" stroke="#8080ff" stroke-width="4"/><path d="M469.88,449.12 L505.88,449.12 L487.88,476.12 Z" fill="none" stroke="#8080ff" stroke-width="4"/><path d="M390.2,1312.32 L426.2,1312.32 L408.2,1339.32 Z" fill="none" stroke="#8080ff" stroke-width="4"/><path d="M606.27,955.09 L642.27,955.09 L624.27,982.09 Z" fill="none" stroke="#8080ff" stroke-width="4"/>
<path d="M1112.84,982.96 L518.03,439.68 L389.87,1343.25 Z" fill="none" stroke="#ff00ff" stroke-width="7" stroke-linejoin="round"/>
<rect x="1098.84" y="968.96" width="28" height="28" fill="none" stroke="#ff00ff" stroke-width="4"/><rect x="504.03" y="425.68" width="28" height="28" fill="none" stroke="#ff00ff" stroke-width="4"/><rect x="375.87" y="1329.25" width="28" height="28" fill="none" stroke="#ff00ff" stroke-width="4"/>
<path d="M1058.92,966.76 L607.4,608.2 L408.2,1325.32 Z" fill="#ffff18" fill-opacity="0.72"/>
<path d="M1058.92,966.76 L607.4,608.2 L408.2,1325.32 Z" fill="none" stroke="#d2c400" stroke-width="7" stroke-linejoin="round"/>
<path d="M1110.48,980.81 L1011.44,890.35 L560.92,488.68 L408.2,1325.32 Z" fill="#ffff18" fill-opacity="0.72"/>
<path d="M1110.48,980.81 L1011.44,890.35 L560.92,488.68 L408.2,1325.32 Z" fill="none" stroke="#cc3812" stroke-width="7" stroke-linejoin="round"/>
<path d="M1058.92,966.76 L511.84,483.29 L437.62,1006.59 L408.2,1325.32 Z" fill="#ffff18" fill-opacity="0.72"/>
<path d="M1058.92,966.76 L511.84,483.29 L437.62,1006.59 L408.2,1325.32 Z" fill="none" stroke="#00ffff" stroke-width="7" stroke-linejoin="round"/>
<g stroke="#000" opacity="0.07"><path d="M958.84,869.97 L951.8,867.31 L944.47,864.79 L936.89,862.46 L929.1,860.35 L921.13,858.49 L913.02,856.9 L904.8,855.6 L896.49,854.62 L888.12,853.94 L879.71,853.59 L871.28,853.51 L862.85,853.73 L854.43,854.25 L846.05,855.06 L837.71,856.15 L829.42,857.52 L821.2,859.15 L813.05,861.04 L804.99,863.18 L797.02,865.54 L789.14,868.13 L781.37,870.92 L773.71,873.91 L766.15,877.08 L758.72,880.41 L751.4,883.9 L744.2,887.53 L737.13,891.3 L730.18,895.18 L723.36,899.16 L716.66,903.24 L710.02,907.42 L703.64,911.54 L697.43,915.7 L691.39,919.89 L685.52,924.08 L679.83,928.29 L674.3,932.48 L668.95,936.66 L663.77,940.82 L658.76,944.94 L653.91,949.03 L649.22,953.07 L644.7,957.07 L640.33,961.01 L636.12,964.88 L632.05,968.7 L628.13,972.44 L624.36,976.12 L620.72,979.72 L617.22,983.24 L613.84,986.69 L610.6,990.06 L607.47,993.34 L604.47,996.54 L601.57,999.67 L598.79,1002.71 L596.12,1005.66 L593.55,1008.54 L591.08,1011.33 L588.7,1014.05 L586.42,1016.68 L584.23,1019.23 L582.12,1021.71 L580.1,1024.11 L578.15,1026.44 L576.28,1028.69 L574.49,1030.87 L572.76,1032.98 L571.11,1035.02 L569.52,1036.99 L567.99,1038.89 L566.52,1040.74 L565.11,1042.52 L563.75,1044.24 L562.45,1045.9 L561.2,1047.5 L560,1049.05 L558.85,1050.55 L557.74,1051.99 L556.67,1053.38 L555.65,1054.72 L554.67,1056.02 L553.72,1057.27 L552.81,1058.48 L551.94,1059.64 L551.1,1060.76 L550.29,1061.84 L549.51,1062.89" fill="none" stroke-width="2.5"/><path d="M549.51,1062.89L538.27,1054.54M559.19,1050.1L548.11,1041.54M569.98,1036.41L559.08,1027.63M581.77,1022.13L571.08,1013.09M601.07,1000.22L590.76,990.75M615.86,984.62L605.87,974.82M636.64,964.4L627.12,954.14M667.15,938.09L658.41,927.16M714.34,904.7L706.89,892.84M788.78,868.26L784.21,855.02M908.73,856.18L906.56,870.02" fill="none" stroke-width="2"/></g><g fill="#000" opacity="0.07" font-size="20"><text transform="translate(519 1040.24) rotate(-143.41)" y="6" text-anchor="middle">20000</text><text transform="translate(529.11 1026.89) rotate(-142.35)" y="6" text-anchor="middle">15000</text><text transform="translate(540.39 1012.57) rotate(-141.14)" y="6" text-anchor="middle">12000</text><text transform="translate(552.75 997.59) rotate(-139.77)" y="6" text-anchor="middle">10000</text><text transform="translate(573.08 974.51) rotate(-137.44)" y="6" text-anchor="middle">8000</text><text transform="translate(588.73 958.02) rotate(-135.57)" y="6" text-anchor="middle">7000</text><text transform="translate(610.8 936.54) rotate(-132.83)" y="6" text-anchor="middle">6000</text><text transform="translate(643.43 908.4) rotate(-128.62)" y="6" text-anchor="middle">5000</text><text transform="translate(694.13 872.52) rotate(-122.14)" y="6" text-anchor="middle">4000</text><text transform="translate(776.37 832.34) rotate(-109.06)" y="6" text-anchor="middle">3000</text><text transform="translate(902.85 893.73) rotate(98.9)" y="6" text-anchor="middle">2000</text></g>
<rect x="209.0" y="276.2" width="996" height="1128.8" fill="none" stroke="#000" stroke-width="5.5"/>
<path d="M196,1405L209.0,1405M196,1272.2L209.0,1272.2M196,1139.4L209.0,1139.4M196,1006.6L209.0,1006.6M196,873.8L209.0,873.8M196,741L209.0,741M196,608.2L209.0,608.2M196,475.4L209.0,475.4M196,342.6L209.0,342.6M209,1405.0L209,1418M341.8,1405.0L341.8,1418M474.6,1405.0L474.6,1418M607.4,1405.0L607.4,1418M740.2,1405.0L740.2,1418M873,1405.0L873,1418M1005.8,1405.0L1005.8,1418M1138.6,1405.0L1138.6,1418" stroke="#222" stroke-width="2.2" fill="none"/>
<g font-size="44.5" fill="#000"><text transform="translate(184.5 1419.8) scale(0.97 1)" text-anchor="end">0.0</text><text transform="translate(184.5 1287) scale(0.97 1)" text-anchor="end">0.1</text><text transform="translate(184.5 1154.2) scale(0.97 1)" text-anchor="end">0.2</text><text transform="translate(184.5 1021.4) scale(0.97 1)" text-anchor="end">0.3</text><text transform="translate(184.5 888.6) scale(0.97 1)" text-anchor="end">0.4</text><text transform="translate(184.5 755.8) scale(0.97 1)" text-anchor="end">0.5</text><text transform="translate(184.5 623) scale(0.97 1)" text-anchor="end">0.6</text><text transform="translate(184.5 490.2) scale(0.97 1)" text-anchor="end">0.7</text><text transform="translate(184.5 357.4) scale(0.97 1)" text-anchor="end">0.8</text><text transform="translate(214.8 1463.3) scale(0.97 1)" text-anchor="middle">0.0</text><text transform="translate(347.6 1463.3) scale(0.97 1)" text-anchor="middle">0.1</text><text transform="translate(480.4 1463.3) scale(0.97 1)" text-anchor="middle">0.2</text><text transform="translate(613.2 1463.3) scale(0.97 1)" text-anchor="middle">0.3</text><text transform="translate(746 1463.3) scale(0.97 1)" text-anchor="middle">0.4</text><text transform="translate(878.8 1463.3) scale(0.97 1)" text-anchor="middle">0.5</text><text transform="translate(1011.6 1463.3) scale(0.97 1)" text-anchor="middle">0.6</text><text transform="translate(1144.4 1463.3) scale(0.97 1)" text-anchor="middle">0.7</text></g>
<text x="706" y="1524.7" font-size="67" text-anchor="middle">x</text>
<text x="76" y="916.8" font-size="67" text-anchor="middle">y</text>
<text x="1222.3" y="1544.4" font-size="34.3" text-anchor="end">CIE1931</text>
<g font-size="28" text-anchor="middle" fill="#000" stroke="#fff" stroke-width="4" paint-order="stroke" stroke-linejoin="round"><text x="391.67" y="1418.79">450</text><text x="371.36" y="1401.07">460</text><text x="337.4" y="1357.26">470</text><text x="289.9" y="1251.99">480</text><text x="230.53" y="1029.92">490</text><text x="180.05" y="701.64">500</text><text x="188.73" y="408.49">510</text><text x="304.77" y="280.38">520</text><text x="430.53" y="315.41">530</text><text x="534.98" y="384.94">540</text><text x="633.07" y="468.26">550</text><text x="728.97" y="558.82">560</text><text x="823.55" y="651.61">570</text><text x="914.5" y="742.11">580</text><text x="997.71" y="824.92">590</text><text x="1066.61" y="893.63">600</text><text x="1117.97" y="944.7">610</text><text x="1152.22" y="978.82">620</text><text x="1174.04" y="1000.49">630</text><text x="1198.03" y="1024.41">650</text></g>
</svg></body></html>
